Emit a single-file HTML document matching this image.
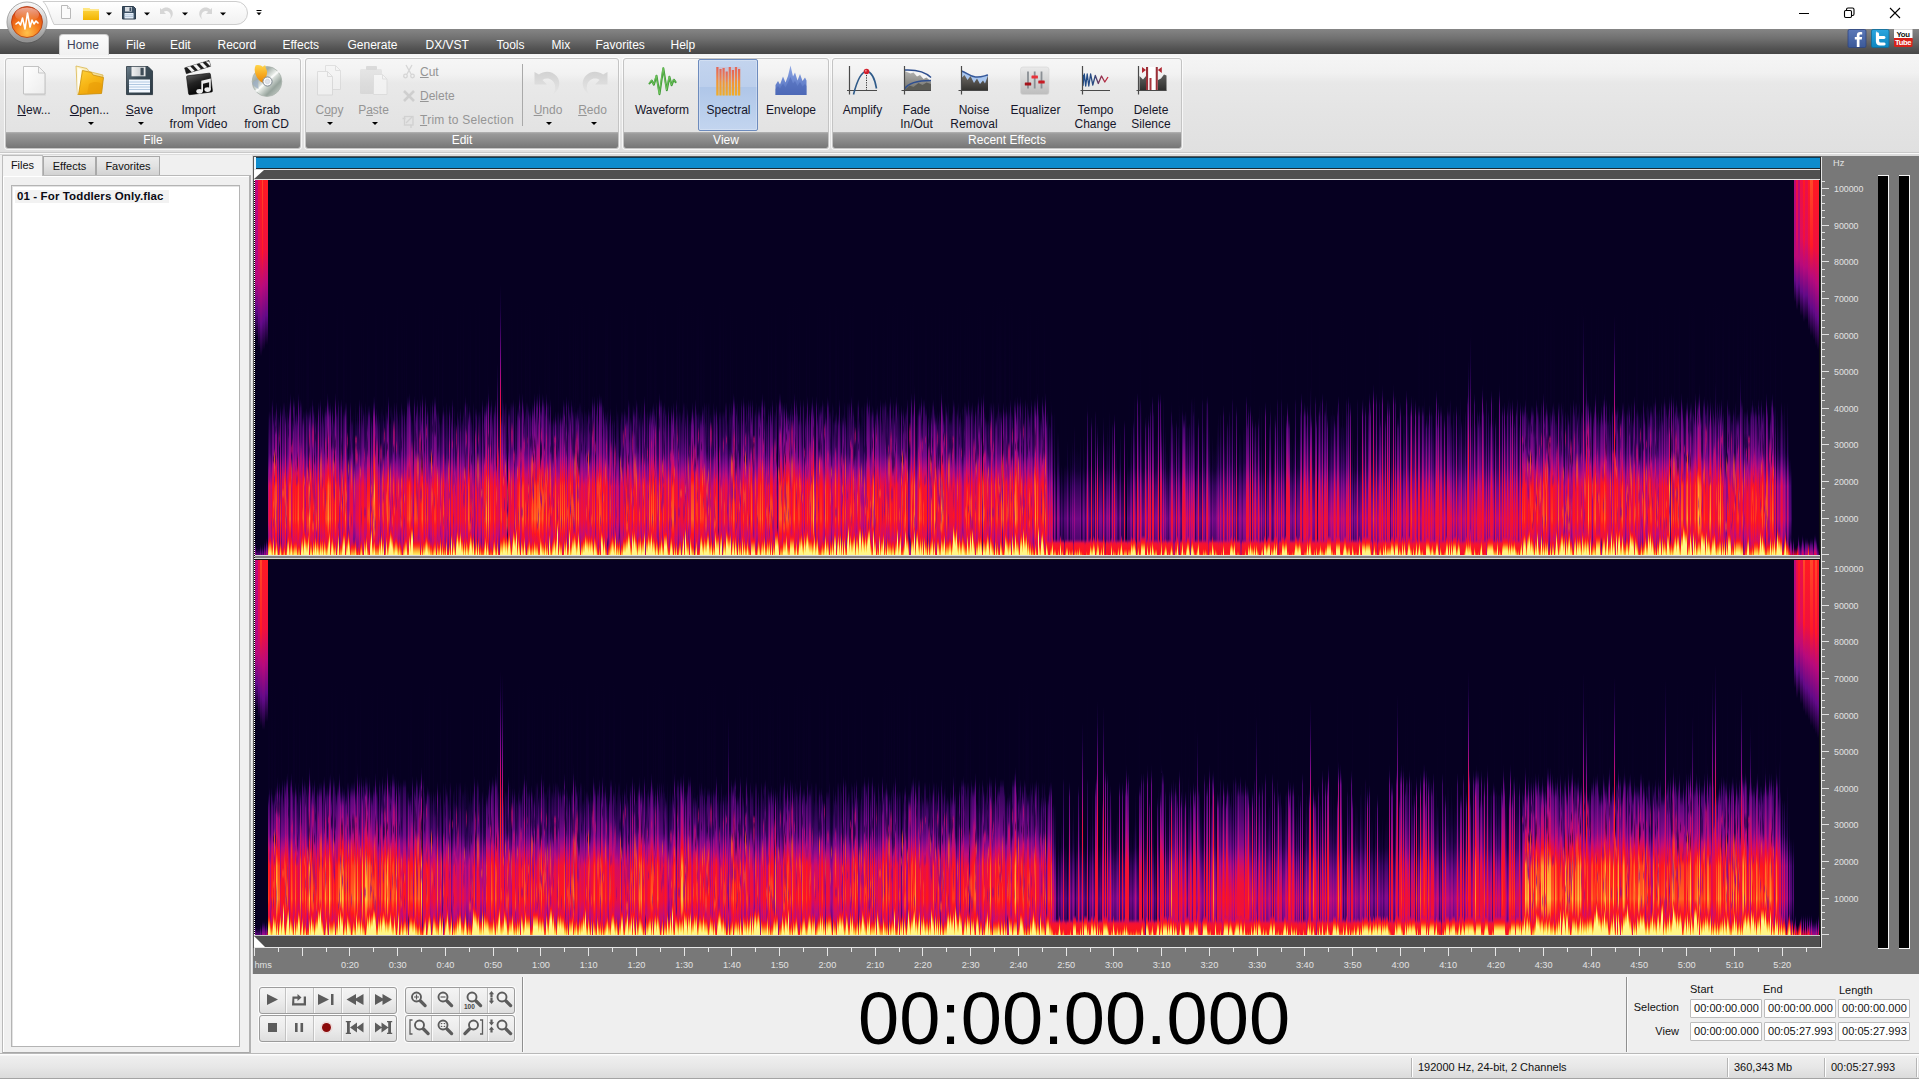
<!DOCTYPE html>
<html lang="en"><head><meta charset="utf-8"><title>Audio Editor</title>
<style>
*{box-sizing:border-box;margin:0;padding:0}
html,body{width:1919px;height:1079px;overflow:hidden}
body{position:relative;background:#f0f0f0;font-family:"Liberation Sans",sans-serif;font-size:12px;color:#16162a;-webkit-font-smoothing:antialiased}
.abs{position:absolute}
#title{left:0;top:0;width:1919px;height:29px;background:#fff}
#menubar{left:0;top:29px;width:1919px;height:25px;background:linear-gradient(#858585 0,#707070 38%,#535353 78%,#464646 100%)}
.mi{position:absolute;top:37px;height:16px;line-height:16px;color:#fff;font-size:12px;white-space:nowrap}
#hometab{left:59px;top:34px;width:50px;height:21px;border-radius:4px 4px 0 0;background:linear-gradient(#fbfbfb,#f1f1f1);border:1px solid #cfcfcf;border-bottom:none}
#ribbon{left:0;top:54px;width:1919px;height:99px;background:linear-gradient(#f5f5f5 0,#f1f1f1 19%,#e8e8e8 29%,#e4e4e4 60%,#e0e0e0 100%)}
#ribline{left:0;top:152px;width:1919px;height:3px;background:linear-gradient(#c9c9c9 0,#c9c9c9 33%,#fafafa 34%,#fafafa 66%,#dcdcdc 67%)}
.grp{position:absolute;top:58px;height:91px;border:1px solid #c4c4c4;border-radius:3px;background:linear-gradient(#f6f6f6 0,#f2f2f2 17%,#e9e9e9 27%,#e5e5e5 60%,#e1e1e1 100%);box-shadow:0 0 0 1px rgba(255,255,255,.7);overflow:hidden}
.grp .lab{position:absolute;left:0;right:0;bottom:0;height:16px;line-height:17px;text-align:center;color:#fff;font-size:12px;background:linear-gradient(#b4b4b4 0,#9a9a9a 12%,#8b8b8b 50%,#767676 100%)}
.bl{position:absolute;text-align:center;white-space:nowrap;line-height:14px;font-size:12px;transform:translateX(-50%)}
.dis{color:#959595}
.dd{position:absolute;width:0;height:0;border-left:3px solid transparent;border-right:3px solid transparent;border-top:3px solid #000;margin-left:-3px}
u{text-decoration:underline;text-underline-offset:1px}
.ic{position:absolute;overflow:visible}
</style></head><body>
<div id="title" class="abs"></div>
<div id="menubar" class="abs"></div>
<div id="ribbon" class="abs"></div>
<div id="ribline" class="abs"></div>
<!-- quick access pill -->
<svg class="abs" style="left:40px;top:0" width="215" height="28" viewBox="0 0 215 28">
<defs><linearGradient id="qp" x1="0" y1="0" x2="0" y2="1"><stop offset="0" stop-color="#fff"/><stop offset="1" stop-color="#f1f1f1"/></linearGradient></defs>
<path d="M3 1.5H196A11.5 11.5 0 0 1 196 24.5H14C9 14 8 6 3 1.5Z" fill="url(#qp)" stroke="#cdcdcd" stroke-width="1"/>
</svg>
<!-- app button -->
<svg class="abs" style="left:5px;top:0" width="46" height="46" viewBox="0 0 46 46">
<defs>
<linearGradient id="ab1" x1="0" y1="0" x2="0" y2="1"><stop offset="0" stop-color="#fdfdfd"/><stop offset=".5" stop-color="#c9c9c9"/><stop offset="1" stop-color="#8d8d8d"/></linearGradient>
<radialGradient id="ab2" cx=".5" cy=".85" r=".9"><stop offset="0" stop-color="#ffc24a"/><stop offset=".45" stop-color="#f57a1c"/><stop offset="1" stop-color="#d2340f"/></radialGradient>
<linearGradient id="ab3" x1="0" y1="0" x2="0" y2="1"><stop offset="0" stop-color="#fff" stop-opacity=".55"/><stop offset="1" stop-color="#fff" stop-opacity="0"/></linearGradient>
</defs>
<circle cx="22" cy="23" r="20.5" fill="#000" opacity=".10"/>
<circle cx="22" cy="22" r="20" fill="url(#ab1)" stroke="#9a9a9a" stroke-width=".8"/>
<circle cx="22" cy="22" r="15.5" fill="url(#ab2)" stroke="#b03a10" stroke-width=".8"/>
<ellipse cx="22" cy="14.5" rx="12" ry="7" fill="url(#ab3)"/>
<path d="M11 24l2.5-2 2 3 2-7 2.5 11 2.5-16 2.5 14 2-7 2 4 2-3 2 2" fill="none" stroke="#fff" stroke-width="1.6" stroke-linejoin="round" stroke-linecap="round"/>
</svg>
<!-- quick access icons -->
<svg class="abs" style="left:56px;top:2px" width="215" height="24" viewBox="0 0 215 24">
<defs>
<linearGradient id="qf" x1="0" y1="0" x2="0" y2="1"><stop offset="0" stop-color="#ffd84a"/><stop offset="1" stop-color="#f2b400"/></linearGradient>
</defs>
<!-- new doc -->
<path d="M5.5 3.5h6l3 3v10h-9z" fill="#fbfbfb" stroke="#b9b9b9"/><path d="M11.5 3.5v3h3" fill="#eee" stroke="#b9b9b9" stroke-width=".8"/>
<!-- folder -->
<path d="M27 6h6l1.5 1.5H43V18H27z" fill="url(#qf)"/><path d="M27 6h6l1.5 1.5H43V9H27z" fill="#ffe680"/>
<path d="M50 10.5h6l-3 3z" fill="#000"/>
<!-- save -->
<path d="M66.5 4.5h11l2 2v10.5h-13z" fill="#3c5064" stroke="#2d3d4e"/><rect x="69" y="5" width="7" height="4.5" fill="#d9dde2"/><rect x="73.5" y="5.5" width="1.8" height="3.5" fill="#3c5064"/><rect x="68.5" y="11" width="9" height="5.5" fill="#e9f1fa"/><path d="M68.5 12.8h9M68.5 14.6h9" stroke="#9db5cf" stroke-width=".7"/>
<path d="M88 10.5h6l-3 3z" fill="#000"/>
<!-- undo (disabled) -->
<path d="M104 6v6h6l-2.2-2.2c2.5-1.6 6-.6 6.8 3.2.4 1.5-.1 3-.9 4.3 3.5-2.5 4.2-7 1.3-9.8-2.7-2.6-6.6-2.5-9.3-.1z" fill="#d6d6d6"/>
<path d="M126 10.5h6l-3 3z" fill="#000"/>
<!-- redo (disabled) -->
<path d="M156 6v6h-6l2.2-2.2c-2.5-1.6-6-.6-6.8 3.2-.4 1.5.1 3 .9 4.3-3.5-2.5-4.2-7-1.3-9.8 2.7-2.6 6.6-2.5 9.3-.1z" fill="#d6d6d6"/>
<path d="M164 10.5h6l-3 3z" fill="#000"/>
<!-- customize -->
<path d="M200.5 8.5h5" stroke="#000" stroke-width="1"/><path d="M200.5 10.5h5l-2.5 2.8z" fill="#000"/>
</svg>
<!-- window controls -->
<svg class="abs" style="left:1790px;top:0" width="129" height="29" viewBox="0 0 129 29">
<path d="M9 13.5h10" stroke="#000" stroke-width="1"/>
<rect x="54.5" y="10.5" width="7" height="7" rx="1.2" fill="none" stroke="#000" stroke-width="1.1"/><path d="M56.5 10.5v-1q0-1.5 1.5-1.5h4.5q1.5 0 1.5 1.5v4.5q0 1.5-1.5 1.5h-1" fill="none" stroke="#000" stroke-width="1.1"/>
<path d="M100 8l10 10M110 8l-10 10" stroke="#000" stroke-width="1.1"/>
</svg>
<!-- social -->
<svg class="abs" style="left:1847px;top:29px" width="68" height="20" viewBox="0 0 68 20">
<defs><linearGradient id="fb" x1="0" y1="0" x2="0" y2="1"><stop offset="0" stop-color="#5b78b8"/><stop offset="1" stop-color="#3b5998"/></linearGradient>
<linearGradient id="tw" x1="0" y1="0" x2="0" y2="1"><stop offset="0" stop-color="#2aa5de"/><stop offset="1" stop-color="#0d86c0"/></linearGradient></defs>
<rect x="1" y=".5" width="18" height="18" rx="1.5" fill="url(#fb)" stroke="#2d4580" stroke-width=".8"/>
<path d="M12.5 18v-7.5h2.3l.3-2.5h-2.6v-1.3c0-.8.3-1.2 1.3-1.2h1.4v-2.3c-.4 0-1.2-.1-2.1-.1-2.1 0-3.3 1.2-3.3 3.3v1.6h-2v2.5h2v7.5z" fill="#fff"/>
<rect x="24.5" y=".5" width="17.5" height="18" rx="1.5" fill="url(#tw)" stroke="#0b6d9c" stroke-width=".8"/>
<path d="M29.5 3.5q2.5-.6 2.6 1.5v2h5q1.4.1 1.4 1.5t-1.4 1.5h-5v2q.1 1.5 1.6 1.5h3.6q1.3.1 1.3 1.5t-1.3 1.5h-4.2q-4-.2-4.2-4v-9q0-1.3.6-1.5z" fill="#fff"/>
<rect x="47" y=".3" width="18.5" height="9" fill="#fff"/><rect x="47" y="9" width="18.5" height="9" rx="1.5" fill="#d8221a"/><rect x="47" y="9" width="18.5" height="4" fill="#d8221a"/>
<text x="56" y="7.8" font-family="Liberation Sans,sans-serif" font-weight="bold" font-size="7.8" text-anchor="middle" fill="#111" letter-spacing="-.3">You</text>
<text x="56" y="16.2" font-family="Liberation Sans,sans-serif" font-weight="bold" font-size="7.6" text-anchor="middle" fill="#fff" letter-spacing="-.35">Tube</text>
</svg>
<!-- menu -->
<div id="hometab" class="abs"></div>
<div class="mi" style="left:67px;color:#3d4259">Home</div>
<div class="mi" style="left:126px">File</div>
<div class="mi" style="left:170px">Edit</div>
<div class="mi" style="left:217.5px">Record</div>
<div class="mi" style="left:282.5px">Effects</div>
<div class="mi" style="left:347.5px">Generate</div>
<div class="mi" style="left:425.5px">DX/VST</div>
<div class="mi" style="left:496.5px">Tools</div>
<div class="mi" style="left:551.5px">Mix</div>
<div class="mi" style="left:595.5px">Favorites</div>
<div class="mi" style="left:670.5px">Help</div>
<div class="grp" style="left:5px;width:296px"><div class="lab">File</div></div>
<div class="grp" style="left:305px;width:314px"><div class="lab">Edit</div></div>
<div class="grp" style="left:623px;width:206px"><div class="lab">View</div></div>
<div class="grp" style="left:832px;width:350px"><div class="lab">Recent Effects</div></div>
<!-- selected Spectral -->
<div class="abs" style="left:698px;top:59px;width:60px;height:72px;border:1px solid #6d8bbd;border-radius:2px;background:linear-gradient(#c3d4ee 0,#bccfec 38%,#afc6e8 39%,#b9ceec 70%,#c3d5ef 100%);box-shadow:inset 0 0 0 1px rgba(255,255,255,.25)"></div>
<!-- labels -->
<div class="bl" style="left:34px;top:103px"><u>N</u>ew...</div>
<div class="bl" style="left:89.5px;top:103px"><u>O</u>pen...</div><div class="dd" style="left:90.5px;top:122px"></div>
<div class="bl" style="left:139.5px;top:103px"><u>S</u>ave</div><div class="dd" style="left:140.5px;top:122px"></div>
<div class="bl" style="left:198.5px;top:103px">Import<br>from Video</div>
<div class="bl" style="left:266.5px;top:103px">Grab<br>from CD</div>
<div class="bl dis" style="left:329.5px;top:103px">C<u>o</u>py</div><div class="dd" style="left:329.5px;top:122px"></div>
<div class="bl dis" style="left:373.5px;top:103px">P<u>a</u>ste</div><div class="dd" style="left:374.5px;top:122px"></div>
<div class="bl dis" style="left:420px;top:65px;transform:none"><u>C</u>ut</div>
<div class="bl dis" style="left:420px;top:89px;transform:none"><u>D</u>elete</div>
<div class="bl dis" style="left:420px;top:113px;transform:none;letter-spacing:.25px"><u>T</u>rim to Selection</div>
<div class="abs" style="left:521.5px;top:64px;width:1px;height:62px;background:#a9a9a9"></div>
<div class="bl dis" style="left:548px;top:103px"><u>U</u>ndo</div><div class="dd" style="left:548.5px;top:122px"></div>
<div class="bl dis" style="left:592.5px;top:103px"><u>R</u>edo</div><div class="dd" style="left:593.5px;top:122px"></div>
<div class="bl" style="left:662px;top:103px">Waveform</div>
<div class="bl" style="left:728.5px;top:103px">Spectral</div>
<div class="bl" style="left:791px;top:103px">Envelope</div>
<div class="bl" style="left:862.5px;top:103px">Amplify</div>
<div class="bl" style="left:916.5px;top:103px">Fade<br>In/Out</div>
<div class="bl" style="left:974px;top:103px">Noise<br>Removal</div>
<div class="bl" style="left:1035.5px;top:103px">Equalizer</div>
<div class="bl" style="left:1095.5px;top:103px">Tempo<br>Change</div>
<div class="bl" style="left:1151px;top:103px">Delete<br>Silence</div>
<!-- New -->
<svg class="ic" style="left:20px;top:63px" width="30" height="36" viewBox="0 0 30 36">
<defs><linearGradient id="ng" x1="0" y1="0" x2="1" y2="1"><stop offset="0" stop-color="#ffffff"/><stop offset="1" stop-color="#ececec"/></linearGradient></defs>
<path d="M4 4.5h15l6 6v21H4z" fill="#000" opacity=".08" transform="translate(.7 1)"/>
<path d="M3.5 3.5h15l6.5 6.5v21h-21.5z" fill="url(#ng)" stroke="#c3c3c3" stroke-width="1"/>
<path d="M18.5 3.5v6.5h6.5z" fill="#f3f3f3" stroke="#c3c3c3" stroke-width=".9" stroke-linejoin="round"/>
</svg>
<!-- Open -->
<svg class="ic" style="left:73px;top:62px" width="34" height="36" viewBox="0 0 34 36">
<defs><linearGradient id="og" x1="0" y1="0" x2=".6" y2="1"><stop offset="0" stop-color="#ffd23a"/><stop offset=".55" stop-color="#f7b616"/><stop offset="1" stop-color="#eda20a"/></linearGradient>
<linearGradient id="og2" x1="0" y1="0" x2="1" y2="0"><stop offset="0" stop-color="#fff6d0"/><stop offset="1" stop-color="#f0d78a"/></linearGradient></defs>
<path d="M3 4l11 2.5 2 3 14 3.5-1.5 18L4.5 32.5z" fill="url(#og2)" stroke="#d9b64e" stroke-width=".8"/>
<path d="M4.5 6l4 1 -2.5 24.5-1.5.5z" fill="#fffdf2"/>
<path d="M9.5 8.5l9 2 1.5 2.5 10.5 2.5-2 16-23 1z" fill="url(#og)" stroke="#c98f10" stroke-width=".8" stroke-linejoin="round"/>
<path d="M16 22c5-3 10-2 13 0l-.8 8.5-14 1z" fill="#e89a06" opacity=".55"/>
</svg>
<!-- Save -->
<svg class="ic" style="left:124px;top:63px" width="32" height="35" viewBox="0 0 32 35">
<defs><linearGradient id="sg" x1="0" y1="0" x2="1" y2="1"><stop offset="0" stop-color="#6d7f8c"/><stop offset=".4" stop-color="#3d4d58"/><stop offset="1" stop-color="#2c3a44"/></linearGradient>
<linearGradient id="sg2" x1="0" y1="0" x2="1" y2="0"><stop offset="0" stop-color="#f2f2f2"/><stop offset=".6" stop-color="#cfd3d6"/><stop offset="1" stop-color="#e9e9e9"/></linearGradient></defs>
<path d="M2.5 3.5h21l5 5v23h-26z" fill="#000" opacity=".12" transform="translate(.6 1)"/>
<path d="M2.5 3.5h21.5l4.5 4.5v23.5h-26z" fill="url(#sg)" stroke="#2a3640" stroke-width=".8"/>
<rect x="7.5" y="3.8" width="14" height="9.5" fill="url(#sg2)"/>
<rect x="16.5" y="4.8" width="3.2" height="7.5" fill="#3e4c57"/>
<rect x="5" y="16.5" width="21" height="13" fill="#f4f9ff"/>
<path d="M5 19h21M5 21.5h21M5 24h21M5 26.5h21" stroke="#a8c2de" stroke-width=".9"/>
</svg>
<!-- Import from Video -->
<svg class="ic" style="left:183px;top:62px" width="34" height="36" viewBox="0 0 34 36">
<defs><linearGradient id="ig" x1="0" y1="0" x2=".3" y2="1"><stop offset="0" stop-color="#5a5a5a"/><stop offset=".45" stop-color="#232323"/><stop offset="1" stop-color="#050505"/></linearGradient></defs>
<g transform="rotate(-7 16 22)">
<rect x="4.5" y="12.5" width="24" height="19" rx="1.2" fill="url(#ig)" stroke="#0a0a0a" stroke-width=".6"/>
</g>
<g transform="rotate(-17 4 12)">
<rect x="3.5" y="5.5" width="25.5" height="6" fill="#1c1c1c" stroke="#111" stroke-width=".5"/>
<path d="M6 5.5l3 6h3.3L9.3 5.5zM12.5 5.5l3 6h3.3L15.8 5.5zM19 5.5l3 6h3.3L22.3 5.5zM25.5 5.5l3 6h.5V6.5z" fill="#f2f2f2"/>
</g>
<g fill="#ececec"><ellipse cx="16.5" cy="29.3" rx="3.2" ry="2.4"/><ellipse cx="24.6" cy="27.6" rx="3.2" ry="2.4"/><path d="M18.3 18.8l9.5-2.3v11h-1.7v-7.3l-6.1 1.5v7.7h-1.7z"/></g>
</svg>
<!-- Grab from CD -->
<svg class="ic" style="left:250px;top:62px" width="36" height="38" viewBox="0 0 36 38">
<defs>
<linearGradient id="cdg" x1="0" y1="0" x2="1" y2="1"><stop offset="0" stop-color="#dfe4e0"/><stop offset=".3" stop-color="#9faaa4"/><stop offset=".5" stop-color="#eef2ee"/><stop offset=".72" stop-color="#96a39c"/><stop offset="1" stop-color="#d8ddd8"/></linearGradient>
<linearGradient id="flg" x1="0" y1="0" x2="0" y2="1"><stop offset="0" stop-color="#ffd54a"/><stop offset=".6" stop-color="#f5a21a"/><stop offset="1" stop-color="#e8850a"/></linearGradient></defs>
<ellipse cx="17" cy="19.5" rx="14.8" ry="15" fill="url(#cdg)" stroke="#aab2ac" stroke-width=".8"/>
<path d="M17 19.5L29 9M17 19.5L5.5 29.5" stroke="#fff" stroke-width="2" opacity=".75"/>
<path d="M5.5 3.5c3-1 6 0 7.5 1.5.5-1 .8-1.8 2.5-1.5-.5 2.5 1 3 1.5 5.5.5 3-1 5-1 7.5 0 2 .5 3-1 5-2.5-.5-6-2.5-8-6C4.5 11 4 7 5.5 3.5z" fill="url(#flg)"/>
<path d="M8 18c-3 0-5 1.5-5.5 3.5 1.5 3 3.5 4 6 5.5z" fill="#9fb0c4" opacity=".8"/>
<circle cx="17.5" cy="19.5" r="4.6" fill="#f6f6f8" stroke="#7d878f" stroke-width="1"/>
<circle cx="17.5" cy="19.5" r="2.2" fill="#dfe3ea" stroke="#c5c9d2" stroke-width=".5"/>
</svg>
<!-- Copy (disabled) -->
<svg class="ic" style="left:314px;top:63px" width="32" height="34" viewBox="0 0 32 34" opacity=".55">
<path d="M11.5 2.5h10l5 5v19h-15z" fill="#f6f6f6" stroke="#d0d0d0"/><path d="M21.5 2.5v5h5" fill="none" stroke="#d0d0d0"/>
<path d="M3.5 8.5h10l5 5v18.5h-15z" fill="#f8f8f8" stroke="#cdcdcd"/><path d="M13.5 8.5v5h5" fill="none" stroke="#cdcdcd"/>
</svg>
<!-- Paste (disabled) -->
<svg class="ic" style="left:357px;top:63px" width="34" height="34" viewBox="0 0 34 34" opacity=".6">
<defs><linearGradient id="pg" x1="0" y1="0" x2="0" y2="1"><stop offset="0" stop-color="#dcdcdc"/><stop offset="1" stop-color="#cfcfcf"/></linearGradient></defs>
<rect x="3" y="6" width="22" height="25" rx="1.5" fill="url(#pg)"/>
<rect x="9" y="3" width="11" height="4" rx="1" fill="#c9c9c9"/>
<path d="M16.5 11.5h9l4.5 4.5v15.5h-13.5z" fill="#f8f8f8" stroke="#d6d6d6"/><path d="M25.5 11.5v4.5h4.5" fill="none" stroke="#d6d6d6"/>
</svg>
<!-- Cut / Delete / Trim icons (disabled) -->
<svg class="ic" style="left:401px;top:63px" width="16" height="66" viewBox="0 0 16 66" opacity=".8">
<g stroke="#cfcfcf" fill="none" stroke-width="1.3"><path d="M5 2l5 9M11 2L6 11"/><circle cx="4.5" cy="13" r="1.8"/><circle cx="11.5" cy="13" r="1.8"/></g>
<path d="M3 28l10 10M13 28L3 38" stroke="#c9c9c9" stroke-width="2.6"/>
<g stroke="#cdcdcd" fill="none" stroke-width="1.3"><rect x="3.5" y="53.5" width="8.5" height="8.5"/><path d="M1.5 55.5h3M10 62v3M5 60l6-6"/></g>
</svg>
<!-- Undo / Redo (disabled) -->
<svg class="ic" style="left:532px;top:66px" width="78" height="34" viewBox="0 0 78 34">
<defs><linearGradient id="ug" x1="0" y1="0" x2="0" y2="1"><stop offset="0" stop-color="#d2d2d2"/><stop offset="1" stop-color="#e6e6e6"/></linearGradient></defs>
<path d="M2.5 6v12.5h12.5l-4.6-4.6c4.5-2.8 11-1.5 12.6 5.6.8 3.4-.5 6.5-2 9 6.5-4.5 8.5-12.5 3.5-18.5-4.5-5.2-12-5.7-17.6-1.5z" fill="url(#ug)"/>
<path d="M75.5 6v12.5H63l4.6-4.6c-4.5-2.8-11-1.5-12.6 5.6-.8 3.4.5 6.5 2 9-6.5-4.5-8.5-12.5-3.5-18.5 4.5-5.2 12-5.7 17.6-1.5z" fill="url(#ug)"/>
</svg>
<!-- Waveform -->
<svg class="ic" style="left:646px;top:64px" width="34" height="34" viewBox="0 0 34 34">
<path d="M3.5 19.5l2.2-3 2.2 4.2 2.6-9 3 18.5 3.8-26 3.5 22 2.6-13.5 2.2 8.5 2.2-5.5 1.8 2.5" fill="none" stroke="#3f9a36" stroke-width="2" stroke-linejoin="round" stroke-linecap="round"/>
<path d="M3.5 19.5l2.2-3 2.2 4.2 2.6-9 3 18.5 3.8-26 3.5 22 2.6-13.5 2.2 8.5 2.2-5.5 1.8 2.5" fill="none" stroke="#7fd06a" stroke-width=".7" stroke-linejoin="round" stroke-linecap="round" transform="translate(-.3 -.3)"/>
</svg>
<!-- Spectral -->
<svg class="ic" style="left:714px;top:64px" width="30" height="34" viewBox="0 0 30 34">
<defs><linearGradient id="spg" x1="0" y1="0" x2="0" y2="1"><stop offset="0" stop-color="#e2655a"/><stop offset=".45" stop-color="#f08a4a"/><stop offset=".46" stop-color="#f0923a"/><stop offset="1" stop-color="#f0ae2a"/></linearGradient></defs>
<g fill="url(#spg)"><rect x="2" y="3" width="24.5" height="28.5" opacity=".15"/>
<rect x="2.3" y="3" width="2.2" height="28.5"/><rect x="5.4" y="5" width="2.2" height="26.5"/><rect x="8.5" y="4" width="2.2" height="27.5"/><rect x="11.6" y="7.5" width="2.2" height="24"/><rect x="14.7" y="3" width="2.2" height="28.5"/><rect x="17.8" y="6" width="2.2" height="25.5"/><rect x="20.9" y="3" width="2.2" height="28.5"/><rect x="24" y="5" width="2.2" height="26.5"/></g>
</svg>
<!-- Envelope -->
<svg class="ic" style="left:773px;top:63px" width="36" height="35" viewBox="0 0 36 35">
<defs><linearGradient id="eg" x1="0" y1="0" x2="0" y2="1"><stop offset="0" stop-color="#8fa8e6"/><stop offset=".55" stop-color="#6a86cf"/><stop offset="1" stop-color="#4f6cba"/></linearGradient></defs>
<path d="M2.5 32V22l2.5-4 2 3.5 3-8 2.5 6 2.5-6.5 2.5-10.5 2.5 11 2-4 2.5 8 2.5-6.5 2.5 7 2.5-3.5 1.5 3v14.5z" fill="url(#eg)"/>
<path d="M2.5 26l2.5-3 2 2.5 3-5 2.5 4 2.5-5 2.5-5.5 2.5 6.5 2-2.5 2.5 5 2.5-4 2.5 4.5 2.5-2.5 1.5 2v9h-31z" fill="#4a66b4" opacity=".55"/>
</svg>
<!-- Amplify -->
<svg class="ic" style="left:845px;top:63px" width="36" height="36" viewBox="0 0 36 36">
<path d="M4.5 3v28.5M2 27.5h30" stroke="#4a4a4a" stroke-width="1.2" fill="none"/>
<path d="M8.5 31.5C12 18 16 8.5 21.5 8.5c5 0 8.5 8 10 17" fill="none" stroke="#2f5b8a" stroke-width="1.6"/>
<path d="M21.5 12v15" stroke="#333" stroke-width="1" stroke-dasharray="1.2 1.2"/>
<circle cx="21.5" cy="8.5" r="2.8" fill="#d3202c"/><circle cx="20.8" cy="7.7" r="1" fill="#f08088"/>
</svg>
<!-- Fade -->
<svg class="ic" style="left:899px;top:63px" width="36" height="36" viewBox="0 0 36 36">
<defs><linearGradient id="fg" x1="0" y1="0" x2="0" y2="1"><stop offset="0" stop-color="#b5b5b3"/><stop offset="1" stop-color="#6d6d68"/></linearGradient></defs>
<path d="M5.5 7.5c10-.5 20 1 26.5 7.5V27.5H5.5z" fill="#f4f4f4"/>
<path d="M5.5 8l6 2.5 3-1 3.5 4 3-1.5 3.5 4 3-1.5 4.5 4V27.5H5.5z" fill="url(#fg)"/>
<path d="M5.5 27.5l5-5 4 1.5 5-4 4 2 4-2.5 4.5 1.5v6.5z" fill="#5b5b55"/>
<path d="M5.5 7c10-.5 20 1 26.5 7.5" fill="none" stroke="#2f4f8f" stroke-width="1.5"/>
<path d="M5.5 26c4-6.5 13-8.5 26.5-8.5" fill="none" stroke="#2f4f8f" stroke-width="1.5"/>
<path d="M5.5 3v28.5M2.5 27.5h29.5" stroke="#4a4a4a" stroke-width="1.2" fill="none"/>
</svg>
<!-- Noise Removal -->
<svg class="ic" style="left:956px;top:63px" width="36" height="36" viewBox="0 0 36 36">
<defs><linearGradient id="nrg" x1="0" y1="0" x2="0" y2="1"><stop offset="0" stop-color="#6e6a64"/><stop offset="1" stop-color="#33322f"/></linearGradient></defs>
<path d="M5.5 8c5 1.5 8 5.5 14 6s8-1 12.5-2V27.5H5.5z" fill="#a9c6ee"/>
<path d="M5.5 15l3-3 3 5 3-4 3.5 7 3-4.5 3 5.5 3-3.5 2 3 3-8V27.5H5.5z" fill="url(#nrg)"/>
<path d="M5.5 8c5 1.5 8 5.5 14 6s8-1 12.5-2" fill="none" stroke="#35589a" stroke-width="1.5"/>
<path d="M5.5 3v28.5M2.5 27.5h29.5" stroke="#4a4a4a" stroke-width="1.2" fill="none"/>
</svg>
<!-- Equalizer -->
<svg class="ic" style="left:1018px;top:64px" width="34" height="34" viewBox="0 0 34 34">
<defs><linearGradient id="eqg" x1="0" y1="0" x2="0" y2="1"><stop offset="0" stop-color="#eaeaea"/><stop offset="1" stop-color="#bdbdbd"/></linearGradient></defs>
<rect x="2.5" y="3" width="28.5" height="27.5" rx="2.5" fill="url(#eqg)" stroke="#d4d4d4" stroke-width=".6"/>
<path d="M10 7.5v17M16.7 7.5v17M23.5 7.5v17" stroke="#8a8f94" stroke-width="1.8"/>
<rect x="6.8" y="18.5" width="6.4" height="3" rx=".6" fill="#a5141c"/><rect x="13.5" y="11.5" width="6.4" height="3" rx=".6" fill="#e8323a"/><rect x="20.3" y="16.5" width="6.4" height="3" rx=".6" fill="#c81c24"/>
</svg>
<!-- Tempo -->
<svg class="ic" style="left:1078px;top:63px" width="36" height="36" viewBox="0 0 36 36">
<defs><linearGradient id="tg" x1="0" y1="0" x2="1" y2="0"><stop offset="0" stop-color="#1e4c8a"/><stop offset=".45" stop-color="#2c4a80"/><stop offset=".7" stop-color="#8a3050"/><stop offset="1" stop-color="#c8283a"/></linearGradient></defs>
<path d="M5 12V22.5l1.3-11.5 1.4 12 1.5-12 1.6 12 1.8-12 2.2 11 2.5-9.5 3 8 3.2-7.5 3.3 6 3.2-5" fill="none" stroke="url(#tg)" stroke-width="1.3" stroke-linejoin="round"/>
<path d="M4.5 3v28.5M2.5 27.5h29.5" stroke="#4a4a4a" stroke-width="1.2" fill="none"/>
</svg>
<!-- Delete Silence -->
<svg class="ic" style="left:1134px;top:63px" width="36" height="36" viewBox="0 0 36 36">
<defs><linearGradient id="dsg" x1="0" y1="0" x2="0" y2="1"><stop offset="0" stop-color="#5c5c5a"/><stop offset="1" stop-color="#2e2e2c"/></linearGradient></defs>
<path d="M5.5 27.5V13l3.5 3.5 3-3.5V27.5z" fill="url(#dsg)"/>
<path d="M24 27.5V17l3-1.5 3-4 2.5 1V27.5z" fill="url(#dsg)"/>
<rect x="12" y="4" width="2.3" height="23.5" fill="#9a3038"/><rect x="21.5" y="4" width="2.3" height="23.5" fill="#9a3038"/>
<rect x="14.3" y="4" width="7.2" height="23.5" fill="#fff"/>
<path d="M8 4l4 3-4 3zM27.8 4l-4 3 4 3z" fill="#b02832"/>
<rect x="15.5" y="15" width="2" height="12.5" fill="#a8343c"/>
<path d="M4.5 3v28.5M2.5 27.5h30" stroke="#4a4a4a" stroke-width="1.2" fill="none"/>
</svg>
<style>
.tab{position:absolute;top:156px;height:19px;line-height:18px;text-align:center;font-size:11px;color:#111;border:1px solid #a9a9a9;border-bottom:none;background:linear-gradient(#ececec 0,#e2e2e2 50%,#d2d2d2 100%)}
.tab.sel{top:155px;height:21px;background:#f3f3f3;border-color:#bdbdbd;z-index:2;line-height:19px}
#lp{left:2px;top:175px;width:249px;height:879px;border:1px solid #b9b9b9;border-right:2px solid #b2b2b2;border-bottom:2px solid #a8a8a8;background:#f0f0f0;box-shadow:inset 1px 1px 0 #fff}
#lb{left:11px;top:185px;width:229px;height:862px;border:1px solid #b4b4b4;background:#fff;box-shadow:inset 1px 1px 0 #e3e3e3}
#fi{left:15px;top:190px;width:154px;height:13px;background:#f2f2f2;font-size:11.5px;font-weight:bold;line-height:13px;padding-left:2px;color:#0a0a14;white-space:nowrap;letter-spacing:.12px}
#wp{left:252px;top:155px;width:1667px;height:819px;background:#787878;border-left:1px solid #dadada;border-top:1px solid #dcdcdc}
.tb{position:absolute;height:27px;border:1px solid #9c9c9c;border-radius:3px;background:linear-gradient(#f4f4f4 0,#ececec 50%,#dedede 100%);box-shadow:0 0 0 1px rgba(255,255,255,.8)}
.tb i{position:absolute;top:0;bottom:0;width:1px;background:#c2c2c2;box-shadow:1px 0 0 #fafafa}
.box{position:absolute;width:72px;height:19px;border:1px solid #bdbdbd;background:#fff;font-size:11px;line-height:17px;padding-left:3px;color:#111;white-space:nowrap;letter-spacing:.05px;border-radius:1px}
.sl{position:absolute;font-size:11px;line-height:13px;color:#111;white-space:nowrap}
#status{left:0;top:1055px;width:1919px;height:24px;background:linear-gradient(#efefef 0,#e7e7e7 50%,#dbdbdb 100%);border-top:1px solid #f6f6f6;border-bottom:1px solid #a4a4a4}
.sd{position:absolute;top:1058px;width:1px;height:19px;background:#b5b5b5;box-shadow:1px 0 0 #fff}
.st{position:absolute;top:1061px;font-size:11px;line-height:13px;color:#111;white-space:nowrap}
</style>
<div class="tab sel" style="left:2px;width:41px">Files</div>
<div class="tab" style="left:43px;width:53px">Effects</div>
<div class="tab" style="left:96px;width:64px">Favorites</div>
<div id="lp" class="abs"></div>
<div id="lb" class="abs"></div>
<div id="fi" class="abs">01 - For Toddlers Only.flac</div>
<div id="wp" class="abs"></div>
<svg class="abs" style="left:0;top:0" width="1919" height="1079" viewBox="0 0 1919 1079" shape-rendering="crispEdges">
<defs><linearGradient id="m13" gradientUnits="userSpaceOnUse" x1="0" y1="375" x2="0" y2="294"><stop offset="0" stop-color="#0e012f"/><stop offset="0.296" stop-color="#220348"/><stop offset="0.444" stop-color="#310459"/><stop offset="0.778" stop-color="#100133"/><stop offset="1" stop-color="#060021"/></linearGradient><linearGradient id="m14" gradientUnits="userSpaceOnUse" x1="0" y1="375" x2="0" y2="294"><stop offset="0" stop-color="#0e012f"/><stop offset="0.296" stop-color="#220348"/><stop offset="0.444" stop-color="#310459"/><stop offset="0.778" stop-color="#100133"/><stop offset="1" stop-color="#060021"/></linearGradient><linearGradient id="m15" gradientUnits="userSpaceOnUse" x1="0" y1="375" x2="0" y2="294"><stop offset="0" stop-color="#0e012f"/><stop offset="0.296" stop-color="#220348"/><stop offset="0.444" stop-color="#310459"/><stop offset="0.778" stop-color="#100133"/><stop offset="1" stop-color="#060021"/></linearGradient><linearGradient id="m23" gradientUnits="userSpaceOnUse" x1="0" y1="375" x2="0" y2="288"><stop offset="0" stop-color="#15023a"/><stop offset="0.414" stop-color="#43066a"/><stop offset="0.862" stop-color="#0d012d"/><stop offset="1" stop-color="#060021"/></linearGradient><linearGradient id="m24" gradientUnits="userSpaceOnUse" x1="0" y1="375" x2="0" y2="288"><stop offset="0" stop-color="#15023a"/><stop offset="0.414" stop-color="#43066a"/><stop offset="0.862" stop-color="#0d012d"/><stop offset="1" stop-color="#060021"/></linearGradient><linearGradient id="m25" gradientUnits="userSpaceOnUse" x1="0" y1="375" x2="0" y2="288"><stop offset="0" stop-color="#15023a"/><stop offset="0.414" stop-color="#43066a"/><stop offset="0.862" stop-color="#0d012d"/><stop offset="1" stop-color="#060021"/></linearGradient><linearGradient id="m32" gradientUnits="userSpaceOnUse" x1="0" y1="375" x2="0" y2="291"><stop offset="0" stop-color="#060021"/><stop offset="0.214" stop-color="#0a0028"/><stop offset="0.429" stop-color="#200347"/><stop offset="0.857" stop-color="#110133"/><stop offset="1" stop-color="#060021"/></linearGradient><linearGradient id="m33" gradientUnits="userSpaceOnUse" x1="0" y1="375" x2="0" y2="117"><stop offset="0" stop-color="#24034b"/><stop offset="0.14" stop-color="#580778"/><stop offset="0.267" stop-color="#200347"/><stop offset="0.349" stop-color="#060022"/><stop offset="1" stop-color="#060021"/></linearGradient><linearGradient id="m34" gradientUnits="userSpaceOnUse" x1="0" y1="375" x2="0" y2="117"><stop offset="0" stop-color="#24034b"/><stop offset="0.14" stop-color="#580778"/><stop offset="0.267" stop-color="#200347"/><stop offset="0.349" stop-color="#060022"/><stop offset="1" stop-color="#060021"/></linearGradient><linearGradient id="m35" gradientUnits="userSpaceOnUse" x1="0" y1="375" x2="0" y2="117"><stop offset="0" stop-color="#24034b"/><stop offset="0.14" stop-color="#580778"/><stop offset="0.267" stop-color="#200347"/><stop offset="0.349" stop-color="#060022"/><stop offset="1" stop-color="#060021"/></linearGradient><linearGradient id="m40" gradientUnits="userSpaceOnUse" x1="0" y1="375" x2="0" y2="288"><stop offset="0" stop-color="#060021"/><stop offset="0.138" stop-color="#0b012a"/><stop offset="0.31" stop-color="#1d0343"/><stop offset="0.414" stop-color="#310459"/><stop offset="0.828" stop-color="#190240"/><stop offset="1" stop-color="#060021"/></linearGradient><linearGradient id="m41" gradientUnits="userSpaceOnUse" x1="0" y1="375" x2="0" y2="288"><stop offset="0" stop-color="#060021"/><stop offset="0.138" stop-color="#0b012a"/><stop offset="0.31" stop-color="#1d0343"/><stop offset="0.414" stop-color="#310459"/><stop offset="0.828" stop-color="#190240"/><stop offset="1" stop-color="#060021"/></linearGradient><linearGradient id="m43" gradientUnits="userSpaceOnUse" x1="0" y1="375" x2="0" y2="270"><stop offset="0" stop-color="#35055d"/><stop offset="0.343" stop-color="#6f0984"/><stop offset="0.657" stop-color="#310458"/><stop offset="0.8" stop-color="#110133"/><stop offset="1" stop-color="#060021"/></linearGradient><linearGradient id="m44" gradientUnits="userSpaceOnUse" x1="0" y1="375" x2="0" y2="270"><stop offset="0" stop-color="#35055d"/><stop offset="0.343" stop-color="#6f0984"/><stop offset="0.657" stop-color="#310458"/><stop offset="0.8" stop-color="#110133"/><stop offset="1" stop-color="#060021"/></linearGradient><linearGradient id="m45" gradientUnits="userSpaceOnUse" x1="0" y1="375" x2="0" y2="267"><stop offset="0" stop-color="#35055d"/><stop offset="0.333" stop-color="#6f0984"/><stop offset="0.639" stop-color="#310458"/><stop offset="0.778" stop-color="#110133"/><stop offset="1" stop-color="#060021"/></linearGradient><linearGradient id="m53" gradientUnits="userSpaceOnUse" x1="0" y1="375" x2="0" y2="261"><stop offset="0" stop-color="#47066e"/><stop offset="0.289" stop-color="#820a8b"/><stop offset="0.342" stop-color="#840a8a"/><stop offset="0.605" stop-color="#42066a"/><stop offset="0.763" stop-color="#16023b"/><stop offset="1" stop-color="#060021"/></linearGradient><linearGradient id="m54" gradientUnits="userSpaceOnUse" x1="0" y1="375" x2="0" y2="258"><stop offset="0" stop-color="#47066e"/><stop offset="0.282" stop-color="#820a8b"/><stop offset="0.333" stop-color="#840a8a"/><stop offset="0.59" stop-color="#42066a"/><stop offset="0.744" stop-color="#16023b"/><stop offset="1" stop-color="#060021"/></linearGradient><linearGradient id="m55" gradientUnits="userSpaceOnUse" x1="0" y1="375" x2="0" y2="255"><stop offset="0" stop-color="#47066e"/><stop offset="0.275" stop-color="#820a8b"/><stop offset="0.325" stop-color="#840a8a"/><stop offset="0.575" stop-color="#42066a"/><stop offset="0.725" stop-color="#16023b"/><stop offset="1" stop-color="#060021"/></linearGradient><linearGradient id="m61" gradientUnits="userSpaceOnUse" x1="0" y1="375" x2="0" y2="279"><stop offset="0" stop-color="#0e012e"/><stop offset="0.125" stop-color="#1d0343"/><stop offset="0.375" stop-color="#580778"/><stop offset="0.719" stop-color="#43066b"/><stop offset="0.875" stop-color="#15023b"/><stop offset="1" stop-color="#060021"/></linearGradient><linearGradient id="m62" gradientUnits="userSpaceOnUse" x1="0" y1="375" x2="0" y2="279"><stop offset="0" stop-color="#0e012e"/><stop offset="0.125" stop-color="#1d0343"/><stop offset="0.375" stop-color="#580778"/><stop offset="0.719" stop-color="#43066b"/><stop offset="0.875" stop-color="#15023b"/><stop offset="1" stop-color="#060021"/></linearGradient><linearGradient id="m63" gradientUnits="userSpaceOnUse" x1="0" y1="375" x2="0" y2="252"><stop offset="0" stop-color="#5e087b"/><stop offset="0.171" stop-color="#840a8a"/><stop offset="0.293" stop-color="#a30b83"/><stop offset="0.439" stop-color="#790a8a"/><stop offset="0.61" stop-color="#44066c"/><stop offset="0.756" stop-color="#1c0342"/><stop offset="1" stop-color="#060021"/></linearGradient><linearGradient id="m64" gradientUnits="userSpaceOnUse" x1="0" y1="375" x2="0" y2="246"><stop offset="0" stop-color="#5e087b"/><stop offset="0.163" stop-color="#840a8a"/><stop offset="0.279" stop-color="#a30b83"/><stop offset="0.419" stop-color="#790a8a"/><stop offset="0.581" stop-color="#44066c"/><stop offset="0.721" stop-color="#1c0342"/><stop offset="1" stop-color="#060021"/></linearGradient><linearGradient id="m65" gradientUnits="userSpaceOnUse" x1="0" y1="375" x2="0" y2="243"><stop offset="0" stop-color="#5e087b"/><stop offset="0.159" stop-color="#840a8a"/><stop offset="0.273" stop-color="#a30b83"/><stop offset="0.409" stop-color="#790a8a"/><stop offset="0.568" stop-color="#44066c"/><stop offset="0.705" stop-color="#1c0342"/><stop offset="1" stop-color="#060021"/></linearGradient><linearGradient id="m70" gradientUnits="userSpaceOnUse" x1="0" y1="375" x2="0" y2="270"><stop offset="0" stop-color="#15023a"/><stop offset="0.286" stop-color="#5d087a"/><stop offset="0.343" stop-color="#6f0984"/><stop offset="0.657" stop-color="#590778"/><stop offset="0.857" stop-color="#15023a"/><stop offset="1" stop-color="#060021"/></linearGradient><linearGradient id="m71" gradientUnits="userSpaceOnUse" x1="0" y1="375" x2="0" y2="270"><stop offset="0" stop-color="#15023a"/><stop offset="0.286" stop-color="#5d087a"/><stop offset="0.343" stop-color="#6f0984"/><stop offset="0.657" stop-color="#590778"/><stop offset="0.857" stop-color="#15023a"/><stop offset="1" stop-color="#060021"/></linearGradient><linearGradient id="m72" gradientUnits="userSpaceOnUse" x1="0" y1="375" x2="0" y2="270"><stop offset="0" stop-color="#15023a"/><stop offset="0.286" stop-color="#5d087a"/><stop offset="0.343" stop-color="#6f0984"/><stop offset="0.657" stop-color="#590778"/><stop offset="0.857" stop-color="#15023a"/><stop offset="1" stop-color="#060021"/></linearGradient><linearGradient id="m73" gradientUnits="userSpaceOnUse" x1="0" y1="375" x2="0" y2="240"><stop offset="0" stop-color="#750987"/><stop offset="0.178" stop-color="#a50b83"/><stop offset="0.267" stop-color="#be0c7d"/><stop offset="0.489" stop-color="#760988"/><stop offset="0.644" stop-color="#37055f"/><stop offset="0.822" stop-color="#120235"/><stop offset="1" stop-color="#060021"/></linearGradient><linearGradient id="m74" gradientUnits="userSpaceOnUse" x1="0" y1="375" x2="0" y2="231"><stop offset="0" stop-color="#750987"/><stop offset="0.167" stop-color="#a50b83"/><stop offset="0.25" stop-color="#be0c7d"/><stop offset="0.458" stop-color="#760988"/><stop offset="0.604" stop-color="#37055f"/><stop offset="0.771" stop-color="#140239"/><stop offset="1" stop-color="#060021"/></linearGradient><linearGradient id="m75" gradientUnits="userSpaceOnUse" x1="0" y1="375" x2="0" y2="225"><stop offset="0" stop-color="#750987"/><stop offset="0.16" stop-color="#a50b83"/><stop offset="0.24" stop-color="#be0c7d"/><stop offset="0.44" stop-color="#760988"/><stop offset="0.58" stop-color="#37055f"/><stop offset="0.74" stop-color="#15023a"/><stop offset="1" stop-color="#060021"/></linearGradient><linearGradient id="m80" gradientUnits="userSpaceOnUse" x1="0" y1="375" x2="0" y2="258"><stop offset="0" stop-color="#24034a"/><stop offset="0.205" stop-color="#62087d"/><stop offset="0.282" stop-color="#7d0a8c"/><stop offset="0.308" stop-color="#880a8a"/><stop offset="0.59" stop-color="#6f0985"/><stop offset="0.744" stop-color="#2d0454"/><stop offset="0.846" stop-color="#0f0131"/><stop offset="1" stop-color="#060021"/></linearGradient><linearGradient id="m81" gradientUnits="userSpaceOnUse" x1="0" y1="375" x2="0" y2="255"><stop offset="0" stop-color="#24034a"/><stop offset="0.2" stop-color="#62087d"/><stop offset="0.275" stop-color="#7d0a8c"/><stop offset="0.3" stop-color="#880a8a"/><stop offset="0.575" stop-color="#6f0985"/><stop offset="0.725" stop-color="#2d0454"/><stop offset="0.825" stop-color="#0f0131"/><stop offset="1" stop-color="#060021"/></linearGradient><linearGradient id="m82" gradientUnits="userSpaceOnUse" x1="0" y1="375" x2="0" y2="252"><stop offset="0" stop-color="#24034a"/><stop offset="0.195" stop-color="#62087d"/><stop offset="0.268" stop-color="#7d0a8c"/><stop offset="0.293" stop-color="#880a8a"/><stop offset="0.561" stop-color="#6f0985"/><stop offset="0.707" stop-color="#2d0454"/><stop offset="0.805" stop-color="#100131"/><stop offset="1" stop-color="#060021"/></linearGradient><linearGradient id="m83" gradientUnits="userSpaceOnUse" x1="0" y1="375" x2="0" y2="117"><stop offset="0" stop-color="#8e0b88"/><stop offset="0.105" stop-color="#c40c75"/><stop offset="0.14" stop-color="#d30d61"/><stop offset="0.198" stop-color="#b60c7f"/><stop offset="0.279" stop-color="#7c0a8c"/><stop offset="0.337" stop-color="#490670"/><stop offset="0.465" stop-color="#130236"/><stop offset="0.488" stop-color="#0f0130"/><stop offset="0.5" stop-color="#070022"/><stop offset="1" stop-color="#060021"/></linearGradient><linearGradient id="m84" gradientUnits="userSpaceOnUse" x1="0" y1="375" x2="0" y2="234"><stop offset="0" stop-color="#8e0b88"/><stop offset="0.191" stop-color="#c40c75"/><stop offset="0.255" stop-color="#d30d61"/><stop offset="0.362" stop-color="#b60c7f"/><stop offset="0.511" stop-color="#7c0a8c"/><stop offset="0.617" stop-color="#490670"/><stop offset="0.872" stop-color="#140239"/><stop offset="0.979" stop-color="#0c012c"/><stop offset="1" stop-color="#060021"/></linearGradient><linearGradient id="m85" gradientUnits="userSpaceOnUse" x1="0" y1="375" x2="0" y2="216"><stop offset="0" stop-color="#8e0b88"/><stop offset="0.17" stop-color="#c40c75"/><stop offset="0.226" stop-color="#d30d61"/><stop offset="0.321" stop-color="#b60c7f"/><stop offset="0.453" stop-color="#7c0a8c"/><stop offset="0.547" stop-color="#490670"/><stop offset="0.774" stop-color="#16023d"/><stop offset="1" stop-color="#060021"/></linearGradient><linearGradient id="m90" gradientUnits="userSpaceOnUse" x1="0" y1="375" x2="0" y2="249"><stop offset="0" stop-color="#35055c"/><stop offset="0.19" stop-color="#780a8a"/><stop offset="0.286" stop-color="#a30b83"/><stop offset="0.548" stop-color="#880a89"/><stop offset="0.595" stop-color="#700985"/><stop offset="0.738" stop-color="#2b0452"/><stop offset="0.81" stop-color="#130237"/><stop offset="1" stop-color="#060021"/></linearGradient><linearGradient id="m91" gradientUnits="userSpaceOnUse" x1="0" y1="375" x2="0" y2="243"><stop offset="0" stop-color="#35055c"/><stop offset="0.182" stop-color="#780a8a"/><stop offset="0.273" stop-color="#a30b83"/><stop offset="0.523" stop-color="#880a89"/><stop offset="0.568" stop-color="#700985"/><stop offset="0.705" stop-color="#2b0452"/><stop offset="0.773" stop-color="#130238"/><stop offset="1" stop-color="#060021"/></linearGradient><linearGradient id="m92" gradientUnits="userSpaceOnUse" x1="0" y1="375" x2="0" y2="240"><stop offset="0" stop-color="#35055c"/><stop offset="0.178" stop-color="#780a8a"/><stop offset="0.267" stop-color="#a30b83"/><stop offset="0.511" stop-color="#880a89"/><stop offset="0.556" stop-color="#700985"/><stop offset="0.689" stop-color="#2b0452"/><stop offset="0.733" stop-color="#16023d"/><stop offset="1" stop-color="#060021"/></linearGradient><linearGradient id="m93" gradientUnits="userSpaceOnUse" x1="0" y1="375" x2="0" y2="243"><stop offset="0" stop-color="#a90b82"/><stop offset="0.114" stop-color="#c60c72"/><stop offset="0.273" stop-color="#e80e46"/><stop offset="0.455" stop-color="#ba0c7e"/><stop offset="0.545" stop-color="#970b86"/><stop offset="0.591" stop-color="#7d0a8c"/><stop offset="0.682" stop-color="#590779"/><stop offset="0.955" stop-color="#15023b"/><stop offset="1" stop-color="#060021"/></linearGradient><linearGradient id="m94" gradientUnits="userSpaceOnUse" x1="0" y1="375" x2="0" y2="231"><stop offset="0" stop-color="#a90b82"/><stop offset="0.104" stop-color="#c60c72"/><stop offset="0.25" stop-color="#e80e46"/><stop offset="0.417" stop-color="#ba0c7e"/><stop offset="0.5" stop-color="#970b86"/><stop offset="0.542" stop-color="#7d0a8c"/><stop offset="0.625" stop-color="#590779"/><stop offset="0.792" stop-color="#2f0456"/><stop offset="0.958" stop-color="#130237"/><stop offset="1" stop-color="#060021"/></linearGradient><linearGradient id="m95" gradientUnits="userSpaceOnUse" x1="0" y1="375" x2="0" y2="219"><stop offset="0" stop-color="#a90b82"/><stop offset="0.0962" stop-color="#c60c72"/><stop offset="0.231" stop-color="#e80e46"/><stop offset="0.385" stop-color="#ba0c7e"/><stop offset="0.462" stop-color="#970b86"/><stop offset="0.5" stop-color="#7d0a8c"/><stop offset="0.577" stop-color="#590779"/><stop offset="0.712" stop-color="#36055d"/><stop offset="0.942" stop-color="#120135"/><stop offset="0.962" stop-color="#110133"/><stop offset="1" stop-color="#060021"/></linearGradient><linearGradient id="m100" gradientUnits="userSpaceOnUse" x1="0" y1="375" x2="0" y2="240"><stop offset="0" stop-color="#46066e"/><stop offset="0.133" stop-color="#7d0a8c"/><stop offset="0.267" stop-color="#be0c7d"/><stop offset="0.511" stop-color="#a30b83"/><stop offset="0.578" stop-color="#7a0a8a"/><stop offset="0.711" stop-color="#320459"/><stop offset="0.8" stop-color="#16023c"/><stop offset="1" stop-color="#060021"/></linearGradient><linearGradient id="m101" gradientUnits="userSpaceOnUse" x1="0" y1="375" x2="0" y2="231"><stop offset="0" stop-color="#46066e"/><stop offset="0.125" stop-color="#7d0a8c"/><stop offset="0.25" stop-color="#be0c7d"/><stop offset="0.479" stop-color="#a30b83"/><stop offset="0.542" stop-color="#7a0a8a"/><stop offset="0.667" stop-color="#320459"/><stop offset="0.75" stop-color="#18023e"/><stop offset="1" stop-color="#060021"/></linearGradient><linearGradient id="m102" gradientUnits="userSpaceOnUse" x1="0" y1="375" x2="0" y2="225"><stop offset="0" stop-color="#46066e"/><stop offset="0.12" stop-color="#7d0a8c"/><stop offset="0.24" stop-color="#be0c7d"/><stop offset="0.46" stop-color="#a30b83"/><stop offset="0.52" stop-color="#7a0a8a"/><stop offset="0.64" stop-color="#320459"/><stop offset="0.72" stop-color="#1a0240"/><stop offset="1" stop-color="#060021"/></linearGradient><linearGradient id="m103" gradientUnits="userSpaceOnUse" x1="0" y1="375" x2="0" y2="240"><stop offset="0" stop-color="#c30c77"/><stop offset="0.244" stop-color="#f11136"/><stop offset="0.311" stop-color="#ee103a"/><stop offset="0.511" stop-color="#be0c7d"/><stop offset="0.644" stop-color="#770a89"/><stop offset="0.867" stop-color="#35055c"/><stop offset="0.933" stop-color="#25034c"/><stop offset="0.978" stop-color="#0c012c"/><stop offset="1" stop-color="#060021"/></linearGradient><linearGradient id="m104" gradientUnits="userSpaceOnUse" x1="0" y1="375" x2="0" y2="222"><stop offset="0" stop-color="#c30c77"/><stop offset="0.216" stop-color="#f11136"/><stop offset="0.275" stop-color="#ee103a"/><stop offset="0.451" stop-color="#be0c7d"/><stop offset="0.569" stop-color="#770a89"/><stop offset="0.745" stop-color="#400668"/><stop offset="0.902" stop-color="#1f0346"/><stop offset="0.941" stop-color="#0a0028"/><stop offset="1" stop-color="#060021"/></linearGradient><linearGradient id="m105" gradientUnits="userSpaceOnUse" x1="0" y1="375" x2="0" y2="117"><stop offset="0" stop-color="#c30c77"/><stop offset="0.128" stop-color="#f11136"/><stop offset="0.163" stop-color="#ee103a"/><stop offset="0.267" stop-color="#be0c7d"/><stop offset="0.337" stop-color="#770a89"/><stop offset="0.43" stop-color="#47066f"/><stop offset="0.581" stop-color="#19023f"/><stop offset="0.605" stop-color="#070023"/><stop offset="1" stop-color="#060021"/></linearGradient><linearGradient id="m110" gradientUnits="userSpaceOnUse" x1="0" y1="375" x2="0" y2="243"><stop offset="0" stop-color="#5d087b"/><stop offset="0.0909" stop-color="#820a8b"/><stop offset="0.227" stop-color="#c20c78"/><stop offset="0.273" stop-color="#d30d61"/><stop offset="0.523" stop-color="#be0c7d"/><stop offset="0.636" stop-color="#770a88"/><stop offset="0.75" stop-color="#380560"/><stop offset="0.932" stop-color="#130237"/><stop offset="1" stop-color="#060021"/></linearGradient><linearGradient id="m111" gradientUnits="userSpaceOnUse" x1="0" y1="375" x2="0" y2="231"><stop offset="0" stop-color="#5d087b"/><stop offset="0.0833" stop-color="#820a8b"/><stop offset="0.208" stop-color="#c20c78"/><stop offset="0.25" stop-color="#d30d61"/><stop offset="0.479" stop-color="#be0c7d"/><stop offset="0.583" stop-color="#770a88"/><stop offset="0.688" stop-color="#390560"/><stop offset="0.896" stop-color="#120235"/><stop offset="1" stop-color="#060021"/></linearGradient><linearGradient id="m112" gradientUnits="userSpaceOnUse" x1="0" y1="375" x2="0" y2="222"><stop offset="0" stop-color="#5d087b"/><stop offset="0.0784" stop-color="#820a8b"/><stop offset="0.196" stop-color="#c20c78"/><stop offset="0.235" stop-color="#d30d61"/><stop offset="0.451" stop-color="#be0c7d"/><stop offset="0.549" stop-color="#770a88"/><stop offset="0.647" stop-color="#390560"/><stop offset="0.863" stop-color="#130236"/><stop offset="1" stop-color="#060021"/></linearGradient><linearGradient id="m113" gradientUnits="userSpaceOnUse" x1="0" y1="375" x2="0" y2="237"><stop offset="0" stop-color="#d80d5b"/><stop offset="0.152" stop-color="#f11135"/><stop offset="0.37" stop-color="#f01137"/><stop offset="0.5" stop-color="#d30d62"/><stop offset="0.565" stop-color="#b30c80"/><stop offset="0.652" stop-color="#890a89"/><stop offset="0.739" stop-color="#690981"/><stop offset="0.913" stop-color="#37055e"/><stop offset="0.957" stop-color="#130237"/><stop offset="1" stop-color="#060021"/></linearGradient><linearGradient id="m114" gradientUnits="userSpaceOnUse" x1="0" y1="375" x2="0" y2="225"><stop offset="0" stop-color="#d80d5b"/><stop offset="0.14" stop-color="#f11135"/><stop offset="0.34" stop-color="#f01137"/><stop offset="0.46" stop-color="#d30d62"/><stop offset="0.52" stop-color="#b30c80"/><stop offset="0.6" stop-color="#890a89"/><stop offset="0.7" stop-color="#66087f"/><stop offset="0.92" stop-color="#300458"/><stop offset="0.96" stop-color="#110133"/><stop offset="1" stop-color="#060021"/></linearGradient><linearGradient id="m115" gradientUnits="userSpaceOnUse" x1="0" y1="375" x2="0" y2="216"><stop offset="0" stop-color="#d80d5b"/><stop offset="0.132" stop-color="#f11135"/><stop offset="0.321" stop-color="#f01137"/><stop offset="0.434" stop-color="#d30d62"/><stop offset="0.491" stop-color="#b30c80"/><stop offset="0.566" stop-color="#890a89"/><stop offset="0.717" stop-color="#590779"/><stop offset="0.943" stop-color="#2a0451"/><stop offset="0.962" stop-color="#16023c"/><stop offset="1" stop-color="#060021"/></linearGradient><linearGradient id="m120" gradientUnits="userSpaceOnUse" x1="0" y1="375" x2="0" y2="240"><stop offset="0" stop-color="#740987"/><stop offset="0.0667" stop-color="#930b87"/><stop offset="0.156" stop-color="#be0c7d"/><stop offset="0.267" stop-color="#e80e46"/><stop offset="0.511" stop-color="#d30d61"/><stop offset="0.556" stop-color="#bf0c7c"/><stop offset="0.644" stop-color="#810a8b"/><stop offset="0.756" stop-color="#42066a"/><stop offset="0.956" stop-color="#140238"/><stop offset="1" stop-color="#060021"/></linearGradient><linearGradient id="m121" gradientUnits="userSpaceOnUse" x1="0" y1="375" x2="0" y2="231"><stop offset="0" stop-color="#740987"/><stop offset="0.0625" stop-color="#930b87"/><stop offset="0.146" stop-color="#be0c7d"/><stop offset="0.25" stop-color="#e80e46"/><stop offset="0.479" stop-color="#d30d61"/><stop offset="0.521" stop-color="#bf0c7c"/><stop offset="0.604" stop-color="#810a8b"/><stop offset="0.708" stop-color="#43066b"/><stop offset="0.958" stop-color="#120135"/><stop offset="1" stop-color="#060021"/></linearGradient><linearGradient id="m122" gradientUnits="userSpaceOnUse" x1="0" y1="375" x2="0" y2="222"><stop offset="0" stop-color="#740987"/><stop offset="0.0588" stop-color="#930b87"/><stop offset="0.137" stop-color="#be0c7d"/><stop offset="0.235" stop-color="#e80e46"/><stop offset="0.451" stop-color="#d30d61"/><stop offset="0.49" stop-color="#bf0c7c"/><stop offset="0.569" stop-color="#810a8b"/><stop offset="0.667" stop-color="#43066b"/><stop offset="0.961" stop-color="#100132"/><stop offset="1" stop-color="#060021"/></linearGradient><linearGradient id="m123" gradientUnits="userSpaceOnUse" x1="0" y1="375" x2="0" y2="234"><stop offset="0" stop-color="#eb0f41"/><stop offset="0.0851" stop-color="#f11135"/><stop offset="0.447" stop-color="#ee103a"/><stop offset="0.511" stop-color="#df0e52"/><stop offset="0.574" stop-color="#c00c7a"/><stop offset="0.745" stop-color="#790a8a"/><stop offset="0.894" stop-color="#48066f"/><stop offset="0.957" stop-color="#120135"/><stop offset="1" stop-color="#060021"/></linearGradient><linearGradient id="m124" gradientUnits="userSpaceOnUse" x1="0" y1="375" x2="0" y2="117"><stop offset="0" stop-color="#eb0f41"/><stop offset="0.0465" stop-color="#f11135"/><stop offset="0.244" stop-color="#ee103a"/><stop offset="0.279" stop-color="#df0e52"/><stop offset="0.314" stop-color="#c00c7a"/><stop offset="0.407" stop-color="#7d0a8c"/><stop offset="0.535" stop-color="#420669"/><stop offset="0.558" stop-color="#19023f"/><stop offset="0.581" stop-color="#070023"/><stop offset="1" stop-color="#060021"/></linearGradient><linearGradient id="m125" gradientUnits="userSpaceOnUse" x1="0" y1="375" x2="0" y2="213"><stop offset="0" stop-color="#eb0f41"/><stop offset="0.0741" stop-color="#f11135"/><stop offset="0.389" stop-color="#ee103a"/><stop offset="0.444" stop-color="#df0e52"/><stop offset="0.5" stop-color="#c00c7a"/><stop offset="0.648" stop-color="#7f0a8c"/><stop offset="0.926" stop-color="#3b0563"/><stop offset="0.963" stop-color="#15023a"/><stop offset="1" stop-color="#060021"/></linearGradient><linearGradient id="m130" gradientUnits="userSpaceOnUse" x1="0" y1="375" x2="0" y2="234"><stop offset="0" stop-color="#8d0a88"/><stop offset="0.106" stop-color="#c20c78"/><stop offset="0.234" stop-color="#ef1039"/><stop offset="0.277" stop-color="#f21233"/><stop offset="0.489" stop-color="#e80e46"/><stop offset="0.574" stop-color="#bb0c7e"/><stop offset="0.66" stop-color="#7d0a8c"/><stop offset="0.745" stop-color="#510774"/><stop offset="0.915" stop-color="#210348"/><stop offset="0.957" stop-color="#0b0129"/><stop offset="1" stop-color="#060021"/></linearGradient><linearGradient id="m131" gradientUnits="userSpaceOnUse" x1="0" y1="375" x2="0" y2="117"><stop offset="0" stop-color="#8d0a88"/><stop offset="0.0581" stop-color="#c20c78"/><stop offset="0.128" stop-color="#ef1039"/><stop offset="0.151" stop-color="#f21233"/><stop offset="0.267" stop-color="#e80e46"/><stop offset="0.314" stop-color="#bb0c7e"/><stop offset="0.36" stop-color="#7d0a8c"/><stop offset="0.395" stop-color="#590778"/><stop offset="0.523" stop-color="#26034d"/><stop offset="0.558" stop-color="#090026"/><stop offset="1" stop-color="#060021"/></linearGradient><linearGradient id="m132" gradientUnits="userSpaceOnUse" x1="0" y1="375" x2="0" y2="117"><stop offset="0" stop-color="#8d0a88"/><stop offset="0.0581" stop-color="#c20c78"/><stop offset="0.128" stop-color="#ef1039"/><stop offset="0.151" stop-color="#f21233"/><stop offset="0.267" stop-color="#e80e46"/><stop offset="0.314" stop-color="#bb0c7e"/><stop offset="0.36" stop-color="#7d0a8c"/><stop offset="0.395" stop-color="#5a0779"/><stop offset="0.558" stop-color="#210347"/><stop offset="0.593" stop-color="#070023"/><stop offset="1" stop-color="#060021"/></linearGradient><linearGradient id="m133" gradientUnits="userSpaceOnUse" x1="0" y1="375" x2="0" y2="117"><stop offset="0" stop-color="#f11135"/><stop offset="0.267" stop-color="#f11135"/><stop offset="0.302" stop-color="#e00e51"/><stop offset="0.337" stop-color="#c50c74"/><stop offset="0.419" stop-color="#8b0a89"/><stop offset="0.465" stop-color="#6d0983"/><stop offset="0.488" stop-color="#5f087c"/><stop offset="0.523" stop-color="#1c0342"/><stop offset="0.547" stop-color="#090025"/><stop offset="1" stop-color="#060021"/></linearGradient><linearGradient id="m134" gradientUnits="userSpaceOnUse" x1="0" y1="375" x2="0" y2="222"><stop offset="0" stop-color="#f11135"/><stop offset="0.451" stop-color="#f11135"/><stop offset="0.51" stop-color="#e00e51"/><stop offset="0.569" stop-color="#c50c74"/><stop offset="0.686" stop-color="#980b86"/><stop offset="0.784" stop-color="#780a89"/><stop offset="0.902" stop-color="#570777"/><stop offset="0.961" stop-color="#16023c"/><stop offset="1" stop-color="#060021"/></linearGradient><linearGradient id="m135" gradientUnits="userSpaceOnUse" x1="0" y1="375" x2="0" y2="210"><stop offset="0" stop-color="#f11135"/><stop offset="0.418" stop-color="#f11135"/><stop offset="0.473" stop-color="#e00e51"/><stop offset="0.527" stop-color="#c50c74"/><stop offset="0.618" stop-color="#9f0b84"/><stop offset="0.745" stop-color="#790a8a"/><stop offset="0.909" stop-color="#4f0773"/><stop offset="0.964" stop-color="#140238"/><stop offset="1" stop-color="#060021"/></linearGradient><linearGradient id="m140" gradientUnits="userSpaceOnUse" x1="0" y1="375" x2="0" y2="219"><stop offset="0" stop-color="#a80b82"/><stop offset="0.0385" stop-color="#be0c7d"/><stop offset="0.154" stop-color="#ed103e"/><stop offset="0.231" stop-color="#ff161c"/><stop offset="0.442" stop-color="#f41231"/><stop offset="0.5" stop-color="#dd0d55"/><stop offset="0.558" stop-color="#b70c7f"/><stop offset="0.635" stop-color="#780a8a"/><stop offset="0.808" stop-color="#3c0564"/><stop offset="0.885" stop-color="#090027"/><stop offset="1" stop-color="#060021"/></linearGradient><linearGradient id="m141" gradientUnits="userSpaceOnUse" x1="0" y1="375" x2="0" y2="117"><stop offset="0" stop-color="#a80b82"/><stop offset="0.0233" stop-color="#be0c7d"/><stop offset="0.093" stop-color="#ed103e"/><stop offset="0.14" stop-color="#ff161c"/><stop offset="0.267" stop-color="#f41231"/><stop offset="0.302" stop-color="#dd0d55"/><stop offset="0.337" stop-color="#b70c7f"/><stop offset="0.384" stop-color="#790a8a"/><stop offset="0.523" stop-color="#37055f"/><stop offset="0.535" stop-color="#2e0455"/><stop offset="0.547" stop-color="#19023f"/><stop offset="0.57" stop-color="#080024"/><stop offset="1" stop-color="#060021"/></linearGradient><linearGradient id="m142" gradientUnits="userSpaceOnUse" x1="0" y1="375" x2="0" y2="219"><stop offset="0" stop-color="#a80b82"/><stop offset="0.0385" stop-color="#be0c7d"/><stop offset="0.154" stop-color="#ed103e"/><stop offset="0.231" stop-color="#ff161c"/><stop offset="0.442" stop-color="#f41231"/><stop offset="0.5" stop-color="#dd0d55"/><stop offset="0.558" stop-color="#b70c7f"/><stop offset="0.635" stop-color="#790a8a"/><stop offset="0.904" stop-color="#36055d"/><stop offset="0.942" stop-color="#290450"/><stop offset="0.962" stop-color="#16023b"/><stop offset="1" stop-color="#060021"/></linearGradient><linearGradient id="m143" gradientUnits="userSpaceOnUse" x1="0" y1="375" x2="0" y2="117"><stop offset="0" stop-color="#f11135"/><stop offset="0.093" stop-color="#f4122f"/><stop offset="0.14" stop-color="#ff161c"/><stop offset="0.302" stop-color="#ef1039"/><stop offset="0.384" stop-color="#c00c7a"/><stop offset="0.477" stop-color="#7d0a8c"/><stop offset="0.488" stop-color="#760a88"/><stop offset="0.523" stop-color="#2d0454"/><stop offset="0.547" stop-color="#0f0131"/><stop offset="0.558" stop-color="#070023"/><stop offset="1" stop-color="#060021"/></linearGradient><linearGradient id="m144" gradientUnits="userSpaceOnUse" x1="0" y1="375" x2="0" y2="219"><stop offset="0" stop-color="#f11135"/><stop offset="0.154" stop-color="#f4122f"/><stop offset="0.231" stop-color="#ff161c"/><stop offset="0.5" stop-color="#ef1039"/><stop offset="0.635" stop-color="#c10c7a"/><stop offset="0.846" stop-color="#790a8a"/><stop offset="0.885" stop-color="#6e0984"/><stop offset="0.942" stop-color="#27034e"/><stop offset="0.981" stop-color="#0d012d"/><stop offset="1" stop-color="#060021"/></linearGradient><linearGradient id="m145" gradientUnits="userSpaceOnUse" x1="0" y1="375" x2="0" y2="204"><stop offset="0" stop-color="#f11135"/><stop offset="0.14" stop-color="#f4122f"/><stop offset="0.211" stop-color="#ff161c"/><stop offset="0.456" stop-color="#ef1039"/><stop offset="0.579" stop-color="#c10c79"/><stop offset="0.807" stop-color="#780a8a"/><stop offset="0.877" stop-color="#66087f"/><stop offset="0.93" stop-color="#210347"/><stop offset="0.965" stop-color="#0b0129"/><stop offset="1" stop-color="#060021"/></linearGradient><linearGradient id="m150" gradientUnits="userSpaceOnUse" x1="0" y1="375" x2="0" y2="117"><stop offset="0" stop-color="#c20c78"/><stop offset="0.0698" stop-color="#ef1039"/><stop offset="0.116" stop-color="#ff1d1c"/><stop offset="0.14" stop-color="#ff3a1d"/><stop offset="0.267" stop-color="#ff161c"/><stop offset="0.326" stop-color="#da0d59"/><stop offset="0.349" stop-color="#c20c78"/><stop offset="0.395" stop-color="#870a8a"/><stop offset="0.488" stop-color="#500773"/><stop offset="0.5" stop-color="#43066b"/><stop offset="0.523" stop-color="#1b0241"/><stop offset="0.547" stop-color="#080025"/><stop offset="1" stop-color="#060021"/></linearGradient><linearGradient id="m151" gradientUnits="userSpaceOnUse" x1="0" y1="375" x2="0" y2="117"><stop offset="0" stop-color="#c20c78"/><stop offset="0.0698" stop-color="#ef1039"/><stop offset="0.116" stop-color="#ff1d1c"/><stop offset="0.14" stop-color="#ff3a1d"/><stop offset="0.267" stop-color="#ff161c"/><stop offset="0.326" stop-color="#da0d59"/><stop offset="0.349" stop-color="#c20c78"/><stop offset="0.395" stop-color="#880a89"/><stop offset="0.453" stop-color="#6b0982"/><stop offset="0.523" stop-color="#490670"/><stop offset="0.535" stop-color="#3f0566"/><stop offset="0.558" stop-color="#16023c"/><stop offset="0.581" stop-color="#060022"/><stop offset="1" stop-color="#060021"/></linearGradient><linearGradient id="m152" gradientUnits="userSpaceOnUse" x1="0" y1="375" x2="0" y2="216"><stop offset="0" stop-color="#c20c78"/><stop offset="0.113" stop-color="#ef1039"/><stop offset="0.189" stop-color="#ff1d1c"/><stop offset="0.226" stop-color="#ff3a1d"/><stop offset="0.434" stop-color="#ff161c"/><stop offset="0.528" stop-color="#da0d59"/><stop offset="0.566" stop-color="#c20c78"/><stop offset="0.642" stop-color="#890a89"/><stop offset="0.736" stop-color="#6f0984"/><stop offset="0.906" stop-color="#43066b"/><stop offset="0.925" stop-color="#3a0562"/><stop offset="0.962" stop-color="#140239"/><stop offset="1" stop-color="#060021"/></linearGradient><linearGradient id="m153" gradientUnits="userSpaceOnUse" x1="0" y1="375" x2="0" y2="228"><stop offset="0" stop-color="#f11135"/><stop offset="0.0816" stop-color="#f5132e"/><stop offset="0.163" stop-color="#ff191c"/><stop offset="0.245" stop-color="#ff3a1d"/><stop offset="0.49" stop-color="#fd1520"/><stop offset="0.653" stop-color="#dd0d55"/><stop offset="0.755" stop-color="#b90c7e"/><stop offset="0.857" stop-color="#900b88"/><stop offset="0.878" stop-color="#720986"/><stop offset="0.939" stop-color="#2a0451"/><stop offset="0.959" stop-color="#16023c"/><stop offset="1" stop-color="#060021"/></linearGradient><linearGradient id="m154" gradientUnits="userSpaceOnUse" x1="0" y1="375" x2="0" y2="216"><stop offset="0" stop-color="#f11135"/><stop offset="0.0755" stop-color="#f5132e"/><stop offset="0.151" stop-color="#ff191c"/><stop offset="0.226" stop-color="#ff3a1d"/><stop offset="0.453" stop-color="#fd1520"/><stop offset="0.604" stop-color="#dd0d55"/><stop offset="0.717" stop-color="#ba0c7e"/><stop offset="0.868" stop-color="#860a8a"/><stop offset="0.925" stop-color="#380560"/><stop offset="0.962" stop-color="#140238"/><stop offset="1" stop-color="#060021"/></linearGradient><linearGradient id="m155" gradientUnits="userSpaceOnUse" x1="0" y1="375" x2="0" y2="204"><stop offset="0" stop-color="#f11135"/><stop offset="0.0702" stop-color="#f5132e"/><stop offset="0.14" stop-color="#ff191c"/><stop offset="0.211" stop-color="#ff3a1d"/><stop offset="0.421" stop-color="#fd1520"/><stop offset="0.561" stop-color="#dd0d55"/><stop offset="0.684" stop-color="#ba0c7e"/><stop offset="0.877" stop-color="#7d0a8c"/><stop offset="0.93" stop-color="#320459"/><stop offset="0.965" stop-color="#110134"/><stop offset="1" stop-color="#060021"/></linearGradient><linearGradient id="m160" gradientUnits="userSpaceOnUse" x1="0" y1="375" x2="0" y2="117"><stop offset="0" stop-color="#d70d5c"/><stop offset="0.0581" stop-color="#f6132d"/><stop offset="0.0814" stop-color="#ff161c"/><stop offset="0.128" stop-color="#ff501e"/><stop offset="0.14" stop-color="#ff6523"/><stop offset="0.267" stop-color="#ff3b1d"/><stop offset="0.291" stop-color="#ff171c"/><stop offset="0.349" stop-color="#d70d5d"/><stop offset="0.372" stop-color="#bf0c7c"/><stop offset="0.407" stop-color="#9a0b85"/><stop offset="0.465" stop-color="#740987"/><stop offset="0.5" stop-color="#590779"/><stop offset="0.535" stop-color="#18023e"/><stop offset="0.558" stop-color="#070023"/><stop offset="1" stop-color="#060021"/></linearGradient><linearGradient id="m161" gradientUnits="userSpaceOnUse" x1="0" y1="375" x2="0" y2="222"><stop offset="0" stop-color="#d70d5c"/><stop offset="0.098" stop-color="#f6132d"/><stop offset="0.137" stop-color="#ff161c"/><stop offset="0.216" stop-color="#ff501e"/><stop offset="0.235" stop-color="#ff6523"/><stop offset="0.451" stop-color="#ff3b1d"/><stop offset="0.49" stop-color="#ff171c"/><stop offset="0.588" stop-color="#d70d5d"/><stop offset="0.627" stop-color="#bf0c7c"/><stop offset="0.667" stop-color="#a30b83"/><stop offset="0.804" stop-color="#760a88"/><stop offset="0.882" stop-color="#60087c"/><stop offset="0.902" stop-color="#530775"/><stop offset="0.961" stop-color="#15023a"/><stop offset="1" stop-color="#060021"/></linearGradient><linearGradient id="m162" gradientUnits="userSpaceOnUse" x1="0" y1="375" x2="0" y2="213"><stop offset="0" stop-color="#d70d5c"/><stop offset="0.0926" stop-color="#f6132d"/><stop offset="0.13" stop-color="#ff161c"/><stop offset="0.204" stop-color="#ff501e"/><stop offset="0.222" stop-color="#ff6523"/><stop offset="0.426" stop-color="#ff3b1d"/><stop offset="0.463" stop-color="#ff171c"/><stop offset="0.556" stop-color="#d70d5d"/><stop offset="0.593" stop-color="#bf0c7c"/><stop offset="0.63" stop-color="#a40b83"/><stop offset="0.778" stop-color="#770a89"/><stop offset="0.889" stop-color="#590779"/><stop offset="0.907" stop-color="#4d0772"/><stop offset="0.963" stop-color="#130237"/><stop offset="1" stop-color="#060021"/></linearGradient><linearGradient id="m163" gradientUnits="userSpaceOnUse" x1="0" y1="375" x2="0" y2="225"><stop offset="0" stop-color="#f6132c"/><stop offset="0.08" stop-color="#ff1c1c"/><stop offset="0.24" stop-color="#ff6523"/><stop offset="0.48" stop-color="#ff331d"/><stop offset="0.54" stop-color="#fe161e"/><stop offset="0.7" stop-color="#dc0d56"/><stop offset="0.8" stop-color="#bc0c7e"/><stop offset="0.84" stop-color="#ab0b81"/><stop offset="0.86" stop-color="#8b0a89"/><stop offset="0.9" stop-color="#530775"/><stop offset="0.96" stop-color="#15023a"/><stop offset="1" stop-color="#060021"/></linearGradient><linearGradient id="m164" gradientUnits="userSpaceOnUse" x1="0" y1="375" x2="0" y2="213"><stop offset="0" stop-color="#f6132c"/><stop offset="0.0741" stop-color="#ff1c1c"/><stop offset="0.222" stop-color="#ff6523"/><stop offset="0.444" stop-color="#ff331d"/><stop offset="0.5" stop-color="#fe161e"/><stop offset="0.741" stop-color="#c60c73"/><stop offset="0.833" stop-color="#a80b82"/><stop offset="0.852" stop-color="#a10b84"/><stop offset="0.87" stop-color="#810a8b"/><stop offset="0.926" stop-color="#35055c"/><stop offset="0.963" stop-color="#120236"/><stop offset="1" stop-color="#060021"/></linearGradient><linearGradient id="m165" gradientUnits="userSpaceOnUse" x1="0" y1="375" x2="0" y2="201"><stop offset="0" stop-color="#f6132c"/><stop offset="0.069" stop-color="#ff1c1c"/><stop offset="0.207" stop-color="#ff6523"/><stop offset="0.414" stop-color="#ff331d"/><stop offset="0.466" stop-color="#fe161e"/><stop offset="0.759" stop-color="#b90c7e"/><stop offset="0.862" stop-color="#980b86"/><stop offset="0.879" stop-color="#780a89"/><stop offset="0.931" stop-color="#2f0456"/><stop offset="0.966" stop-color="#100132"/><stop offset="1" stop-color="#060021"/></linearGradient><linearGradient id="m170" gradientUnits="userSpaceOnUse" x1="0" y1="375" x2="0" y2="228"><stop offset="0" stop-color="#ea0f42"/><stop offset="0.0816" stop-color="#fd1520"/><stop offset="0.163" stop-color="#ff491e"/><stop offset="0.245" stop-color="#ff9a2e"/><stop offset="0.469" stop-color="#ff6623"/><stop offset="0.551" stop-color="#fe161e"/><stop offset="0.633" stop-color="#e00e51"/><stop offset="0.694" stop-color="#bd0c7d"/><stop offset="0.857" stop-color="#7e0a8c"/><stop offset="0.878" stop-color="#700985"/><stop offset="0.939" stop-color="#290450"/><stop offset="0.959" stop-color="#15023b"/><stop offset="1" stop-color="#060021"/></linearGradient><linearGradient id="m171" gradientUnits="userSpaceOnUse" x1="0" y1="375" x2="0" y2="216"><stop offset="0" stop-color="#ea0f42"/><stop offset="0.0755" stop-color="#fd1520"/><stop offset="0.151" stop-color="#ff491e"/><stop offset="0.226" stop-color="#ff9a2e"/><stop offset="0.434" stop-color="#ff6623"/><stop offset="0.509" stop-color="#fe161e"/><stop offset="0.585" stop-color="#e00e51"/><stop offset="0.642" stop-color="#be0c7d"/><stop offset="0.849" stop-color="#770a89"/><stop offset="0.868" stop-color="#6a0982"/><stop offset="0.925" stop-color="#24034b"/><stop offset="0.962" stop-color="#0c012b"/><stop offset="1" stop-color="#060021"/></linearGradient><linearGradient id="m172" gradientUnits="userSpaceOnUse" x1="0" y1="375" x2="0" y2="204"><stop offset="0" stop-color="#ea0f42"/><stop offset="0.0702" stop-color="#fd1520"/><stop offset="0.14" stop-color="#ff491e"/><stop offset="0.211" stop-color="#ff9a2e"/><stop offset="0.404" stop-color="#ff6623"/><stop offset="0.474" stop-color="#fe161e"/><stop offset="0.544" stop-color="#e00e51"/><stop offset="0.596" stop-color="#bf0c7c"/><stop offset="0.825" stop-color="#750988"/><stop offset="0.86" stop-color="#64087e"/><stop offset="0.912" stop-color="#200346"/><stop offset="0.947" stop-color="#0a0128"/><stop offset="1" stop-color="#060021"/></linearGradient><linearGradient id="m173" gradientUnits="userSpaceOnUse" x1="0" y1="375" x2="0" y2="222"><stop offset="0" stop-color="#ff1e1c"/><stop offset="0.137" stop-color="#ff5d21"/><stop offset="0.235" stop-color="#ff9a2e"/><stop offset="0.451" stop-color="#ff6623"/><stop offset="0.588" stop-color="#ff181c"/><stop offset="0.765" stop-color="#d70d5c"/><stop offset="0.824" stop-color="#c40c75"/><stop offset="0.863" stop-color="#860a8a"/><stop offset="0.922" stop-color="#380560"/><stop offset="0.961" stop-color="#140238"/><stop offset="1" stop-color="#060021"/></linearGradient><linearGradient id="m174" gradientUnits="userSpaceOnUse" x1="0" y1="375" x2="0" y2="210"><stop offset="0" stop-color="#ff1e1c"/><stop offset="0.127" stop-color="#ff5d21"/><stop offset="0.218" stop-color="#ff9a2e"/><stop offset="0.418" stop-color="#ff6623"/><stop offset="0.545" stop-color="#ff181c"/><stop offset="0.764" stop-color="#d10d64"/><stop offset="0.836" stop-color="#bc0c7d"/><stop offset="0.873" stop-color="#7c0a8c"/><stop offset="0.927" stop-color="#320459"/><stop offset="0.964" stop-color="#110134"/><stop offset="1" stop-color="#060021"/></linearGradient><linearGradient id="m180" gradientUnits="userSpaceOnUse" x1="0" y1="375" x2="0" y2="225"><stop offset="0" stop-color="#f6132d"/><stop offset="0.04" stop-color="#ff161c"/><stop offset="0.12" stop-color="#ff501e"/><stop offset="0.22" stop-color="#ffb438"/><stop offset="0.24" stop-color="#ffc340"/><stop offset="0.46" stop-color="#ff9b2e"/><stop offset="0.54" stop-color="#ff361d"/><stop offset="0.58" stop-color="#fc1521"/><stop offset="0.66" stop-color="#db0d56"/><stop offset="0.76" stop-color="#b80c7e"/><stop offset="0.84" stop-color="#990b86"/><stop offset="0.86" stop-color="#890a89"/><stop offset="0.9" stop-color="#510774"/><stop offset="0.96" stop-color="#140239"/><stop offset="1" stop-color="#060021"/></linearGradient><linearGradient id="m181" gradientUnits="userSpaceOnUse" x1="0" y1="375" x2="0" y2="216"><stop offset="0" stop-color="#f6132d"/><stop offset="0.0377" stop-color="#ff161c"/><stop offset="0.113" stop-color="#ff501e"/><stop offset="0.208" stop-color="#ffb438"/><stop offset="0.226" stop-color="#ffc340"/><stop offset="0.434" stop-color="#ff9b2e"/><stop offset="0.509" stop-color="#ff361d"/><stop offset="0.547" stop-color="#fc1521"/><stop offset="0.642" stop-color="#d30d61"/><stop offset="0.736" stop-color="#b80c7e"/><stop offset="0.849" stop-color="#910b87"/><stop offset="0.868" stop-color="#820a8b"/><stop offset="0.925" stop-color="#35055d"/><stop offset="0.962" stop-color="#120236"/><stop offset="1" stop-color="#060021"/></linearGradient><linearGradient id="m182" gradientUnits="userSpaceOnUse" x1="0" y1="375" x2="0" y2="207"><stop offset="0" stop-color="#f6132d"/><stop offset="0.0357" stop-color="#ff161c"/><stop offset="0.107" stop-color="#ff501e"/><stop offset="0.196" stop-color="#ffb438"/><stop offset="0.214" stop-color="#ffc340"/><stop offset="0.411" stop-color="#ff9b2e"/><stop offset="0.482" stop-color="#ff361d"/><stop offset="0.518" stop-color="#fc1521"/><stop offset="0.607" stop-color="#d40d60"/><stop offset="0.714" stop-color="#b80c7e"/><stop offset="0.857" stop-color="#890a89"/><stop offset="0.875" stop-color="#7b0a8b"/><stop offset="0.929" stop-color="#310458"/><stop offset="0.964" stop-color="#110133"/><stop offset="1" stop-color="#060021"/></linearGradient><linearGradient id="l0" gradientUnits="userSpaceOnUse" x1="0" y1="375" x2="0" y2="363"><stop offset="0" stop-color="#580778" stop-opacity="1"/><stop offset="0.167" stop-color="#43066a" stop-opacity="0.85"/><stop offset="0.667" stop-color="#130238" stop-opacity="0.098"/><stop offset="0.833" stop-color="#0d012c" stop-opacity="0"/><stop offset="1" stop-color="#060021" stop-opacity="0"/></linearGradient><linearGradient id="l10" gradientUnits="userSpaceOnUse" x1="0" y1="375" x2="0" y2="359"><stop offset="0" stop-color="#7b0a8b" stop-opacity="1"/><stop offset="0.25" stop-color="#4d0672" stop-opacity="0.98"/><stop offset="0.625" stop-color="#18023e" stop-opacity="0.22"/><stop offset="0.75" stop-color="#100132" stop-opacity="0"/><stop offset="1" stop-color="#060021" stop-opacity="0"/></linearGradient><linearGradient id="l20" gradientUnits="userSpaceOnUse" x1="0" y1="375" x2="0" y2="357"><stop offset="0" stop-color="#a30b83" stop-opacity="1"/><stop offset="0.111" stop-color="#880a8a" stop-opacity="1"/><stop offset="0.333" stop-color="#580778" stop-opacity="1"/><stop offset="0.444" stop-color="#43066a" stop-opacity="0.85"/><stop offset="0.778" stop-color="#130238" stop-opacity="0.1"/><stop offset="0.889" stop-color="#0d012c" stop-opacity="0"/><stop offset="1" stop-color="#060021" stop-opacity="0"/></linearGradient><linearGradient id="l30" gradientUnits="userSpaceOnUse" x1="0" y1="375" x2="0" y2="353"><stop offset="0" stop-color="#c80c6f" stop-opacity="1"/><stop offset="0.0909" stop-color="#b00c80" stop-opacity="1"/><stop offset="0.273" stop-color="#7b0a8b" stop-opacity="1"/><stop offset="0.455" stop-color="#4d0672" stop-opacity="0.98"/><stop offset="0.727" stop-color="#18023e" stop-opacity="0.22"/><stop offset="0.818" stop-color="#100132" stop-opacity="0"/><stop offset="1" stop-color="#060021" stop-opacity="0"/></linearGradient><linearGradient id="l31" gradientUnits="userSpaceOnUse" x1="0" y1="375" x2="0" y2="351"><stop offset="0" stop-color="#c80c6f" stop-opacity="0.41"/><stop offset="0.417" stop-color="#b60c7f" stop-opacity="0.16"/><stop offset="0.5" stop-color="#9f0b84" stop-opacity="0"/><stop offset="0.583" stop-color="#780a89" stop-opacity="0"/><stop offset="0.833" stop-color="#1f0345" stop-opacity="0"/><stop offset="1" stop-color="#060021" stop-opacity="0"/></linearGradient><linearGradient id="l40" gradientUnits="userSpaceOnUse" x1="0" y1="375" x2="0" y2="351"><stop offset="0" stop-color="#e80e46" stop-opacity="1"/><stop offset="0.167" stop-color="#be0c7d" stop-opacity="1"/><stop offset="0.333" stop-color="#880a8a" stop-opacity="1"/><stop offset="0.5" stop-color="#580778" stop-opacity="1"/><stop offset="0.583" stop-color="#43066a" stop-opacity="0.85"/><stop offset="0.833" stop-color="#130238" stop-opacity="0.098"/><stop offset="0.917" stop-color="#0d012c" stop-opacity="0"/><stop offset="1" stop-color="#060021" stop-opacity="0"/></linearGradient><linearGradient id="l41" gradientUnits="userSpaceOnUse" x1="0" y1="375" x2="0" y2="349"><stop offset="0" stop-color="#e80e46" stop-opacity="0.87"/><stop offset="0.385" stop-color="#d70d5c" stop-opacity="0.62"/><stop offset="0.462" stop-color="#c60c73" stop-opacity="0.36"/><stop offset="0.538" stop-color="#a00b84" stop-opacity="0"/><stop offset="0.615" stop-color="#780a89" stop-opacity="0"/><stop offset="0.846" stop-color="#1f0345" stop-opacity="0"/><stop offset="1" stop-color="#060021" stop-opacity="0"/></linearGradient><linearGradient id="l50" gradientUnits="userSpaceOnUse" x1="0" y1="375" x2="0" y2="347"><stop offset="0" stop-color="#f91426" stop-opacity="0.87"/><stop offset="0.143" stop-color="#de0e54" stop-opacity="0.38"/><stop offset="0.214" stop-color="#c80c6f" stop-opacity="0.13"/><stop offset="0.286" stop-color="#b00c80" stop-opacity="0"/><stop offset="0.429" stop-color="#7b0a8b" stop-opacity="0"/><stop offset="0.714" stop-color="#290450" stop-opacity="0"/><stop offset="0.857" stop-color="#100132" stop-opacity="0"/><stop offset="1" stop-color="#060021" stop-opacity="0"/></linearGradient><linearGradient id="l51" gradientUnits="userSpaceOnUse" x1="0" y1="375" x2="0" y2="347"><stop offset="0" stop-color="#f91426" stop-opacity="1"/><stop offset="0.357" stop-color="#f01137" stop-opacity="1"/><stop offset="0.429" stop-color="#e50e49" stop-opacity="0.84"/><stop offset="0.5" stop-color="#c60c73" stop-opacity="0.37"/><stop offset="0.571" stop-color="#a00b84" stop-opacity="0"/><stop offset="0.643" stop-color="#780a89" stop-opacity="0"/><stop offset="0.857" stop-color="#1f0345" stop-opacity="0"/><stop offset="1" stop-color="#060021" stop-opacity="0"/></linearGradient><linearGradient id="l60" gradientUnits="userSpaceOnUse" x1="0" y1="375" x2="0" y2="345"><stop offset="0" stop-color="#ff3a1d" stop-opacity="1"/><stop offset="0.0667" stop-color="#ff161c" stop-opacity="1"/><stop offset="0.2" stop-color="#e80e46" stop-opacity="0.5"/><stop offset="0.333" stop-color="#be0c7d" stop-opacity="0"/><stop offset="0.467" stop-color="#880a8a" stop-opacity="0"/><stop offset="0.667" stop-color="#43066a" stop-opacity="0"/><stop offset="0.867" stop-color="#130238" stop-opacity="0"/><stop offset="1" stop-color="#060021" stop-opacity="0"/></linearGradient><linearGradient id="l61" gradientUnits="userSpaceOnUse" x1="0" y1="375" x2="0" y2="311"><stop offset="0" stop-color="#ff3a1d" stop-opacity="1"/><stop offset="0.0312" stop-color="#fd151f" stop-opacity="1"/><stop offset="0.156" stop-color="#f6132d" stop-opacity="1"/><stop offset="0.188" stop-color="#ec0f3e" stop-opacity="0.99"/><stop offset="0.219" stop-color="#d00d65" stop-opacity="0.53"/><stop offset="0.25" stop-color="#ad0b81" stop-opacity="0.059"/><stop offset="0.281" stop-color="#850a8a" stop-opacity="0"/><stop offset="0.344" stop-color="#410669" stop-opacity="0"/><stop offset="0.406" stop-color="#130237" stop-opacity="0"/><stop offset="0.438" stop-color="#090026" stop-opacity="0"/><stop offset="1" stop-color="#060021" stop-opacity="0"/></linearGradient><linearGradient id="l70" gradientUnits="userSpaceOnUse" x1="0" y1="375" x2="0" y2="341"><stop offset="0" stop-color="#ff8028" stop-opacity="1"/><stop offset="0.0588" stop-color="#ff4c1e" stop-opacity="1"/><stop offset="0.118" stop-color="#ff281d" stop-opacity="1"/><stop offset="0.176" stop-color="#f91427" stop-opacity="0.87"/><stop offset="0.294" stop-color="#de0e54" stop-opacity="0.38"/><stop offset="0.353" stop-color="#c80c6f" stop-opacity="0.13"/><stop offset="0.412" stop-color="#b00c80" stop-opacity="0"/><stop offset="0.529" stop-color="#7b0a8b" stop-opacity="0"/><stop offset="0.765" stop-color="#290450" stop-opacity="0"/><stop offset="0.882" stop-color="#100132" stop-opacity="0"/><stop offset="1" stop-color="#060021" stop-opacity="0"/></linearGradient><linearGradient id="l71" gradientUnits="userSpaceOnUse" x1="0" y1="375" x2="0" y2="311"><stop offset="0" stop-color="#ff8028" stop-opacity="1"/><stop offset="0.0312" stop-color="#ff401d" stop-opacity="1"/><stop offset="0.0625" stop-color="#fd151f" stop-opacity="1"/><stop offset="0.156" stop-color="#f6132d" stop-opacity="1"/><stop offset="0.188" stop-color="#ec0f3e" stop-opacity="0.99"/><stop offset="0.219" stop-color="#d00d65" stop-opacity="0.53"/><stop offset="0.25" stop-color="#ad0b81" stop-opacity="0.059"/><stop offset="0.281" stop-color="#850a8a" stop-opacity="0"/><stop offset="0.344" stop-color="#410669" stop-opacity="0"/><stop offset="0.406" stop-color="#130237" stop-opacity="0"/><stop offset="0.438" stop-color="#090026" stop-opacity="0"/><stop offset="1" stop-color="#060021" stop-opacity="0"/></linearGradient><linearGradient id="l80" gradientUnits="userSpaceOnUse" x1="0" y1="375" x2="0" y2="339"><stop offset="0" stop-color="#ffc340" stop-opacity="1"/><stop offset="0.0556" stop-color="#ff9a2e" stop-opacity="1"/><stop offset="0.167" stop-color="#ff3a1d" stop-opacity="1"/><stop offset="0.222" stop-color="#ff161c" stop-opacity="1"/><stop offset="0.333" stop-color="#e80e46" stop-opacity="0.5"/><stop offset="0.444" stop-color="#be0c7d" stop-opacity="0"/><stop offset="0.556" stop-color="#880a8a" stop-opacity="0"/><stop offset="0.722" stop-color="#43066a" stop-opacity="0"/><stop offset="0.889" stop-color="#130238" stop-opacity="0"/><stop offset="1" stop-color="#060021" stop-opacity="0"/></linearGradient><linearGradient id="l81" gradientUnits="userSpaceOnUse" x1="0" y1="375" x2="0" y2="311"><stop offset="0" stop-color="#ffc340" stop-opacity="1"/><stop offset="0.0625" stop-color="#ff461e" stop-opacity="1"/><stop offset="0.0938" stop-color="#ff161c" stop-opacity="1"/><stop offset="0.156" stop-color="#f6132d" stop-opacity="1"/><stop offset="0.188" stop-color="#ec0f3e" stop-opacity="0.99"/><stop offset="0.219" stop-color="#d00d65" stop-opacity="0.53"/><stop offset="0.25" stop-color="#ad0b81" stop-opacity="0.059"/><stop offset="0.281" stop-color="#850a8a" stop-opacity="0"/><stop offset="0.344" stop-color="#410669" stop-opacity="0"/><stop offset="0.406" stop-color="#130237" stop-opacity="0"/><stop offset="0.438" stop-color="#090026" stop-opacity="0"/><stop offset="1" stop-color="#060021" stop-opacity="0"/></linearGradient><linearGradient id="l90" gradientUnits="userSpaceOnUse" x1="0" y1="375" x2="0" y2="335"><stop offset="0" stop-color="#ffed70" stop-opacity="1"/><stop offset="0.05" stop-color="#ffd54a" stop-opacity="1"/><stop offset="0.1" stop-color="#ffb036" stop-opacity="1"/><stop offset="0.2" stop-color="#ff4c1e" stop-opacity="1"/><stop offset="0.25" stop-color="#ff281d" stop-opacity="1"/><stop offset="0.3" stop-color="#f91426" stop-opacity="0.87"/><stop offset="0.4" stop-color="#de0e54" stop-opacity="0.38"/><stop offset="0.45" stop-color="#c80c6f" stop-opacity="0.13"/><stop offset="0.5" stop-color="#b00c80" stop-opacity="0"/><stop offset="0.6" stop-color="#7b0a8b" stop-opacity="0"/><stop offset="0.8" stop-color="#290450" stop-opacity="0"/><stop offset="0.9" stop-color="#100132" stop-opacity="0"/><stop offset="1" stop-color="#060021" stop-opacity="0"/></linearGradient><linearGradient id="l91" gradientUnits="userSpaceOnUse" x1="0" y1="375" x2="0" y2="345"><stop offset="0" stop-color="#ffed70" stop-opacity="1"/><stop offset="0.0667" stop-color="#ffc943" stop-opacity="1"/><stop offset="0.133" stop-color="#ff922c" stop-opacity="1"/><stop offset="0.2" stop-color="#ff4c1e" stop-opacity="1"/><stop offset="0.267" stop-color="#ff1c1c" stop-opacity="1"/><stop offset="0.4" stop-color="#ec0f3e" stop-opacity="0.99"/><stop offset="0.467" stop-color="#d00d65" stop-opacity="0.53"/><stop offset="0.533" stop-color="#ad0b81" stop-opacity="0.059"/><stop offset="0.6" stop-color="#850a8a" stop-opacity="0"/><stop offset="0.733" stop-color="#410669" stop-opacity="0"/><stop offset="0.867" stop-color="#140239" stop-opacity="0"/><stop offset="1" stop-color="#060021" stop-opacity="0"/></linearGradient><linearGradient id="l100" gradientUnits="userSpaceOnUse" x1="0" y1="375" x2="0" y2="333"><stop offset="0" stop-color="#fff687" stop-opacity="1"/><stop offset="0.0476" stop-color="#fff687" stop-opacity="1"/><stop offset="0.0952" stop-color="#ffe459" stop-opacity="1"/><stop offset="0.19" stop-color="#ff9a2e" stop-opacity="1"/><stop offset="0.286" stop-color="#ff3a1d" stop-opacity="1"/><stop offset="0.333" stop-color="#ff161c" stop-opacity="1"/><stop offset="0.429" stop-color="#e80e46" stop-opacity="0.5"/><stop offset="0.524" stop-color="#be0c7d" stop-opacity="0"/><stop offset="0.619" stop-color="#880a8a" stop-opacity="0"/><stop offset="0.714" stop-color="#580778" stop-opacity="0"/><stop offset="0.905" stop-color="#130238" stop-opacity="0"/><stop offset="1" stop-color="#060021" stop-opacity="0"/></linearGradient><linearGradient id="l101" gradientUnits="userSpaceOnUse" x1="0" y1="375" x2="0" y2="343"><stop offset="0" stop-color="#fff687" stop-opacity="1"/><stop offset="0.0625" stop-color="#fff078" stop-opacity="1"/><stop offset="0.125" stop-color="#ffcf47" stop-opacity="1"/><stop offset="0.188" stop-color="#ff9a2e" stop-opacity="1"/><stop offset="0.25" stop-color="#ff541f" stop-opacity="1"/><stop offset="0.312" stop-color="#ff221c" stop-opacity="1"/><stop offset="0.375" stop-color="#f41231" stop-opacity="1"/><stop offset="0.438" stop-color="#e10e4f" stop-opacity="0.77"/><stop offset="0.5" stop-color="#c50c74" stop-opacity="0.35"/><stop offset="0.562" stop-color="#a30b83" stop-opacity="0"/><stop offset="0.625" stop-color="#7f0a8c" stop-opacity="0"/><stop offset="0.812" stop-color="#2c0453" stop-opacity="0"/><stop offset="0.875" stop-color="#16023b" stop-opacity="0"/><stop offset="1" stop-color="#060021" stop-opacity="0"/></linearGradient><linearGradient id="l110" gradientUnits="userSpaceOnUse" x1="0" y1="375" x2="0" y2="329"><stop offset="0" stop-color="#fff687" stop-opacity="1"/><stop offset="0.087" stop-color="#fff687" stop-opacity="1"/><stop offset="0.13" stop-color="#ffed70" stop-opacity="1"/><stop offset="0.174" stop-color="#ffd54a" stop-opacity="1"/><stop offset="0.217" stop-color="#ffb036" stop-opacity="1"/><stop offset="0.304" stop-color="#ff4c1e" stop-opacity="1"/><stop offset="0.348" stop-color="#ff281d" stop-opacity="1"/><stop offset="0.391" stop-color="#f91426" stop-opacity="0.87"/><stop offset="0.478" stop-color="#de0e54" stop-opacity="0.38"/><stop offset="0.522" stop-color="#c80c6f" stop-opacity="0.13"/><stop offset="0.565" stop-color="#b00c80" stop-opacity="0"/><stop offset="0.652" stop-color="#7b0a8b" stop-opacity="0"/><stop offset="0.826" stop-color="#290450" stop-opacity="0"/><stop offset="0.913" stop-color="#100132" stop-opacity="0"/><stop offset="1" stop-color="#060021" stop-opacity="0"/></linearGradient><linearGradient id="l111" gradientUnits="userSpaceOnUse" x1="0" y1="375" x2="0" y2="341"><stop offset="0" stop-color="#fff687" stop-opacity="1"/><stop offset="0.118" stop-color="#fff37f" stop-opacity="1"/><stop offset="0.176" stop-color="#ffd54a" stop-opacity="1"/><stop offset="0.235" stop-color="#ffa330" stop-opacity="1"/><stop offset="0.294" stop-color="#ff5c21" stop-opacity="1"/><stop offset="0.353" stop-color="#ff281d" stop-opacity="1"/><stop offset="0.412" stop-color="#f5132d" stop-opacity="1"/><stop offset="0.471" stop-color="#e40e4b" stop-opacity="0.82"/><stop offset="0.529" stop-color="#c80c6f" stop-opacity="0.41"/><stop offset="0.588" stop-color="#a70b82" stop-opacity="0"/><stop offset="0.647" stop-color="#830a8b" stop-opacity="0"/><stop offset="0.765" stop-color="#45066d" stop-opacity="0"/><stop offset="0.882" stop-color="#18023e" stop-opacity="0"/><stop offset="1" stop-color="#060021" stop-opacity="0"/></linearGradient><linearGradient id="l120" gradientUnits="userSpaceOnUse" x1="0" y1="375" x2="0" y2="327"><stop offset="0" stop-color="#fff687" stop-opacity="1"/><stop offset="0.167" stop-color="#fff687" stop-opacity="1"/><stop offset="0.208" stop-color="#ffe459" stop-opacity="1"/><stop offset="0.292" stop-color="#ff9a2e" stop-opacity="1"/><stop offset="0.375" stop-color="#ff3a1d" stop-opacity="1"/><stop offset="0.417" stop-color="#ff161c" stop-opacity="1"/><stop offset="0.5" stop-color="#e80e46" stop-opacity="0.5"/><stop offset="0.583" stop-color="#be0c7d" stop-opacity="0"/><stop offset="0.667" stop-color="#880a8a" stop-opacity="0"/><stop offset="0.792" stop-color="#43066a" stop-opacity="0"/><stop offset="0.917" stop-color="#130237" stop-opacity="0"/><stop offset="1" stop-color="#060021" stop-opacity="0"/></linearGradient><linearGradient id="l130" gradientUnits="userSpaceOnUse" x1="0" y1="375" x2="0" y2="323"><stop offset="0" stop-color="#fff687" stop-opacity="1"/><stop offset="0.192" stop-color="#fff687" stop-opacity="1"/><stop offset="0.231" stop-color="#ffed70" stop-opacity="1"/><stop offset="0.269" stop-color="#ffd54a" stop-opacity="1"/><stop offset="0.308" stop-color="#ffb036" stop-opacity="1"/><stop offset="0.385" stop-color="#ff4c1e" stop-opacity="1"/><stop offset="0.423" stop-color="#ff281d" stop-opacity="1"/><stop offset="0.462" stop-color="#f91427" stop-opacity="0.87"/><stop offset="0.538" stop-color="#de0e54" stop-opacity="0.38"/><stop offset="0.577" stop-color="#c80c6f" stop-opacity="0.13"/><stop offset="0.615" stop-color="#b00c80" stop-opacity="0"/><stop offset="0.692" stop-color="#7b0a8b" stop-opacity="0"/><stop offset="0.846" stop-color="#290450" stop-opacity="0"/><stop offset="0.923" stop-color="#100132" stop-opacity="0"/><stop offset="1" stop-color="#060021" stop-opacity="0"/></linearGradient><linearGradient id="l140" gradientUnits="userSpaceOnUse" x1="0" y1="375" x2="0" y2="321"><stop offset="0" stop-color="#fff687" stop-opacity="1"/><stop offset="0.259" stop-color="#fff687" stop-opacity="1"/><stop offset="0.296" stop-color="#ffe459" stop-opacity="1"/><stop offset="0.37" stop-color="#ff9a2e" stop-opacity="1"/><stop offset="0.444" stop-color="#ff3a1d" stop-opacity="1"/><stop offset="0.481" stop-color="#ff161c" stop-opacity="1"/><stop offset="0.556" stop-color="#e80e46" stop-opacity="0.5"/><stop offset="0.63" stop-color="#be0c7d" stop-opacity="0"/><stop offset="0.704" stop-color="#880a89" stop-opacity="0"/><stop offset="0.778" stop-color="#580778" stop-opacity="0"/><stop offset="0.926" stop-color="#130238" stop-opacity="0"/><stop offset="1" stop-color="#060021" stop-opacity="0"/></linearGradient><linearGradient id="l150" gradientUnits="userSpaceOnUse" x1="0" y1="375" x2="0" y2="317"><stop offset="0" stop-color="#fff687" stop-opacity="1"/><stop offset="0.276" stop-color="#fff687" stop-opacity="1"/><stop offset="0.31" stop-color="#ffed70" stop-opacity="1"/><stop offset="0.345" stop-color="#ffd54a" stop-opacity="1"/><stop offset="0.379" stop-color="#ffb036" stop-opacity="1"/><stop offset="0.448" stop-color="#ff4c1e" stop-opacity="1"/><stop offset="0.483" stop-color="#ff281d" stop-opacity="1"/><stop offset="0.517" stop-color="#f91426" stop-opacity="0.87"/><stop offset="0.586" stop-color="#de0e54" stop-opacity="0.38"/><stop offset="0.621" stop-color="#c80c6f" stop-opacity="0.13"/><stop offset="0.655" stop-color="#b00c80" stop-opacity="0"/><stop offset="0.724" stop-color="#7b0a8b" stop-opacity="0"/><stop offset="0.862" stop-color="#290450" stop-opacity="0"/><stop offset="0.931" stop-color="#100132" stop-opacity="0"/><stop offset="1" stop-color="#060021" stop-opacity="0"/></linearGradient><linearGradient id="l160" gradientUnits="userSpaceOnUse" x1="0" y1="375" x2="0" y2="315"><stop offset="0" stop-color="#fff687" stop-opacity="1"/><stop offset="0.333" stop-color="#fff687" stop-opacity="1"/><stop offset="0.367" stop-color="#ffe459" stop-opacity="1"/><stop offset="0.433" stop-color="#ff9a2e" stop-opacity="1"/><stop offset="0.5" stop-color="#ff3a1d" stop-opacity="1"/><stop offset="0.533" stop-color="#ff161c" stop-opacity="1"/><stop offset="0.6" stop-color="#e80e46" stop-opacity="0.5"/><stop offset="0.667" stop-color="#be0c7d" stop-opacity="0"/><stop offset="0.733" stop-color="#880a8a" stop-opacity="0"/><stop offset="0.8" stop-color="#580778" stop-opacity="0"/><stop offset="0.933" stop-color="#130238" stop-opacity="0"/><stop offset="1" stop-color="#060021" stop-opacity="0"/></linearGradient>
<linearGradient id="s0" gradientUnits="userSpaceOnUse" x1="0" y1="375" x2="0" y2="183"><stop offset="0" stop-color="#fff687"/><stop offset="0.0156" stop-color="#ffdb4d"/><stop offset="0.0312" stop-color="#ffaa33"/><stop offset="0.0469" stop-color="#ff6523"/><stop offset="0.0625" stop-color="#ff2e1d"/><stop offset="0.0781" stop-color="#f7132a"/><stop offset="0.0938" stop-color="#e80e46"/><stop offset="0.109" stop-color="#cc0d6b"/><stop offset="0.156" stop-color="#e00e51"/><stop offset="0.188" stop-color="#ed103e"/><stop offset="0.5" stop-color="#eb0f40"/><stop offset="0.594" stop-color="#bc0c7e"/><stop offset="0.688" stop-color="#7c0a8c"/><stop offset="0.828" stop-color="#320459"/><stop offset="0.922" stop-color="#110134"/><stop offset="1" stop-color="#060021"/></linearGradient>
<linearGradient id="s1" gradientUnits="userSpaceOnUse" x1="0" y1="375" x2="0" y2="105"><stop offset="0" stop-color="#fff687"/><stop offset="0.0111" stop-color="#ffdb4d"/><stop offset="0.0222" stop-color="#ffaa33"/><stop offset="0.0333" stop-color="#ff6523"/><stop offset="0.0444" stop-color="#ff2e1d"/><stop offset="0.0556" stop-color="#f7132a"/><stop offset="0.0667" stop-color="#e80e46"/><stop offset="0.122" stop-color="#ff161c"/><stop offset="0.133" stop-color="#ff241c"/><stop offset="0.489" stop-color="#ff241c"/><stop offset="0.522" stop-color="#f91427"/><stop offset="0.6" stop-color="#d70d5c"/><stop offset="0.644" stop-color="#bb0c7e"/><stop offset="0.722" stop-color="#7d0a8c"/><stop offset="0.844" stop-color="#320459"/><stop offset="0.911" stop-color="#140238"/><stop offset="1" stop-color="#060021"/></linearGradient>
<linearGradient id="s2" gradientUnits="userSpaceOnUse" x1="0" y1="375" x2="0" y2="201"><stop offset="0" stop-color="#fff687"/><stop offset="0.0172" stop-color="#ffdb4d"/><stop offset="0.0345" stop-color="#ffaa33"/><stop offset="0.0517" stop-color="#ff6523"/><stop offset="0.069" stop-color="#ff2e1d"/><stop offset="0.0862" stop-color="#f7132a"/><stop offset="0.103" stop-color="#e80e46"/><stop offset="0.121" stop-color="#cc0d6b"/><stop offset="0.138" stop-color="#c60c72"/><stop offset="0.207" stop-color="#e80e46"/><stop offset="0.483" stop-color="#e80e46"/><stop offset="0.569" stop-color="#be0c7c"/><stop offset="0.672" stop-color="#7a0a8b"/><stop offset="0.828" stop-color="#2c0453"/><stop offset="0.897" stop-color="#130237"/><stop offset="1" stop-color="#060021"/></linearGradient>
<linearGradient id="s3" gradientUnits="userSpaceOnUse" x1="0" y1="375" x2="0" y2="243"><stop offset="0" stop-color="#fff687"/><stop offset="0.0227" stop-color="#ffdb4d"/><stop offset="0.0455" stop-color="#ffaa33"/><stop offset="0.0682" stop-color="#ff6523"/><stop offset="0.0909" stop-color="#ff2e1d"/><stop offset="0.114" stop-color="#f7132a"/><stop offset="0.159" stop-color="#d70d5c"/><stop offset="0.273" stop-color="#f6132d"/><stop offset="0.5" stop-color="#f31231"/><stop offset="0.591" stop-color="#ca0d6e"/><stop offset="0.614" stop-color="#bd0c7d"/><stop offset="0.705" stop-color="#7b0a8b"/><stop offset="0.841" stop-color="#2f0456"/><stop offset="0.932" stop-color="#0f0131"/><stop offset="1" stop-color="#060021"/></linearGradient>
<linearGradient id="s4" gradientUnits="userSpaceOnUse" x1="0" y1="375" x2="0" y2="237"><stop offset="0" stop-color="#fff687"/><stop offset="0.0217" stop-color="#ffdb4d"/><stop offset="0.0435" stop-color="#ffaa33"/><stop offset="0.0652" stop-color="#ff6523"/><stop offset="0.087" stop-color="#ff2e1d"/><stop offset="0.109" stop-color="#f7132a"/><stop offset="0.13" stop-color="#e80e46"/><stop offset="0.152" stop-color="#cc0d6b"/><stop offset="0.174" stop-color="#c60c72"/><stop offset="0.261" stop-color="#e80e46"/><stop offset="0.478" stop-color="#e80e46"/><stop offset="0.522" stop-color="#d70d5c"/><stop offset="0.587" stop-color="#b30c80"/><stop offset="0.674" stop-color="#7a0a8a"/><stop offset="0.826" stop-color="#2d0454"/><stop offset="0.913" stop-color="#110133"/><stop offset="1" stop-color="#060021"/></linearGradient>
<linearGradient id="s5" gradientUnits="userSpaceOnUse" x1="0" y1="375" x2="0" y2="207"><stop offset="0" stop-color="#fff687"/><stop offset="0.0179" stop-color="#ffdb4d"/><stop offset="0.0357" stop-color="#ffaa33"/><stop offset="0.0536" stop-color="#ff6523"/><stop offset="0.0714" stop-color="#ff2e1d"/><stop offset="0.0893" stop-color="#f7132a"/><stop offset="0.107" stop-color="#e80e46"/><stop offset="0.125" stop-color="#cc0d6b"/><stop offset="0.179" stop-color="#e00e51"/><stop offset="0.214" stop-color="#ed103e"/><stop offset="0.5" stop-color="#ea0f42"/><stop offset="0.589" stop-color="#bc0c7e"/><stop offset="0.679" stop-color="#7f0a8c"/><stop offset="0.821" stop-color="#32045a"/><stop offset="0.911" stop-color="#120235"/><stop offset="1" stop-color="#060021"/></linearGradient>
<linearGradient id="s6" gradientUnits="userSpaceOnUse" x1="0" y1="375" x2="0" y2="180"><stop offset="0" stop-color="#fff687"/><stop offset="0.0154" stop-color="#ffdb4d"/><stop offset="0.0308" stop-color="#ffaa33"/><stop offset="0.0462" stop-color="#ff6523"/><stop offset="0.0615" stop-color="#ff2e1d"/><stop offset="0.0769" stop-color="#f7132a"/><stop offset="0.0923" stop-color="#e80e46"/><stop offset="0.108" stop-color="#e00e51"/><stop offset="0.185" stop-color="#fa1424"/><stop offset="0.492" stop-color="#f91427"/><stop offset="0.569" stop-color="#d90d59"/><stop offset="0.615" stop-color="#be0c7c"/><stop offset="0.708" stop-color="#790a8a"/><stop offset="0.831" stop-color="#320459"/><stop offset="0.908" stop-color="#120236"/><stop offset="1" stop-color="#060021"/></linearGradient>
<linearGradient id="s7" gradientUnits="userSpaceOnUse" x1="0" y1="375" x2="0" y2="135"><stop offset="0" stop-color="#fff687"/><stop offset="0.0125" stop-color="#ffdb4d"/><stop offset="0.025" stop-color="#ffaa33"/><stop offset="0.0375" stop-color="#ff6523"/><stop offset="0.05" stop-color="#ff2e1d"/><stop offset="0.0625" stop-color="#f7132a"/><stop offset="0.075" stop-color="#e80e46"/><stop offset="0.0875" stop-color="#cc0d6b"/><stop offset="0.1" stop-color="#ac0b81"/><stop offset="0.113" stop-color="#9e0b84"/><stop offset="0.15" stop-color="#be0c7d"/><stop offset="0.487" stop-color="#be0c7d"/><stop offset="0.613" stop-color="#7a0a8b"/><stop offset="0.787" stop-color="#300457"/><stop offset="0.887" stop-color="#120236"/><stop offset="1" stop-color="#060021"/></linearGradient>
<linearGradient id="s8" gradientUnits="userSpaceOnUse" x1="0" y1="375" x2="0" y2="192"><stop offset="0" stop-color="#fff687"/><stop offset="0.0164" stop-color="#ffdb4d"/><stop offset="0.0328" stop-color="#ffaa33"/><stop offset="0.0492" stop-color="#ff6523"/><stop offset="0.0656" stop-color="#ff2e1d"/><stop offset="0.082" stop-color="#f7132a"/><stop offset="0.0984" stop-color="#e80e46"/><stop offset="0.115" stop-color="#e00e51"/><stop offset="0.197" stop-color="#fa1424"/><stop offset="0.492" stop-color="#fa1424"/><stop offset="0.574" stop-color="#da0d58"/><stop offset="0.623" stop-color="#bd0c7d"/><stop offset="0.721" stop-color="#750988"/><stop offset="0.852" stop-color="#2b0452"/><stop offset="0.918" stop-color="#120235"/><stop offset="1" stop-color="#060021"/></linearGradient>
<linearGradient id="s9" gradientUnits="userSpaceOnUse" x1="0" y1="375" x2="0" y2="135"><stop offset="0" stop-color="#fff687"/><stop offset="0.0125" stop-color="#ffdb4d"/><stop offset="0.025" stop-color="#ffaa33"/><stop offset="0.0375" stop-color="#ff6523"/><stop offset="0.05" stop-color="#ff2e1d"/><stop offset="0.0625" stop-color="#f7132a"/><stop offset="0.0875" stop-color="#d70d5c"/><stop offset="0.15" stop-color="#f6132d"/><stop offset="0.487" stop-color="#f6132d"/><stop offset="0.562" stop-color="#d80d5b"/><stop offset="0.613" stop-color="#bb0c7e"/><stop offset="0.7" stop-color="#7b0a8b"/><stop offset="0.838" stop-color="#2e0455"/><stop offset="0.912" stop-color="#120135"/><stop offset="1" stop-color="#060021"/></linearGradient>
<linearGradient id="s10" gradientUnits="userSpaceOnUse" x1="0" y1="375" x2="0" y2="192"><stop offset="0" stop-color="#fff687"/><stop offset="0.0164" stop-color="#ffdb4d"/><stop offset="0.0328" stop-color="#ffaa33"/><stop offset="0.0492" stop-color="#ff6523"/><stop offset="0.0656" stop-color="#ff2e1d"/><stop offset="0.082" stop-color="#f7132a"/><stop offset="0.0984" stop-color="#e80e46"/><stop offset="0.115" stop-color="#cc0d6b"/><stop offset="0.131" stop-color="#c60c72"/><stop offset="0.197" stop-color="#e80e46"/><stop offset="0.492" stop-color="#e80e46"/><stop offset="0.574" stop-color="#be0c7d"/><stop offset="0.672" stop-color="#7d0a8c"/><stop offset="0.82" stop-color="#310459"/><stop offset="0.902" stop-color="#130238"/><stop offset="1" stop-color="#060021"/></linearGradient>
<linearGradient id="s11" gradientUnits="userSpaceOnUse" x1="0" y1="375" x2="0" y2="156"><stop offset="0" stop-color="#fff687"/><stop offset="0.0137" stop-color="#ffdb4d"/><stop offset="0.0274" stop-color="#ffaa33"/><stop offset="0.0411" stop-color="#ff6523"/><stop offset="0.0548" stop-color="#ff2e1d"/><stop offset="0.0685" stop-color="#f7132a"/><stop offset="0.0822" stop-color="#e80e46"/><stop offset="0.0959" stop-color="#cc0d6b"/><stop offset="0.11" stop-color="#ac0b81"/><stop offset="0.123" stop-color="#880a8a"/><stop offset="0.164" stop-color="#a30b83"/><stop offset="0.493" stop-color="#a20b84"/><stop offset="0.589" stop-color="#740987"/><stop offset="0.781" stop-color="#2c0453"/><stop offset="0.877" stop-color="#130237"/><stop offset="1" stop-color="#060021"/></linearGradient>
<linearGradient id="s12" gradientUnits="userSpaceOnUse" x1="0" y1="375" x2="0" y2="111"><stop offset="0" stop-color="#fff687"/><stop offset="0.0114" stop-color="#ffdb4d"/><stop offset="0.0227" stop-color="#ffaa33"/><stop offset="0.0341" stop-color="#ff6523"/><stop offset="0.0455" stop-color="#ff2e1d"/><stop offset="0.0568" stop-color="#f7132a"/><stop offset="0.0682" stop-color="#e80e46"/><stop offset="0.125" stop-color="#ff161c"/><stop offset="0.136" stop-color="#ff241c"/><stop offset="0.489" stop-color="#ff241c"/><stop offset="0.523" stop-color="#f91426"/><stop offset="0.602" stop-color="#d70d5c"/><stop offset="0.648" stop-color="#ba0c7e"/><stop offset="0.727" stop-color="#7b0a8b"/><stop offset="0.852" stop-color="#2f0456"/><stop offset="0.932" stop-color="#100132"/><stop offset="1" stop-color="#060021"/></linearGradient>
<linearGradient id="s13" gradientUnits="userSpaceOnUse" x1="0" y1="375" x2="0" y2="114"><stop offset="0" stop-color="#fff687"/><stop offset="0.0115" stop-color="#ffdb4d"/><stop offset="0.023" stop-color="#ffaa33"/><stop offset="0.0345" stop-color="#ff6523"/><stop offset="0.046" stop-color="#ff2e1d"/><stop offset="0.0575" stop-color="#f7132a"/><stop offset="0.069" stop-color="#e80e46"/><stop offset="0.0805" stop-color="#cc0d6b"/><stop offset="0.115" stop-color="#e00e51"/><stop offset="0.138" stop-color="#ed103e"/><stop offset="0.494" stop-color="#eb0f41"/><stop offset="0.586" stop-color="#bc0c7e"/><stop offset="0.678" stop-color="#7d0a8c"/><stop offset="0.816" stop-color="#33045a"/><stop offset="0.908" stop-color="#120135"/><stop offset="1" stop-color="#060021"/></linearGradient>
<linearGradient id="s14" gradientUnits="userSpaceOnUse" x1="0" y1="375" x2="0" y2="231"><stop offset="0" stop-color="#fff687"/><stop offset="0.0208" stop-color="#ffdb4d"/><stop offset="0.0417" stop-color="#ffaa33"/><stop offset="0.0625" stop-color="#ff6523"/><stop offset="0.0833" stop-color="#ff2e1d"/><stop offset="0.104" stop-color="#f7132a"/><stop offset="0.125" stop-color="#e80e46"/><stop offset="0.146" stop-color="#cc0d6b"/><stop offset="0.167" stop-color="#c60c72"/><stop offset="0.25" stop-color="#e80e46"/><stop offset="0.479" stop-color="#e80e46"/><stop offset="0.562" stop-color="#c00c7a"/><stop offset="0.667" stop-color="#7c0a8b"/><stop offset="0.812" stop-color="#300458"/><stop offset="0.896" stop-color="#130236"/><stop offset="1" stop-color="#060021"/></linearGradient>
<linearGradient id="s15" gradientUnits="userSpaceOnUse" x1="0" y1="375" x2="0" y2="162"><stop offset="0" stop-color="#fff687"/><stop offset="0.0141" stop-color="#ffdb4d"/><stop offset="0.0282" stop-color="#ffaa33"/><stop offset="0.0423" stop-color="#ff6523"/><stop offset="0.0563" stop-color="#ff2e1d"/><stop offset="0.0704" stop-color="#f7132a"/><stop offset="0.0845" stop-color="#e80e46"/><stop offset="0.0986" stop-color="#cc0d6b"/><stop offset="0.141" stop-color="#e00e51"/><stop offset="0.169" stop-color="#ed103e"/><stop offset="0.493" stop-color="#ed103e"/><stop offset="0.592" stop-color="#bc0c7e"/><stop offset="0.69" stop-color="#790a8a"/><stop offset="0.845" stop-color="#2a0450"/><stop offset="0.915" stop-color="#120135"/><stop offset="1" stop-color="#060021"/></linearGradient>
<linearGradient id="s16" gradientUnits="userSpaceOnUse" x1="0" y1="375" x2="0" y2="141"><stop offset="0" stop-color="#fff687"/><stop offset="0.0128" stop-color="#ffdb4d"/><stop offset="0.0256" stop-color="#ffaa33"/><stop offset="0.0385" stop-color="#ff6523"/><stop offset="0.0513" stop-color="#ff2e1d"/><stop offset="0.0641" stop-color="#f7132a"/><stop offset="0.0897" stop-color="#d70d5c"/><stop offset="0.154" stop-color="#f6132d"/><stop offset="0.5" stop-color="#f31232"/><stop offset="0.577" stop-color="#d10d64"/><stop offset="0.628" stop-color="#b10c80"/><stop offset="0.705" stop-color="#7a0a8a"/><stop offset="0.833" stop-color="#320459"/><stop offset="0.91" stop-color="#130237"/><stop offset="1" stop-color="#060021"/></linearGradient>
<linearGradient id="s17" gradientUnits="userSpaceOnUse" x1="0" y1="375" x2="0" y2="147"><stop offset="0" stop-color="#fff687"/><stop offset="0.0132" stop-color="#ffdb4d"/><stop offset="0.0263" stop-color="#ffaa33"/><stop offset="0.0395" stop-color="#ff6523"/><stop offset="0.0526" stop-color="#ff2e1d"/><stop offset="0.0658" stop-color="#f7132a"/><stop offset="0.0789" stop-color="#e80e46"/><stop offset="0.0921" stop-color="#cc0d6b"/><stop offset="0.105" stop-color="#c60c72"/><stop offset="0.158" stop-color="#e80e46"/><stop offset="0.5" stop-color="#e50e4a"/><stop offset="0.579" stop-color="#bc0c7e"/><stop offset="0.684" stop-color="#770a89"/><stop offset="0.829" stop-color="#2f0456"/><stop offset="0.921" stop-color="#110133"/><stop offset="1" stop-color="#060021"/></linearGradient>
<linearGradient id="s18" gradientUnits="userSpaceOnUse" x1="0" y1="375" x2="0" y2="213"><stop offset="0" stop-color="#fff687"/><stop offset="0.0185" stop-color="#ffdb4d"/><stop offset="0.037" stop-color="#ffaa33"/><stop offset="0.0556" stop-color="#ff6523"/><stop offset="0.0741" stop-color="#ff2e1d"/><stop offset="0.0926" stop-color="#f7132a"/><stop offset="0.111" stop-color="#e80e46"/><stop offset="0.13" stop-color="#cc0d6b"/><stop offset="0.148" stop-color="#c60c72"/><stop offset="0.222" stop-color="#e80e46"/><stop offset="0.5" stop-color="#e50e4a"/><stop offset="0.574" stop-color="#bf0c7c"/><stop offset="0.685" stop-color="#770a89"/><stop offset="0.833" stop-color="#2d0454"/><stop offset="0.907" stop-color="#130237"/><stop offset="1" stop-color="#060021"/></linearGradient>
<linearGradient id="s19" gradientUnits="userSpaceOnUse" x1="0" y1="375" x2="0" y2="171"><stop offset="0" stop-color="#fff687"/><stop offset="0.0147" stop-color="#ffdb4d"/><stop offset="0.0294" stop-color="#ffaa33"/><stop offset="0.0441" stop-color="#ff6523"/><stop offset="0.0588" stop-color="#ff2e1d"/><stop offset="0.0735" stop-color="#f7132a"/><stop offset="0.0882" stop-color="#e80e46"/><stop offset="0.103" stop-color="#cc0d6b"/><stop offset="0.118" stop-color="#ac0b81"/><stop offset="0.132" stop-color="#9e0b84"/><stop offset="0.176" stop-color="#be0c7d"/><stop offset="0.5" stop-color="#b90c7e"/><stop offset="0.618" stop-color="#780a8a"/><stop offset="0.794" stop-color="#2e0455"/><stop offset="0.897" stop-color="#110134"/><stop offset="1" stop-color="#060021"/></linearGradient>
<linearGradient id="s20" gradientUnits="userSpaceOnUse" x1="0" y1="375" x2="0" y2="156"><stop offset="0" stop-color="#fff687"/><stop offset="0.0137" stop-color="#ffdb4d"/><stop offset="0.0274" stop-color="#ffaa33"/><stop offset="0.0411" stop-color="#ff6523"/><stop offset="0.0548" stop-color="#ff2e1d"/><stop offset="0.0685" stop-color="#f7132a"/><stop offset="0.0822" stop-color="#e80e46"/><stop offset="0.0959" stop-color="#cc0d6b"/><stop offset="0.11" stop-color="#ac0b81"/><stop offset="0.123" stop-color="#9e0b84"/><stop offset="0.164" stop-color="#be0c7d"/><stop offset="0.493" stop-color="#bd0c7d"/><stop offset="0.616" stop-color="#790a8a"/><stop offset="0.795" stop-color="#2e0455"/><stop offset="0.89" stop-color="#120236"/><stop offset="1" stop-color="#060021"/></linearGradient>
<linearGradient id="s21" gradientUnits="userSpaceOnUse" x1="0" y1="375" x2="0" y2="141"><stop offset="0" stop-color="#fff687"/><stop offset="0.0128" stop-color="#ffdb4d"/><stop offset="0.0256" stop-color="#ffaa33"/><stop offset="0.0385" stop-color="#ff6523"/><stop offset="0.0513" stop-color="#ff2e1d"/><stop offset="0.0641" stop-color="#f7132a"/><stop offset="0.0769" stop-color="#e80e46"/><stop offset="0.103" stop-color="#ed103e"/><stop offset="0.154" stop-color="#ff161c"/><stop offset="0.5" stop-color="#fc1521"/><stop offset="0.577" stop-color="#df0e52"/><stop offset="0.641" stop-color="#b70c7f"/><stop offset="0.718" stop-color="#7c0a8b"/><stop offset="0.846" stop-color="#300457"/><stop offset="0.923" stop-color="#110134"/><stop offset="1" stop-color="#060021"/></linearGradient>
<linearGradient id="s22" gradientUnits="userSpaceOnUse" x1="0" y1="375" x2="0" y2="135"><stop offset="0" stop-color="#fff687"/><stop offset="0.0125" stop-color="#ffdb4d"/><stop offset="0.025" stop-color="#ffaa33"/><stop offset="0.0375" stop-color="#ff6523"/><stop offset="0.05" stop-color="#ff2e1d"/><stop offset="0.0625" stop-color="#f7132a"/><stop offset="0.075" stop-color="#e80e46"/><stop offset="0.0875" stop-color="#cc0d6b"/><stop offset="0.1" stop-color="#c60c72"/><stop offset="0.15" stop-color="#e80e46"/><stop offset="0.487" stop-color="#e80e46"/><stop offset="0.575" stop-color="#bb0c7e"/><stop offset="0.675" stop-color="#7a0a8a"/><stop offset="0.825" stop-color="#2e0455"/><stop offset="0.912" stop-color="#110133"/><stop offset="1" stop-color="#060021"/></linearGradient>
<linearGradient id="s23" gradientUnits="userSpaceOnUse" x1="0" y1="375" x2="0" y2="114"><stop offset="0" stop-color="#fff687"/><stop offset="0.0115" stop-color="#ffdb4d"/><stop offset="0.023" stop-color="#ffaa33"/><stop offset="0.0345" stop-color="#ff6523"/><stop offset="0.046" stop-color="#ff2e1d"/><stop offset="0.0575" stop-color="#f7132a"/><stop offset="0.069" stop-color="#e80e46"/><stop offset="0.0805" stop-color="#cc0d6b"/><stop offset="0.092" stop-color="#c60c72"/><stop offset="0.138" stop-color="#e80e46"/><stop offset="0.494" stop-color="#e50e4a"/><stop offset="0.575" stop-color="#bb0c7e"/><stop offset="0.678" stop-color="#770a89"/><stop offset="0.828" stop-color="#2c0453"/><stop offset="0.908" stop-color="#110134"/><stop offset="1" stop-color="#060021"/></linearGradient>
<linearGradient id="s24" gradientUnits="userSpaceOnUse" x1="0" y1="375" x2="0" y2="156"><stop offset="0" stop-color="#fff687"/><stop offset="0.0137" stop-color="#ffdb4d"/><stop offset="0.0274" stop-color="#ffaa33"/><stop offset="0.0411" stop-color="#ff6523"/><stop offset="0.0548" stop-color="#ff2e1d"/><stop offset="0.0685" stop-color="#f7132a"/><stop offset="0.0822" stop-color="#e80e46"/><stop offset="0.11" stop-color="#ed103e"/><stop offset="0.164" stop-color="#ff161c"/><stop offset="0.493" stop-color="#fe161d"/><stop offset="0.575" stop-color="#df0e51"/><stop offset="0.63" stop-color="#bf0c7c"/><stop offset="0.726" stop-color="#760988"/><stop offset="0.849" stop-color="#2e0455"/><stop offset="0.932" stop-color="#100131"/><stop offset="1" stop-color="#060021"/></linearGradient>
<linearGradient id="s25" gradientUnits="userSpaceOnUse" x1="0" y1="375" x2="0" y2="117"><stop offset="0" stop-color="#fff687"/><stop offset="0.0116" stop-color="#ffdb4d"/><stop offset="0.0233" stop-color="#ffaa33"/><stop offset="0.0349" stop-color="#ff6523"/><stop offset="0.0465" stop-color="#ff2e1d"/><stop offset="0.0581" stop-color="#f7132a"/><stop offset="0.0698" stop-color="#e80e46"/><stop offset="0.128" stop-color="#ff161c"/><stop offset="0.14" stop-color="#ff241c"/><stop offset="0.488" stop-color="#ff241c"/><stop offset="0.523" stop-color="#fa1425"/><stop offset="0.605" stop-color="#d70d5d"/><stop offset="0.651" stop-color="#b90c7e"/><stop offset="0.733" stop-color="#7a0a8a"/><stop offset="0.86" stop-color="#2d0454"/><stop offset="0.93" stop-color="#110134"/><stop offset="1" stop-color="#060021"/></linearGradient>
<linearGradient id="s26" gradientUnits="userSpaceOnUse" x1="0" y1="375" x2="0" y2="120"><stop offset="0" stop-color="#fff687"/><stop offset="0.0118" stop-color="#ffdb4d"/><stop offset="0.0235" stop-color="#ffaa33"/><stop offset="0.0353" stop-color="#ff6523"/><stop offset="0.0471" stop-color="#ff2e1d"/><stop offset="0.0588" stop-color="#f7132a"/><stop offset="0.0706" stop-color="#e80e46"/><stop offset="0.0824" stop-color="#cc0d6b"/><stop offset="0.0941" stop-color="#ae0c81"/><stop offset="0.129" stop-color="#cb0d6c"/><stop offset="0.141" stop-color="#d30d61"/><stop offset="0.494" stop-color="#d10d64"/><stop offset="0.541" stop-color="#ba0c7e"/><stop offset="0.647" stop-color="#7a0a8a"/><stop offset="0.8" stop-color="#320459"/><stop offset="0.906" stop-color="#110134"/><stop offset="1" stop-color="#060021"/></linearGradient>
<linearGradient id="s27" gradientUnits="userSpaceOnUse" x1="0" y1="375" x2="0" y2="156"><stop offset="0" stop-color="#fff687"/><stop offset="0.0137" stop-color="#ffdb4d"/><stop offset="0.0274" stop-color="#ffaa33"/><stop offset="0.0411" stop-color="#ff6523"/><stop offset="0.0548" stop-color="#ff2e1d"/><stop offset="0.0685" stop-color="#f7132a"/><stop offset="0.0822" stop-color="#e80e46"/><stop offset="0.0959" stop-color="#cc0d6b"/><stop offset="0.11" stop-color="#ae0c81"/><stop offset="0.151" stop-color="#cb0d6c"/><stop offset="0.164" stop-color="#d30d61"/><stop offset="0.493" stop-color="#d20d63"/><stop offset="0.548" stop-color="#b60c7f"/><stop offset="0.644" stop-color="#7c0a8c"/><stop offset="0.808" stop-color="#300457"/><stop offset="0.904" stop-color="#120135"/><stop offset="1" stop-color="#060021"/></linearGradient>
<linearGradient id="s28" gradientUnits="userSpaceOnUse" x1="0" y1="375" x2="0" y2="120"><stop offset="0" stop-color="#fff687"/><stop offset="0.0118" stop-color="#ffdb4d"/><stop offset="0.0235" stop-color="#ffaa33"/><stop offset="0.0353" stop-color="#ff6523"/><stop offset="0.0471" stop-color="#ff2e1d"/><stop offset="0.0588" stop-color="#f7132a"/><stop offset="0.0706" stop-color="#e80e46"/><stop offset="0.0824" stop-color="#cc0d6b"/><stop offset="0.0941" stop-color="#c60c72"/><stop offset="0.141" stop-color="#e80e46"/><stop offset="0.494" stop-color="#e60e49"/><stop offset="0.576" stop-color="#bb0c7e"/><stop offset="0.671" stop-color="#7d0a8c"/><stop offset="0.824" stop-color="#2f0456"/><stop offset="0.906" stop-color="#120236"/><stop offset="1" stop-color="#060021"/></linearGradient>
<linearGradient id="s29" gradientUnits="userSpaceOnUse" x1="0" y1="375" x2="0" y2="105"><stop offset="0" stop-color="#fff687"/><stop offset="0.0111" stop-color="#ffdb4d"/><stop offset="0.0222" stop-color="#ffaa33"/><stop offset="0.0333" stop-color="#ff6523"/><stop offset="0.0444" stop-color="#ff2e1d"/><stop offset="0.0556" stop-color="#f7132a"/><stop offset="0.0778" stop-color="#d70d5c"/><stop offset="0.133" stop-color="#f6132d"/><stop offset="0.5" stop-color="#f31232"/><stop offset="0.578" stop-color="#d00d65"/><stop offset="0.622" stop-color="#b50c7f"/><stop offset="0.7" stop-color="#7c0a8c"/><stop offset="0.833" stop-color="#310458"/><stop offset="0.922" stop-color="#110133"/><stop offset="1" stop-color="#060021"/></linearGradient>
<linearGradient id="s30" gradientUnits="userSpaceOnUse" x1="0" y1="375" x2="0" y2="126"><stop offset="0" stop-color="#fff687"/><stop offset="0.012" stop-color="#ffdb4d"/><stop offset="0.0241" stop-color="#ffaa33"/><stop offset="0.0361" stop-color="#ff6523"/><stop offset="0.0482" stop-color="#ff2e1d"/><stop offset="0.0602" stop-color="#f7132a"/><stop offset="0.0723" stop-color="#e80e46"/><stop offset="0.0843" stop-color="#cc0d6b"/><stop offset="0.12" stop-color="#e00e51"/><stop offset="0.145" stop-color="#ed103e"/><stop offset="0.494" stop-color="#ec0f3f"/><stop offset="0.59" stop-color="#bc0c7e"/><stop offset="0.687" stop-color="#7a0a8b"/><stop offset="0.831" stop-color="#2f0456"/><stop offset="0.928" stop-color="#0f0131"/><stop offset="1" stop-color="#060021"/></linearGradient>
<linearGradient id="s31" gradientUnits="userSpaceOnUse" x1="0" y1="375" x2="0" y2="165"><stop offset="0" stop-color="#fff687"/><stop offset="0.0143" stop-color="#ffdb4d"/><stop offset="0.0286" stop-color="#ffaa33"/><stop offset="0.0429" stop-color="#ff6523"/><stop offset="0.0571" stop-color="#ff2e1d"/><stop offset="0.0714" stop-color="#f7132a"/><stop offset="0.0857" stop-color="#e80e46"/><stop offset="0.1" stop-color="#cc0d6b"/><stop offset="0.114" stop-color="#ae0c81"/><stop offset="0.157" stop-color="#cb0d6c"/><stop offset="0.171" stop-color="#d30d61"/><stop offset="0.486" stop-color="#d30d61"/><stop offset="0.543" stop-color="#b80c7e"/><stop offset="0.643" stop-color="#7b0a8b"/><stop offset="0.8" stop-color="#310458"/><stop offset="0.9" stop-color="#110134"/><stop offset="1" stop-color="#060021"/></linearGradient>
<linearGradient id="s32" gradientUnits="userSpaceOnUse" x1="0" y1="375" x2="0" y2="201"><stop offset="0" stop-color="#fff687"/><stop offset="0.0172" stop-color="#ffdb4d"/><stop offset="0.0345" stop-color="#ffaa33"/><stop offset="0.0517" stop-color="#ff6523"/><stop offset="0.069" stop-color="#ff2e1d"/><stop offset="0.0862" stop-color="#f7132a"/><stop offset="0.103" stop-color="#e80e46"/><stop offset="0.121" stop-color="#cc0d6b"/><stop offset="0.138" stop-color="#ae0c81"/><stop offset="0.19" stop-color="#cb0d6c"/><stop offset="0.207" stop-color="#d30d61"/><stop offset="0.483" stop-color="#d30d61"/><stop offset="0.552" stop-color="#b30c80"/><stop offset="0.638" stop-color="#7e0a8c"/><stop offset="0.793" stop-color="#34045b"/><stop offset="0.897" stop-color="#120235"/><stop offset="1" stop-color="#060021"/></linearGradient>
<linearGradient id="s33" gradientUnits="userSpaceOnUse" x1="0" y1="375" x2="0" y2="156"><stop offset="0" stop-color="#fff687"/><stop offset="0.0137" stop-color="#ffdb4d"/><stop offset="0.0274" stop-color="#ffaa33"/><stop offset="0.0411" stop-color="#ff6523"/><stop offset="0.0548" stop-color="#ff2e1d"/><stop offset="0.0685" stop-color="#f7132a"/><stop offset="0.0822" stop-color="#e80e46"/><stop offset="0.0959" stop-color="#cc0d6b"/><stop offset="0.11" stop-color="#ac0b81"/><stop offset="0.123" stop-color="#880a8a"/><stop offset="0.137" stop-color="#740987"/><stop offset="0.164" stop-color="#880a8a"/><stop offset="0.493" stop-color="#870a8a"/><stop offset="0.603" stop-color="#5c087a"/><stop offset="0.849" stop-color="#140239"/><stop offset="1" stop-color="#060021"/></linearGradient>
<linearGradient id="af1" gradientUnits="userSpaceOnUse" x1="0" y1="0" x2="0" y2="180"><stop offset="0" stop-color="#c00a78"/><stop offset=".42" stop-color="#b00a82"/><stop offset=".62" stop-color="#b80a7c"/><stop offset=".82" stop-color="#620a88"/><stop offset="1" stop-color="#060021"/></linearGradient>
<linearGradient id="af2" gradientUnits="userSpaceOnUse" x1="0" y1="0" x2="0" y2="180"><stop offset="0" stop-color="#ee1044"/><stop offset=".42" stop-color="#de0e5c"/><stop offset=".62" stop-color="#b80a7c"/><stop offset=".82" stop-color="#620a88"/><stop offset="1" stop-color="#060021"/></linearGradient>
<linearGradient id="af3" gradientUnits="userSpaceOnUse" x1="0" y1="0" x2="0" y2="180"><stop offset="0" stop-color="#ff1a22"/><stop offset=".42" stop-color="#f0103e"/><stop offset=".62" stop-color="#b80a7c"/><stop offset=".82" stop-color="#620a88"/><stop offset="1" stop-color="#060021"/></linearGradient>
<linearGradient id="af4" gradientUnits="userSpaceOnUse" x1="0" y1="0" x2="0" y2="180"><stop offset="0" stop-color="#ff4a28"/><stop offset=".42" stop-color="#ff1a26"/><stop offset=".62" stop-color="#b80a7c"/><stop offset=".82" stop-color="#620a88"/><stop offset="1" stop-color="#060021"/></linearGradient>
<linearGradient id="da" x1="0" y1="0" x2="0" y2="1"><stop offset="0" stop-color="#8c0a88" stop-opacity="0"/><stop offset=".35" stop-color="#8c0a88" stop-opacity=".55"/><stop offset=".65" stop-color="#8c0a88" stop-opacity=".55"/><stop offset="1" stop-color="#8c0a88" stop-opacity="0"/></linearGradient><linearGradient id="db" x1="0" y1="0" x2="0" y2="1"><stop offset="0" stop-color="#ff5a20" stop-opacity="0"/><stop offset=".35" stop-color="#ff5a20" stop-opacity=".55"/><stop offset=".65" stop-color="#ff5a20" stop-opacity=".55"/><stop offset="1" stop-color="#ff5a20" stop-opacity="0"/></linearGradient><linearGradient id="dc" x1="0" y1="0" x2="0" y2="1"><stop offset="0" stop-color="#14023a" stop-opacity="0"/><stop offset=".35" stop-color="#14023a" stop-opacity=".55"/><stop offset=".65" stop-color="#14023a" stop-opacity=".55"/><stop offset="1" stop-color="#14023a" stop-opacity="0"/></linearGradient><linearGradient id="dd" x1="0" y1="0" x2="0" y2="1"><stop offset="0" stop-color="#d20c6e" stop-opacity="0"/><stop offset=".35" stop-color="#d20c6e" stop-opacity=".55"/><stop offset=".65" stop-color="#d20c6e" stop-opacity=".55"/><stop offset="1" stop-color="#d20c6e" stop-opacity="0"/></linearGradient><pattern id="p1" patternUnits="userSpaceOnUse" x="0" y="225" width="199" height="130"><rect x="190" y="80" width="1" height="24" fill="url(#da)"/><rect x="112" y="57" width="1" height="37" fill="url(#da)"/><rect x="191" y="36" width="1" height="25" fill="url(#dc)"/><rect x="93" y="27" width="1" height="18" fill="url(#dd)"/><rect x="136" y="102" width="1" height="17" fill="url(#da)"/><rect x="69" y="79" width="1" height="28" fill="url(#db)"/><rect x="70" y="9" width="1" height="29" fill="url(#dc)"/><rect x="89" y="69" width="1" height="18" fill="url(#da)"/><rect x="58" y="17" width="2" height="28" fill="url(#dd)"/><rect x="101" y="30" width="2" height="10" fill="url(#dd)"/><rect x="56" y="63" width="1" height="17" fill="url(#db)"/><rect x="117" y="103" width="1" height="23" fill="url(#db)"/><rect x="137" y="30" width="1" height="29" fill="url(#dc)"/><rect x="113" y="29" width="1" height="24" fill="url(#dc)"/><rect x="55" y="83" width="1" height="30" fill="url(#da)"/><rect x="133" y="47" width="1" height="14" fill="url(#dd)"/><rect x="100" y="29" width="1" height="35" fill="url(#dc)"/><rect x="28" y="83" width="2" height="11" fill="url(#db)"/><rect x="71" y="32" width="1" height="17" fill="url(#dd)"/><rect x="124" y="43" width="1" height="20" fill="url(#dc)"/><rect x="1" y="1" width="1" height="25" fill="url(#dc)"/><rect x="80" y="76" width="1" height="24" fill="url(#da)"/><rect x="101" y="35" width="2" height="28" fill="url(#dd)"/><rect x="167" y="50" width="1" height="21" fill="url(#db)"/><rect x="81" y="30" width="1" height="17" fill="url(#dc)"/><rect x="181" y="50" width="1" height="18" fill="url(#da)"/><rect x="149" y="85" width="1" height="14" fill="url(#da)"/><rect x="51" y="91" width="1" height="16" fill="url(#da)"/><rect x="87" y="95" width="1" height="13" fill="url(#db)"/><rect x="74" y="30" width="1" height="10" fill="url(#dd)"/><rect x="72" y="106" width="1" height="17" fill="url(#db)"/><rect x="98" y="27" width="2" height="23" fill="url(#dc)"/><rect x="136" y="66" width="1" height="31" fill="url(#db)"/><rect x="198" y="62" width="1" height="30" fill="url(#da)"/><rect x="86" y="65" width="1" height="28" fill="url(#da)"/><rect x="88" y="84" width="1" height="22" fill="url(#da)"/><rect x="154" y="59" width="2" height="18" fill="url(#da)"/><rect x="111" y="2" width="1" height="10" fill="url(#dc)"/><rect x="45" y="7" width="1" height="35" fill="url(#dc)"/><rect x="113" y="1" width="1" height="27" fill="url(#dc)"/><rect x="77" y="30" width="1" height="16" fill="url(#dc)"/><rect x="172" y="85" width="1" height="34" fill="url(#da)"/><rect x="163" y="101" width="1" height="16" fill="url(#da)"/><rect x="11" y="79" width="1" height="12" fill="url(#da)"/><rect x="183" y="16" width="1" height="37" fill="url(#dc)"/><rect x="119" y="99" width="1" height="21" fill="url(#da)"/><rect x="10" y="84" width="2" height="20" fill="url(#da)"/><rect x="0" y="107" width="1" height="16" fill="url(#da)"/><rect x="115" y="96" width="1" height="31" fill="url(#db)"/><rect x="189" y="47" width="1" height="19" fill="url(#dd)"/><rect x="88" y="64" width="1" height="33" fill="url(#db)"/><rect x="91" y="39" width="1" height="15" fill="url(#dd)"/><rect x="127" y="1" width="2" height="29" fill="url(#dc)"/><rect x="118" y="88" width="2" height="24" fill="url(#db)"/><rect x="8" y="66" width="1" height="24" fill="url(#da)"/><rect x="72" y="94" width="1" height="18" fill="url(#db)"/><rect x="180" y="87" width="1" height="19" fill="url(#da)"/><rect x="133" y="42" width="1" height="33" fill="url(#da)"/><rect x="144" y="71" width="1" height="25" fill="url(#db)"/><rect x="161" y="16" width="1" height="21" fill="url(#dc)"/><rect x="173" y="59" width="1" height="26" fill="url(#da)"/><rect x="51" y="5" width="1" height="18" fill="url(#dc)"/><rect x="181" y="16" width="1" height="16" fill="url(#dc)"/><rect x="142" y="35" width="1" height="16" fill="url(#dd)"/><rect x="97" y="107" width="1" height="17" fill="url(#da)"/><rect x="100" y="59" width="1" height="30" fill="url(#da)"/><rect x="50" y="70" width="1" height="12" fill="url(#db)"/><rect x="19" y="94" width="1" height="11" fill="url(#db)"/><rect x="165" y="48" width="1" height="37" fill="url(#da)"/><rect x="68" y="71" width="1" height="14" fill="url(#da)"/><rect x="169" y="9" width="1" height="21" fill="url(#dc)"/><rect x="25" y="16" width="1" height="27" fill="url(#dd)"/><rect x="117" y="99" width="1" height="10" fill="url(#da)"/><rect x="167" y="26" width="1" height="28" fill="url(#dc)"/><rect x="183" y="60" width="1" height="30" fill="url(#db)"/><rect x="97" y="53" width="1" height="35" fill="url(#db)"/><rect x="31" y="93" width="1" height="28" fill="url(#da)"/><rect x="22" y="96" width="1" height="31" fill="url(#da)"/><rect x="11" y="5" width="2" height="23" fill="url(#dc)"/><rect x="195" y="85" width="1" height="11" fill="url(#da)"/><rect x="54" y="25" width="2" height="32" fill="url(#dc)"/><rect x="186" y="100" width="1" height="22" fill="url(#db)"/><rect x="58" y="59" width="1" height="33" fill="url(#da)"/><rect x="79" y="65" width="2" height="30" fill="url(#da)"/><rect x="83" y="47" width="1" height="37" fill="url(#da)"/><rect x="136" y="17" width="1" height="10" fill="url(#dc)"/><rect x="33" y="72" width="1" height="31" fill="url(#da)"/><rect x="122" y="33" width="2" height="31" fill="url(#dd)"/><rect x="82" y="57" width="1" height="24" fill="url(#da)"/><rect x="2" y="30" width="1" height="37" fill="url(#dc)"/><rect x="91" y="83" width="1" height="28" fill="url(#da)"/><rect x="87" y="32" width="2" height="25" fill="url(#dc)"/><rect x="80" y="47" width="1" height="12" fill="url(#dc)"/><rect x="7" y="8" width="1" height="20" fill="url(#dc)"/><rect x="138" y="108" width="1" height="15" fill="url(#db)"/><rect x="194" y="63" width="1" height="18" fill="url(#da)"/><rect x="80" y="81" width="1" height="15" fill="url(#da)"/><rect x="85" y="102" width="1" height="21" fill="url(#da)"/><rect x="43" y="46" width="1" height="22" fill="url(#dc)"/><rect x="41" y="58" width="1" height="10" fill="url(#da)"/><rect x="157" y="86" width="1" height="26" fill="url(#da)"/><rect x="62" y="112" width="1" height="16" fill="url(#db)"/><rect x="183" y="68" width="1" height="32" fill="url(#db)"/><rect x="62" y="103" width="1" height="24" fill="url(#db)"/><rect x="22" y="6" width="1" height="24" fill="url(#dc)"/><rect x="124" y="68" width="1" height="29" fill="url(#da)"/><rect x="67" y="41" width="1" height="21" fill="url(#dd)"/><rect x="23" y="52" width="1" height="13" fill="url(#da)"/><rect x="111" y="13" width="1" height="31" fill="url(#dc)"/><rect x="54" y="75" width="1" height="30" fill="url(#db)"/><rect x="79" y="50" width="1" height="23" fill="url(#db)"/><rect x="95" y="105" width="1" height="22" fill="url(#db)"/><rect x="84" y="116" width="1" height="10" fill="url(#da)"/><rect x="37" y="39" width="1" height="11" fill="url(#dd)"/><rect x="26" y="69" width="1" height="32" fill="url(#da)"/><rect x="20" y="66" width="1" height="17" fill="url(#da)"/><rect x="139" y="15" width="2" height="34" fill="url(#dd)"/><rect x="19" y="111" width="1" height="14" fill="url(#da)"/><rect x="78" y="16" width="1" height="32" fill="url(#dc)"/><rect x="132" y="36" width="1" height="17" fill="url(#dc)"/><rect x="133" y="99" width="1" height="18" fill="url(#db)"/><rect x="146" y="91" width="1" height="35" fill="url(#db)"/><rect x="178" y="82" width="1" height="20" fill="url(#db)"/><rect x="2" y="74" width="1" height="18" fill="url(#da)"/><rect x="3" y="20" width="1" height="28" fill="url(#dd)"/><rect x="157" y="85" width="1" height="32" fill="url(#db)"/><rect x="50" y="48" width="1" height="22" fill="url(#da)"/><rect x="92" y="84" width="1" height="15" fill="url(#db)"/><rect x="87" y="42" width="1" height="24" fill="url(#dc)"/><rect x="157" y="36" width="2" height="34" fill="url(#dd)"/><rect x="17" y="111" width="1" height="18" fill="url(#da)"/><rect x="53" y="106" width="2" height="23" fill="url(#db)"/><rect x="120" y="90" width="1" height="31" fill="url(#db)"/><rect x="48" y="102" width="1" height="17" fill="url(#db)"/><rect x="166" y="33" width="2" height="15" fill="url(#dc)"/><rect x="131" y="0" width="1" height="33" fill="url(#dc)"/><rect x="120" y="110" width="2" height="19" fill="url(#da)"/><rect x="193" y="109" width="1" height="18" fill="url(#da)"/><rect x="184" y="21" width="1" height="28" fill="url(#dc)"/><rect x="114" y="101" width="1" height="14" fill="url(#db)"/><rect x="11" y="71" width="1" height="10" fill="url(#da)"/><rect x="147" y="67" width="1" height="22" fill="url(#db)"/><rect x="172" y="18" width="1" height="18" fill="url(#dd)"/><rect x="198" y="34" width="2" height="11" fill="url(#dd)"/><rect x="3" y="61" width="1" height="14" fill="url(#da)"/><rect x="150" y="87" width="1" height="12" fill="url(#db)"/><rect x="130" y="15" width="1" height="26" fill="url(#dc)"/><rect x="25" y="10" width="1" height="25" fill="url(#dc)"/><rect x="91" y="77" width="1" height="30" fill="url(#db)"/><rect x="88" y="89" width="1" height="13" fill="url(#da)"/></pattern><pattern id="p2" patternUnits="userSpaceOnUse" x="0" y="225" width="157" height="130"><rect x="37" y="53" width="1" height="30" fill="url(#db)"/><rect x="32" y="90" width="1" height="34" fill="url(#db)"/><rect x="108" y="1" width="1" height="15" fill="url(#dc)"/><rect x="132" y="85" width="1" height="18" fill="url(#db)"/><rect x="16" y="49" width="1" height="31" fill="url(#da)"/><rect x="136" y="57" width="1" height="26" fill="url(#db)"/><rect x="93" y="92" width="1" height="17" fill="url(#da)"/><rect x="8" y="17" width="1" height="36" fill="url(#dc)"/><rect x="110" y="42" width="1" height="18" fill="url(#dd)"/><rect x="145" y="35" width="1" height="20" fill="url(#dc)"/><rect x="54" y="39" width="1" height="34" fill="url(#dc)"/><rect x="64" y="25" width="1" height="29" fill="url(#dd)"/><rect x="135" y="94" width="1" height="28" fill="url(#db)"/><rect x="61" y="26" width="1" height="12" fill="url(#dc)"/><rect x="119" y="62" width="1" height="35" fill="url(#da)"/><rect x="139" y="70" width="1" height="27" fill="url(#db)"/><rect x="80" y="27" width="1" height="34" fill="url(#dc)"/><rect x="2" y="84" width="1" height="34" fill="url(#da)"/><rect x="138" y="86" width="1" height="20" fill="url(#da)"/><rect x="89" y="85" width="1" height="28" fill="url(#db)"/><rect x="65" y="65" width="1" height="23" fill="url(#da)"/><rect x="56" y="77" width="1" height="27" fill="url(#da)"/><rect x="2" y="99" width="1" height="12" fill="url(#da)"/><rect x="128" y="89" width="1" height="30" fill="url(#db)"/><rect x="105" y="26" width="1" height="26" fill="url(#dc)"/><rect x="121" y="28" width="1" height="25" fill="url(#dc)"/><rect x="147" y="88" width="1" height="27" fill="url(#db)"/><rect x="102" y="44" width="2" height="16" fill="url(#dd)"/><rect x="133" y="36" width="1" height="11" fill="url(#dc)"/><rect x="58" y="40" width="1" height="35" fill="url(#dc)"/><rect x="73" y="33" width="1" height="28" fill="url(#dc)"/><rect x="55" y="24" width="1" height="20" fill="url(#dd)"/><rect x="125" y="97" width="1" height="21" fill="url(#db)"/><rect x="19" y="49" width="1" height="10" fill="url(#dc)"/><rect x="61" y="92" width="1" height="21" fill="url(#db)"/><rect x="139" y="39" width="1" height="11" fill="url(#dc)"/><rect x="120" y="48" width="1" height="37" fill="url(#db)"/><rect x="5" y="64" width="1" height="37" fill="url(#da)"/><rect x="96" y="32" width="1" height="25" fill="url(#dc)"/><rect x="77" y="27" width="1" height="18" fill="url(#dc)"/><rect x="38" y="33" width="1" height="21" fill="url(#dd)"/><rect x="128" y="73" width="1" height="15" fill="url(#da)"/><rect x="61" y="87" width="1" height="26" fill="url(#da)"/><rect x="128" y="63" width="1" height="33" fill="url(#db)"/><rect x="146" y="97" width="1" height="22" fill="url(#da)"/><rect x="55" y="61" width="1" height="22" fill="url(#da)"/><rect x="6" y="92" width="1" height="31" fill="url(#db)"/><rect x="71" y="79" width="1" height="29" fill="url(#da)"/><rect x="9" y="35" width="1" height="21" fill="url(#dc)"/><rect x="140" y="99" width="1" height="13" fill="url(#db)"/><rect x="136" y="1" width="1" height="14" fill="url(#dc)"/><rect x="43" y="68" width="1" height="13" fill="url(#da)"/><rect x="10" y="43" width="2" height="29" fill="url(#dc)"/><rect x="130" y="22" width="1" height="18" fill="url(#dd)"/><rect x="59" y="103" width="1" height="20" fill="url(#da)"/><rect x="150" y="109" width="1" height="18" fill="url(#da)"/><rect x="129" y="36" width="2" height="20" fill="url(#dc)"/><rect x="142" y="90" width="1" height="17" fill="url(#da)"/><rect x="141" y="35" width="1" height="24" fill="url(#dc)"/><rect x="147" y="113" width="1" height="11" fill="url(#db)"/><rect x="0" y="11" width="1" height="20" fill="url(#dc)"/><rect x="100" y="64" width="1" height="37" fill="url(#db)"/><rect x="47" y="37" width="1" height="33" fill="url(#dd)"/><rect x="147" y="31" width="1" height="17" fill="url(#dc)"/><rect x="86" y="69" width="1" height="11" fill="url(#da)"/><rect x="20" y="43" width="1" height="30" fill="url(#db)"/><rect x="126" y="38" width="2" height="22" fill="url(#dd)"/><rect x="141" y="65" width="1" height="35" fill="url(#da)"/><rect x="110" y="101" width="2" height="13" fill="url(#da)"/><rect x="137" y="0" width="1" height="17" fill="url(#dc)"/><rect x="129" y="83" width="1" height="16" fill="url(#da)"/><rect x="129" y="10" width="1" height="27" fill="url(#dc)"/><rect x="70" y="28" width="1" height="22" fill="url(#dc)"/><rect x="117" y="66" width="1" height="37" fill="url(#da)"/><rect x="20" y="45" width="1" height="27" fill="url(#db)"/><rect x="58" y="115" width="2" height="13" fill="url(#db)"/><rect x="95" y="19" width="1" height="36" fill="url(#dc)"/><rect x="42" y="69" width="1" height="14" fill="url(#da)"/><rect x="20" y="76" width="1" height="35" fill="url(#db)"/><rect x="23" y="10" width="2" height="23" fill="url(#dc)"/><rect x="6" y="47" width="2" height="32" fill="url(#db)"/><rect x="3" y="8" width="1" height="37" fill="url(#dc)"/><rect x="126" y="5" width="1" height="36" fill="url(#dc)"/><rect x="21" y="18" width="1" height="12" fill="url(#dc)"/><rect x="75" y="72" width="1" height="26" fill="url(#db)"/><rect x="6" y="78" width="1" height="36" fill="url(#da)"/><rect x="4" y="87" width="1" height="37" fill="url(#db)"/><rect x="13" y="36" width="1" height="13" fill="url(#dc)"/><rect x="9" y="80" width="2" height="19" fill="url(#da)"/><rect x="116" y="8" width="1" height="36" fill="url(#dc)"/><rect x="73" y="20" width="1" height="35" fill="url(#dc)"/><rect x="79" y="42" width="1" height="13" fill="url(#dd)"/><rect x="94" y="54" width="1" height="19" fill="url(#db)"/><rect x="132" y="87" width="1" height="28" fill="url(#db)"/><rect x="116" y="95" width="1" height="21" fill="url(#da)"/><rect x="8" y="24" width="2" height="31" fill="url(#dd)"/><rect x="59" y="69" width="2" height="34" fill="url(#da)"/><rect x="32" y="109" width="1" height="14" fill="url(#da)"/><rect x="107" y="100" width="1" height="24" fill="url(#da)"/><rect x="120" y="95" width="1" height="31" fill="url(#db)"/><rect x="4" y="25" width="2" height="30" fill="url(#dc)"/><rect x="39" y="6" width="1" height="22" fill="url(#dc)"/><rect x="10" y="2" width="1" height="13" fill="url(#dc)"/><rect x="53" y="61" width="1" height="17" fill="url(#db)"/><rect x="60" y="47" width="1" height="14" fill="url(#dc)"/><rect x="21" y="46" width="1" height="16" fill="url(#dc)"/><rect x="106" y="60" width="1" height="15" fill="url(#db)"/><rect x="85" y="80" width="1" height="22" fill="url(#db)"/><rect x="46" y="41" width="1" height="33" fill="url(#dd)"/><rect x="87" y="42" width="1" height="26" fill="url(#dd)"/><rect x="124" y="32" width="1" height="29" fill="url(#dc)"/><rect x="134" y="61" width="1" height="28" fill="url(#db)"/><rect x="117" y="78" width="1" height="13" fill="url(#db)"/><rect x="66" y="47" width="2" height="37" fill="url(#db)"/><rect x="12" y="58" width="1" height="28" fill="url(#da)"/><rect x="30" y="65" width="1" height="36" fill="url(#db)"/><rect x="129" y="28" width="1" height="35" fill="url(#dc)"/><rect x="147" y="51" width="2" height="24" fill="url(#da)"/><rect x="15" y="65" width="1" height="14" fill="url(#da)"/><rect x="34" y="20" width="1" height="14" fill="url(#dc)"/></pattern>
</defs>
<rect x="253" y="156" width="1568" height="1" fill="#5a5a5a"/>
<rect x="253" y="156" width="1" height="792" fill="#5a5a5a"/>
<rect x="254" y="157" width="1566" height="12" fill="#0e8ccd"/>
<rect x="254" y="157" width="1566" height="1" fill="#0a3a55"/><rect x="254" y="168" width="1566" height="1" fill="#1a2a33"/>
<rect x="254" y="157" width="1.5" height="12" fill="#e8f4fb"/>
<rect x="254" y="169" width="1566" height="1" fill="#e4e4e4"/>
<rect x="254" y="170" width="1566" height="9" fill="#4f4f4f"/>
<rect x="254" y="179" width="1566" height="1" fill="#e0e0e0"/>
<path d="M254 170h10l-10 9z" fill="#fff" shape-rendering="auto"/>
<rect x="254" y="555" width="1566" height="1" fill="#d8d8d8"/><rect x="254" y="556" width="1566" height="2" fill="#808080"/><rect x="254" y="558" width="1566" height="1" fill="#d8d8d8"/><rect x="254" y="559" width="1566" height="1" fill="#111"/>
<rect x="254" y="935" width="1566" height="1" fill="#c8c8c8"/>
<rect x="254" y="936" width="1566" height="11" fill="#4f4f4f"/>
<path d="M254 936l11 11h-11z" fill="#fff" shape-rendering="auto"/>
<rect x="1820" y="157" width="1" height="791" fill="#2a2a2a"/><rect x="1821" y="157" width="1" height="791" fill="#e6e6e6"/>
<g transform="translate(254 180)">
<rect width="1566" height="375" fill="#060021"/>
<path stroke="url(#m13)" d="M802.5 294v81m7-81v81"/>
<path stroke="url(#m14)" d="M806.5 294v81"/>
<path stroke="url(#m15)" d="M815.5 294v81m12-81v81m44-81v81"/>
<path stroke="url(#m23)" d="M808.5 288v87m59-87v87"/>
<path stroke="url(#m24)" d="M799.5 288v87m32-87v87m25-87v87m8-87v87m5-87v87m143-87v87m51-87v87"/>
<path stroke="url(#m25)" d="M840.5 288v87m28-87v87m37-87v87m36-87v87"/>
<path stroke="url(#m33)" d="M812.5 117v258m2-258v258m14-258v258m20-258v258m1-258v258m2-258v258m12-258v258m15-258v258"/>
<path stroke="url(#m34)" d="M807.5 117v258m3-258v258m1-258v258m64-258v258m39-258v258m13-258v258m56-258v258m35-258v258"/>
<path stroke="url(#m35)" d="M817.5 117v258m18-258v258m1-258v258m2-258v258m6-258v258m30-258v258m8-258v258m65-258v258m10-258v258m40-258v258m34-258v258m11-258v258m57-258v258m37-258v258"/>
<path stroke="url(#m40)" d="M1537.5 288v87"/>
<path stroke="url(#m43)" d="M819.5 270v105m2-105v105m9-105v105m9-105v105m49-105v105m24-105v105m1-105v105m38-105v105m63-105v105m83-105v105"/>
<path stroke="url(#m44)" d="M801.5 270v105m15-105v105m8-105v105m1-105v105m32-105v105m8-105v105m24-105v105m8-105v105m82-105v105m2-105v105m3-105v105m22-105v105m2-105v105m2-105v105m9-105v105m19-105v105m66-105v105"/>
<path stroke="url(#m45)" d="M805.5 267v108m17-108v108m1-108v108m19-108v108m31-108v108m27-108v108m21-108v108m5-108v108m19-108v108m1-108v108m10-108v108m3-108v108m1-108v108m1-108v108m27-108v108m113-108v108m4-108v108"/>
<path stroke="url(#m53)" d="M813.5 261v114m5-114v114m14-114v114m14-114v114m4-114v114m2-114v114m7-114v114m2-114v114m1-114v114m14-114v114m5-114v114m27-114v114m7-114v114m53-114v114m3-114v114m55-114v114m13-114v114m67-114v114m42-114v114m7-114v114"/>
<path stroke="url(#m54)" d="M845.5 258v117m9-117v117m31-117v117m5-117v117m3-117v117m17-117v117m13-117v117m19-117v117m20-117v117m25-117v117m22-117v117m4-117v117m4-117v117m13-117v117m6-117v117m1-117v117m6-117v117m1-117v117m4-117v117m11-117v117m1-117v117m14-117v117m26-117v117m7-117v117m85-117v117"/>
<path stroke="url(#m55)" d="M826.5 255v120m3-120v120m5-120v120m13-120v120m54-120v120m1-120v120m56-120v120m7-120v120m80-120v120m57-120v120m138-120v120"/>
<path stroke="url(#m61)" d="M1535.5 279v96"/>
<path stroke="url(#m62)" d="M253.5 279v96m270-96v96m1013-96v96"/>
<path stroke="url(#m63)" d="M803.5 252v123m1-123v123m39-123v123m23-123v123m119-123v123m1-123v123m17-123v123m55-123v123m17-123v123m67-123v123m38-123v123"/>
<path stroke="url(#m64)" d="M820.5 246v129m33-129v129m24-129v129m26-129v129m8-129v129m8-129v129m1-129v129m23-129v129m6-129v129m1-129v129m5-129v129m17-129v129m2-129v129m6-129v129m9-129v129m1-129v129m1-129v129m31-129v129m2-129v129m16-129v129m29-129v129m54-129v129m15-129v129m2-129v129m63-129v129m5-129v129m4-129v129m21-129v129m31-129v129"/>
<path stroke="url(#m65)" d="M907.5 243v132m9-132v132m18-132v132m29-132v132m4-132v132m9-132v132m1-132v132m22-132v132m3-132v132m26-132v132m58-132v132m5-132v132m7-132v132m12-132v132m3-132v132m4-132v132m1-132v132m14-132v132m31-132v132m3-132v132m32-132v132m3-132v132"/>
<path stroke="url(#m70)" d="M1416.5 270v105m116-105v105"/>
<path stroke="url(#m71)" d="M464.5 270v105m1058-105v105"/>
<path stroke="url(#m73)" d="M970.5 240v135m25-135v135m87-135v135m8-135v135m34-135v135m5-135v135m59-135v135m3-135v135m19-135v135m9-135v135m3-135v135m13-135v135m8-135v135m24-135v135"/>
<path stroke="url(#m74)" d="M794.5 231v144m6-144v144m55-144v144m37-144v144m40-144v144m4-144v144m28-144v144m56-144v144m56-144v144m9-144v144m27-144v144m8-144v144m1-144v144m9-144v144m17-144v144m4-144v144m38-144v144m20-144v144m5-144v144m16-144v144m1-144v144m11-144v144m5-144v144"/>
<path stroke="url(#m75)" d="M887.5 225v150m38-150v150m29-150v150m51-150v150m2-150v150m18-150v150m30-150v150m1-150v150m22-150v150m10-150v150m7-150v150m42-150v150m30-150v150m33-150v150m4-150v150m40-150v150m2-150v150m3-150v150"/>
<path stroke="url(#m80)" d="M365.5 258v117"/>
<path stroke="url(#m81)" d="M728.5 255v120"/>
<path stroke="url(#m82)" d="M654.5 252v123"/>
<path stroke="url(#m83)" d="M796.5 117v258m99-258v258m29-258v258m9-258v258m67-258v258m87-258v258m2-258v258m90-258v258m6-258v258m32-258v258"/>
<path stroke="url(#m84)" d="M798.5 234v141m86-141v141m82-141v141m63-141v141m25-141v141m13-141v141m10-141v141m2-141v141m70-141v141m1-141v141m4-141v141m4-141v141m4-141v141m11-141v141m3-141v141m2-141v141m27-141v141m47-141v141m7-141v141m2-141v141"/>
<path stroke="url(#m85)" d="M880.5 216v159m29-159v159m29-159v159m2-159v159m169-159v159m18-159v159m18-159v159m14-159v159m11-159v159m36-159v159m9-159v159m24-159v159m16-159v159"/>
<path stroke="url(#m90)" d="M361.5 249v126m949-126v126"/>
<path stroke="url(#m91)" d="M25.5 243v132m69-132v132m126-132v132m435-132v132m18-132v132m799-132v132m53-132v132m6-132v132m3-132v132"/>
<path stroke="url(#m92)" d="M748.5 240v135m590-135v135"/>
<path stroke="url(#m93)" d="M795.5 243v132m63-132v132m77-132v132m80-132v132m37-132v132m29-132v132m79-132v132m11-132v132m26-132v132m24-132v132m30-132v132m14-132v132"/>
<path stroke="url(#m94)" d="M793.5 231v144m48-144v144m90-144v144m44-144v144m74-144v144m15-144v144m29-144v144m88-144v144m18-144v144m12-144v144m7-144v144m9-144v144"/>
<path stroke="url(#m95)" d="M937.5 219v156m15-156v156m114-156v156m6-156v156m31-156v156m31-156v156m19-156v156m43-156v156m58-156v156"/>
<path stroke="url(#m100)" d="M100.5 240v135m26-135v135m101-135v135m247-135v135m87-135v135m48-135v135m2-135v135m51-135v135m709-135v135m153-135v135"/>
<path stroke="url(#m101)" d="M27.5 231v144m58-144v144m8-144v144m6-144v144m17-144v144m80-144v144m27-144v144m37-144v144m99-144v144m140-144v144m78-144v144m10-144v144m33-144v144m675-144v144m62-144v144m31-144v144m101-144v144m22-144v144m18-144v144"/>
<path stroke="url(#m102)" d="M159.5 225v150m84-150v150m98-150v150m13-150v150m196-150v150m158-150v150m609-150v150m203-150v150"/>
<path stroke="url(#m103)" d="M870.5 240v135m9-135v135m39-135v135m4-135v135m51-135v135m28-135v135m173-135v135m33-135v135m19-135v135m10-135v135m2-135v135m19-135v135"/>
<path stroke="url(#m104)" d="M797.5 222v153m36-153v153m66-153v153m18-153v153m11-153v153m11-153v153m77-153v153m30-153v153m24-153v153m44-153v153m63-153v153m17-153v153m1-153v153m28-153v153m2-153v153m9-153v153"/>
<path stroke="url(#m105)" d="M886.5 117v258m62-258v258m30-258v258m45-258v258m4-258v258m14-258v258m51-258v258m33-258v258m91-258v258m16-258v258m31-258v258"/>
<path stroke="url(#m110)" d="M95.5 243v132m40-132v132m1-132v132m39-132v132m11-132v132m8-132v132m5-132v132m3-132v132m16-132v132m139-132v132m46-132v132m189-132v132m10-132v132m4-132v132m40-132v132m113-132v132m544-132v132m9-132v132m47-132v132m33-132v132m78-132v132m44-132v132m1-132v132"/>
<path stroke="url(#m111)" d="M14.5 231v144m9-144v144m28-144v144m11-144v144m26-144v144m39-144v144m19-144v144m3-144v144m42-144v144m14-144v144m40-144v144m68-144v144m51-144v144m5-144v144m23-144v144m2-144v144m40-144v144m6-144v144m13-144v144m4-144v144m1-144v144m9-144v144m19-144v144m29-144v144m4-144v144m88-144v144m1-144v144m53-144v144m15-144v144m25-144v144m8-144v144m63-144v144m7-144v144m509-144v144m93-144v144m5-144v144m44-144v144m41-144v144m52-144v144m3-144v144"/>
<path stroke="url(#m112)" d="M17.5 222v153m15-153v153m5-153v153m28-153v153m36-153v153m219-153v153m42-153v153m16-153v153m9-153v153m17-153v153m4-153v153m16-153v153m8-153v153m23-153v153m26-153v153m4-153v153m26-153v153m37-153v153m12-153v153m10-153v153m105-153v153m41-153v153m19-153v153m5-153v153m14-153v153m15-153v153m540-153v153m221-153v153m3-153v153"/>
<path stroke="url(#m113)" d="M837.5 237v138m54-138v138m53-138v138m49-138v138m11-138v138m31-138v138m91-138v138m17-138v138m1-138v138m39-138v138m58-138v138m19-138v138"/>
<path stroke="url(#m114)" d="M896.5 225v150m73-150v150m13-150v150m12-150v150m57-150v150m20-150v150m12-150v150m73-150v150m13-150v150m17-150v150m1-150v150m6-150v150"/>
<path stroke="url(#m115)" d="M898.5 216v159m55-159v159m39-159v159m69-159v159m23-159v159m10-159v159m47-159v159m72-159v159"/>
<path stroke="url(#m120)" d="M102.5 240v135m2-135v135m2-135v135m12-135v135m10-135v135m2-135v135m14-135v135m7-135v135m7-135v135m29-135v135m14-135v135m6-135v135m22-135v135m6-135v135m9-135v135m18-135v135m35-135v135m1-135v135m31-135v135m37-135v135m47-135v135m2-135v135m1-135v135m19-135v135m1-135v135m37-135v135m40-135v135m43-135v135m23-135v135m4-135v135m3-135v135m14-135v135m1-135v135m47-135v135m59-135v135m26-135v135m52-135v135m496-135v135m13-135v135m12-135v135m9-135v135m11-135v135m19-135v135m19-135v135m14-135v135m13-135v135m13-135v135m91-135v135"/>
<path stroke="url(#m121)" d="M16.5 231v144m4-144v144m30-144v144m10-144v144m43-144v144m7-144v144m2-144v144m12-144v144m13-144v144m1-144v144m3-144v144m4-144v144m19-144v144m6-144v144m2-144v144m2-144v144m3-144v144m6-144v144m7-144v144m3-144v144m31-144v144m2-144v144m13-144v144m3-144v144m61-144v144m28-144v144m1-144v144m4-144v144m1-144v144m26-144v144m21-144v144m2-144v144m3-144v144m2-144v144m21-144v144m14-144v144m19-144v144m16-144v144m7-144v144m2-144v144m23-144v144m7-144v144m3-144v144m17-144v144m96-144v144m9-144v144m9-144v144m11-144v144m18-144v144m20-144v144m19-144v144m17-144v144m3-144v144m31-144v144m14-144v144m11-144v144m495-144v144m13-144v144m27-144v144m5-144v144m47-144v144m7-144v144m12-144v144m3-144v144m15-144v144m1-144v144m23-144v144m5-144v144m17-144v144m28-144v144m4-144v144m5-144v144m6-144v144m19-144v144m18-144v144"/>
<path stroke="url(#m122)" d="M86.5 222v153m25-153v153m65-153v153m16-153v153m18-153v153m2-153v153m1-153v153m6-153v153m33-153v153m4-153v153m5-153v153m5-153v153m59-153v153m1-153v153m22-153v153m27-153v153m8-153v153m47-153v153m22-153v153m2-153v153m5-153v153m16-153v153m2-153v153m6-153v153m12-153v153m7-153v153m22-153v153m13-153v153m27-153v153m5-153v153m9-153v153m12-153v153m3-153v153m1-153v153m9-153v153m7-153v153m22-153v153m12-153v153m47-153v153m3-153v153m10-153v153m32-153v153m569-153v153m11-153v153m5-153v153m4-153v153m30-153v153m5-153v153m14-153v153m3-153v153m16-153v153m6-153v153m10-153v153m45-153v153m4-153v153m23-153v153"/>
<path stroke="url(#m123)" d="M792.5 234v141m68-141v141m34-141v141m35-141v141m1-141v141m68-141v141m23-141v141m11-141v141m2-141v141m28-141v141m11-141v141m7-141v141m51-141v141m41-141v141m52-141v141"/>
<path stroke="url(#m124)" d="M996.5 117v258m57-258v258m12-258v258m46-258v258m53-258v258m1-258v258m3-258v258m7-258v258m27-258v258m27-258v258m19-258v258m5-258v258m9-258v258"/>
<path stroke="url(#m125)" d="M883.5 213v162m21-162v162m2-162v162m141-162v162m21-162v162m47-162v162m7-162v162m98-162v162"/>
<path stroke="url(#m130)" d="M38.5 234v141m25-141v141m4-141v141m10-141v141m2-141v141m18-141v141m1-141v141m27-141v141m6-141v141m26-141v141m28-141v141m15-141v141m8-141v141m9-141v141m83-141v141m2-141v141m3-141v141m6-141v141m22-141v141m11-141v141m11-141v141m3-141v141m2-141v141m17-141v141m44-141v141m6-141v141m24-141v141m12-141v141m21-141v141m4-141v141m3-141v141m21-141v141m32-141v141m3-141v141m7-141v141m26-141v141m25-141v141m22-141v141m41-141v141m16-141v141m2-141v141m4-141v141m5-141v141m1-141v141m1-141v141m23-141v141m12-141v141m2-141v141m52-141v141m489-141v141m5-141v141m5-141v141m16-141v141m1-141v141m27-141v141m1-141v141m13-141v141m10-141v141m1-141v141m2-141v141m20-141v141m9-141v141m21-141v141m71-141v141m1-141v141m16-141v141m9-141v141"/>
<path stroke="url(#m131)" d="M15.5 117v258m18-258v258m20-258v258m1-258v258m16-258v258m13-258v258m6-258v258m43-258v258m11-258v258m9-258v258m13-258v258m14-258v258m5-258v258m4-258v258m15-258v258m6-258v258m7-258v258m9-258v258m42-258v258m4-258v258m4-258v258m29-258v258m15-258v258m2-258v258m6-258v258m1-258v258m2-258v258m5-258v258m16-258v258m2-258v258m14-258v258m1-258v258m3-258v258m10-258v258m12-258v258m30-258v258m2-258v258m3-258v258m16-258v258m21-258v258m1-258v258m3-258v258m7-258v258m45-258v258m31-258v258m23-258v258m1-258v258m6-258v258m14-258v258m2-258v258m19-258v258m16-258v258m5-258v258m5-258v258m13-258v258m2-258v258m27-258v258m8-258v258m5-258v258m8-258v258m20-258v258m4-258v258m8-258v258m5-258v258m2-258v258m1-258v258m4-258v258m1-258v258m4-258v258m2-258v258m19-258v258m14-258v258m482-258v258m12-258v258m7-258v258m5-258v258m15-258v258m13-258v258m3-258v258m1-258v258m9-258v258m5-258v258m2-258v258m26-258v258m12-258v258m16-258v258m22-258v258m5-258v258m10-258v258m3-258v258m24-258v258m7-258v258m21-258v258m2-258v258m4-258v258m4-258v258m21-258v258"/>
<path stroke="url(#m132)" d="M29.5 117v258m1-258v258m17-258v258m45-258v258m4-258v258m11-258v258m33-258v258m2-258v258m5-258v258m86-258v258m16-258v258m2-258v258m6-258v258m1-258v258m14-258v258m1-258v258m17-258v258m3-258v258m1-258v258m45-258v258m63-258v258m8-258v258m19-258v258m21-258v258m21-258v258m1-258v258m18-258v258m2-258v258m30-258v258m6-258v258m67-258v258m17-258v258m16-258v258m1-258v258m1-258v258m5-258v258m4-258v258m2-258v258m37-258v258m22-258v258m10-258v258m1-258v258m7-258v258m5-258v258m16-258v258m5-258v258m20-258v258m1-258v258m3-258v258m5-258v258m514-258v258m12-258v258m8-258v258m15-258v258m9-258v258m38-258v258m31-258v258m7-258v258m4-258v258m26-258v258m26-258v258m2-258v258m21-258v258m2-258v258m39-258v258"/>
<path stroke="url(#m133)" d="M1057.5 117v258m133-258v258"/>
<path stroke="url(#m134)" d="M1011.5 222v153m22-153v153m17-153v153m46-153v153m20-153v153m19-153v153m11-153v153m38-153v153m66-153v153m6-153v153m10-153v153"/>
<path stroke="url(#m135)" d="M1152.5 210v165m30-165v165m55-165v165"/>
<path stroke="url(#m140)" d="M24.5 219v156m10-156v156m14-156v156m9-156v156m4-156v156m8-156v156m11-156v156m28-156v156m9-156v156m6-156v156m16-156v156m30-156v156m28-156v156m7-156v156m34-156v156m10-156v156m22-156v156m7-156v156m22-156v156m8-156v156m43-156v156m26-156v156m9-156v156m3-156v156m32-156v156m11-156v156m78-156v156m22-156v156m20-156v156m21-156v156m16-156v156m3-156v156m33-156v156m13-156v156m13-156v156m24-156v156m8-156v156m23-156v156m26-156v156m10-156v156m29-156v156m5-156v156m12-156v156m487-156v156m2-156v156m59-156v156m4-156v156m7-156v156m20-156v156m13-156v156m16-156v156m18-156v156m5-156v156m11-156v156m5-156v156m8-156v156m5-156v156m10-156v156m3-156v156m22-156v156m24-156v156"/>
<path stroke="url(#m141)" d="M28.5 117v258m14-258v258m3-258v258m7-258v258m16-258v258m14-258v258m8-258v258m19-258v258m13-258v258m26-258v258m2-258v258m32-258v258m24-258v258m15-258v258m1-258v258m28-258v258m4-258v258m1-258v258m8-258v258m13-258v258m15-258v258m24-258v258m8-258v258m11-258v258m8-258v258m14-258v258m14-258v258m10-258v258m16-258v258m4-258v258m11-258v258m22-258v258m9-258v258m7-258v258m11-258v258m18-258v258m4-258v258m19-258v258m13-258v258m22-258v258m2-258v258m3-258v258m2-258v258m12-258v258m10-258v258m34-258v258m23-258v258m27-258v258m3-258v258m7-258v258m5-258v258m7-258v258m1-258v258m31-258v258m10-258v258m2-258v258m59-258v258m8-258v258m2-258v258m485-258v258m10-258v258m14-258v258m7-258v258m8-258v258m12-258v258m42-258v258m11-258v258m10-258v258m11-258v258m11-258v258m7-258v258m2-258v258m25-258v258m12-258v258m1-258v258m7-258v258m2-258v258m13-258v258m1-258v258m4-258v258m14-258v258m9-258v258m3-258v258m4-258v258"/>
<path stroke="url(#m142)" d="M18.5 219v156m22-156v156m6-156v156m12-156v156m8-156v156m18-156v156m3-156v156m18-156v156m58-156v156m3-156v156m12-156v156m20-156v156m30-156v156m9-156v156m4-156v156m18-156v156m37-156v156m13-156v156m5-156v156m3-156v156m57-156v156m8-156v156m24-156v156m1-156v156m15-156v156m19-156v156m46-156v156m7-156v156m2-156v156m2-156v156m9-156v156m3-156v156m8-156v156m24-156v156m4-156v156m3-156v156m19-156v156m6-156v156m11-156v156m19-156v156m11-156v156m11-156v156m5-156v156m22-156v156m16-156v156m1-156v156m9-156v156m20-156v156m15-156v156m42-156v156m4-156v156m11-156v156m6-156v156m3-156v156m491-156v156m11-156v156m37-156v156m14-156v156m16-156v156m3-156v156m37-156v156m33-156v156m27-156v156m4-156v156m14-156v156m6-156v156m14-156v156m11-156v156m6-156v156m3-156v156m10-156v156"/>
<path stroke="url(#m144)" d="M1108.5 219v156m25-156v156m28-156v156m97-156v156"/>
<path stroke="url(#m145)" d="M1128.5 204v171m11-171v171m89-171v171m17-171v171"/>
<path stroke="url(#m150)" d="M19.5 117v258m22-258v258m2-258v258m70-258v258m8-258v258m8-258v258m32-258v258m6-258v258m80-258v258m48-258v258m57-258v258m20-258v258m1-258v258m28-258v258m42-258v258m3-258v258m1-258v258m9-258v258m61-258v258m18-258v258m4-258v258m6-258v258m18-258v258m18-258v258m3-258v258m5-258v258m32-258v258m19-258v258m41-258v258m8-258v258m53-258v258m16-258v258m532-258v258m7-258v258m17-258v258m9-258v258m25-258v258m3-258v258m16-258v258m41-258v258m32-258v258m15-258v258m13-258v258m15-258v258m1-258v258m32-258v258"/>
<path stroke="url(#m151)" d="M26.5 117v258m30-258v258m3-258v258m12-258v258m1-258v258m3-258v258m3-258v258m36-258v258m1-258v258m41-258v258m6-258v258m11-258v258m16-258v258m6-258v258m20-258v258m15-258v258m1-258v258m5-258v258m4-258v258m24-258v258m10-258v258m5-258v258m7-258v258m1-258v258m31-258v258m31-258v258m30-258v258m19-258v258m11-258v258m5-258v258m3-258v258m31-258v258m14-258v258m42-258v258m1-258v258m11-258v258m13-258v258m37-258v258m1-258v258m47-258v258m4-258v258m5-258v258m24-258v258m19-258v258m26-258v258m20-258v258m5-258v258m4-258v258m31-258v258m37-258v258m479-258v258m2-258v258m7-258v258m1-258v258m5-258v258m15-258v258m38-258v258m4-258v258m7-258v258m11-258v258m3-258v258m2-258v258m12-258v258m21-258v258m1-258v258m24-258v258m2-258v258m74-258v258m2-258v258m2-258v258m12-258v258m6-258v258"/>
<path stroke="url(#m152)" d="M39.5 216v159m95-159v159m19-159v159m1-159v159m6-159v159m11-159v159m9-159v159m1-159v159m30-159v159m35-159v159m36-159v159m7-159v159m23-159v159m26-159v159m2-159v159m3-159v159m3-159v159m1-159v159m43-159v159m90-159v159m9-159v159m64-159v159m5-159v159m4-159v159m11-159v159m24-159v159m16-159v159m23-159v159m6-159v159m25-159v159m57-159v159m3-159v159m36-159v159m3-159v159m22-159v159m592-159v159m21-159v159m9-159v159m9-159v159m31-159v159"/>
<path stroke="url(#m154)" d="M1157.5 216v159"/>
<path stroke="url(#m155)" d="M1119.5 204v171"/>
<path stroke="url(#m160)" d="M21.5 117v258m10-258v258m18-258v258m84-258v258m81-258v258m67-258v258m3-258v258m17-258v258m5-258v258m2-258v258m8-258v258m6-258v258m2-258v258m71-258v258m2-258v258m21-258v258m19-258v258m2-258v258m58-258v258m9-258v258m27-258v258m1-258v258m37-258v258m80-258v258m26-258v258m48-258v258m22-258v258m15-258v258m628-258v258m34-258v258m40-258v258m44-258v258"/>
<path stroke="url(#m161)" d="M22.5 222v153m13-153v153m29-153v153m12-153v153m15-153v153m178-153v153m9-153v153m32-153v153m89-153v153m20-153v153m19-153v153m89-153v153m3-153v153m2-153v153m25-153v153m108-153v153m23-153v153m49-153v153m12-153v153m543-153v153m12-153v153m64-153v153m60-153v153m4-153v153m4-153v153m7-153v153"/>
<path stroke="url(#m162)" d="M36.5 213v162m8-162v162m29-162v162m8-162v162m74-162v162m13-162v162m97-162v162m3-162v162m12-162v162m3-162v162m5-162v162m4-162v162m53-162v162m60-162v162m74-162v162m29-162v162m17-162v162m1-162v162m14-162v162m117-162v162m72-162v162m54-162v162m8-162v162m498-162v162m52-162v162m9-162v162m67-162v162m10-162v162m14-162v162m71-162v162m6-162v162"/>
<path stroke="url(#m170)" d="M55.5 228v147m564-147v147m61-147v147m766-147v147m20-147v147"/>
<path stroke="url(#m171)" d="M74.5 216v159m45-159v159m113-159v159m529-159v159m20-159v159m551-159v159m2-159v159m99-159v159m23-159v159"/>
<path stroke="url(#m172)" d="M234.5 204v171m51-171v171m375-171v171m27-171v171m758-171v171"/>
<path stroke="url(#m180)" d="M559.5 225v150"/>
<path stroke="url(#m181)" d="M120.5 216v159m1295-159v159m29-159v159"/>
<path stroke="url(#l0)" d="M0.5 363v12m2-12v12m1-12v12m1-12v12m1-12v12m2-12v12m2-12v12m1555-12v12m1-12v12"/>
<path stroke="url(#l10)" d="M6.5 359v16m2-16v16m3-16v16m1535-16v16m4-16v16m9-16v16m4-16v16"/>
<path stroke="url(#l20)" d="M1.5 357v18m9-18v18m3-18v18m1532-18v18m2-18v18m8-18v18"/>
<path stroke="url(#l30)" d="M12.5 353v22m341-22v22m303-22v22m691-22v22m190-22v22m2-22v22m10-22v22m2-22v22m1-22v22m1-22v22m3-22v22m1-22v22m1-22v22m4-22v22"/>
<path stroke="url(#l31)" d="M925.5 351v24m11-24v24m296-24v24"/>
<path stroke="url(#l40)" d="M655.5 351v24m881-24v24m8-24v24m4-24v24m12-24v24m1-24v24"/>
<path stroke="url(#l41)" d="M810.5 349v26m9-26v26m32-26v26m31-26v26m37-26v26m1-26v26m34-26v26m32-26v26m1-26v26m37-26v26m94-26v26m5-26v26m29-26v26m33-26v26"/>
<path stroke="url(#l50)" d="M24.5 347v28m58-28v28m27-28v28m21-28v28m18-28v28m97-28v28m27-28v28m36-28v28m83-28v28m36-28v28m13-28v28m28-28v28m214-28v28m39-28v28m640-28v28m128-28v28m1-28v28m48-28v28m2-28v28m1-28v28m1-28v28"/>
<path stroke="url(#l51)" d="M795.5 347v28m35-28v28m1-28v28m10-28v28m13-28v28m1-28v28m3-28v28m4-28v28m11-28v28m19-28v28m11-28v28m1-28v28m4-28v28m5-28v28m13-28v28m38-28v28m2-28v28m2-28v28m14-28v28m7-28v28m16-28v28m1-28v28m3-28v28m7-28v28m19-28v28m13-28v28m1-28v28m12-28v28m42-28v28m4-28v28m17-28v28m34-28v28m48-28v28m1-28v28m1-28v28m1-28v28m10-28v28m6-28v28m4-28v28"/>
<path stroke="url(#l60)" d="M28.5 345v30m3-30v30m15-30v30m9-30v30m36-30v30m12-30v30m2-30v30m10-30v30m51-30v30m16-30v30m11-30v30m1-30v30m41-30v30m3-30v30m6-30v30m22-30v30m28-30v30m15-30v30m17-30v30m18-30v30m2-30v30m20-30v30m53-30v30m4-30v30m12-30v30m8-30v30m1-30v30m39-30v30m13-30v30m6-30v30m16-30v30m7-30v30m50-30v30m7-30v30m40-30v30m59-30v30m47-30v30m12-30v30m5-30v30m4-30v30m8-30v30m23-30v30m3-30v30m8-30v30m503-30v30m1-30v30m2-30v30m3-30v30m19-30v30m66-30v30m17-30v30m36-30v30m33-30v30m57-30v30m1-30v30m6-30v30m8-30v30"/>
<path stroke="url(#l61)" d="M794.5 311v64m8-64v64m1-64v64m2-64v64m4-64v64m5-64v64m14-64v64m1-64v64m4-64v64m1-64v64m11-64v64m3-64v64m1-64v64m1-64v64m2-64v64m1-64v64m3-64v64m9-64v64m4-64v64m16-64v64m6-64v64m14-64v64m4-64v64m6-64v64m16-64v64m10-64v64m5-64v64m1-64v64m1-64v64m5-64v64m7-64v64m3-64v64m2-64v64m5-64v64m1-64v64m1-64v64m1-64v64m1-64v64m1-64v64m10-64v64m3-64v64m2-64v64m2-64v64m1-64v64m30-64v64m2-64v64m11-64v64m1-64v64m2-64v64m8-64v64m11-64v64m1-64v64m4-64v64m16-64v64m2-64v64m6-64v64m1-64v64m8-64v64m1-64v64m3-64v64m17-64v64m11-64v64m32-64v64m9-64v64m1-64v64m1-64v64m17-64v64m1-64v64m29-64v64m4-64v64m1-64v64m7-64v64m1-64v64m13-64v64m3-64v64m18-64v64"/>
<path stroke="url(#l70)" d="M20.5 341v34m5-34v34m2-34v34m2-34v34m3-34v34m11-34v34m15-34v34m18-34v34m9-34v34m11-34v34m6-34v34m2-34v34m4-34v34m6-34v34m17-34v34m16-34v34m6-34v34m1-34v34m14-34v34m10-34v34m9-34v34m2-34v34m2-34v34m5-34v34m2-34v34m3-34v34m19-34v34m3-34v34m2-34v34m2-34v34m1-34v34m1-34v34m7-34v34m1-34v34m5-34v34m4-34v34m2-34v34m9-34v34m27-34v34m1-34v34m12-34v34m7-34v34m9-34v34m30-34v34m9-34v34m2-34v34m50-34v34m10-34v34m1-34v34m6-34v34m3-34v34m6-34v34m15-34v34m13-34v34m7-34v34m12-34v34m10-34v34m8-34v34m6-34v34m5-34v34m10-34v34m27-34v34m22-34v34m1-34v34m23-34v34m3-34v34m26-34v34m6-34v34m6-34v34m2-34v34m8-34v34m7-34v34m1-34v34m21-34v34m4-34v34m2-34v34m67-34v34m2-34v34m4-34v34m17-34v34m12-34v34m2-34v34m3-34v34m8-34v34m478-34v34m12-34v34m5-34v34m19-34v34m7-34v34m7-34v34m17-34v34m2-34v34m9-34v34m34-34v34m4-34v34m2-34v34m2-34v34m12-34v34m7-34v34m26-34v34m34-34v34m10-34v34m2-34v34m12-34v34m1-34v34m3-34v34m1-34v34m1-34v34m2-34v34m12-34v34m1-34v34m22-34v34m20-34v34"/>
<path stroke="url(#l71)" d="M799.5 311v64m8-64v64m4-64v64m5-64v64m1-64v64m3-64v64m2-64v64m2-64v64m2-64v64m1-64v64m5-64v64m3-64v64m11-64v64m14-64v64m1-64v64m2-64v64m20-64v64m3-64v64m8-64v64m1-64v64m2-64v64m3-64v64m6-64v64m1-64v64m7-64v64m10-64v64m5-64v64m1-64v64m10-64v64m2-64v64m3-64v64m5-64v64m2-64v64m3-64v64m2-64v64m5-64v64m5-64v64m14-64v64m2-64v64m1-64v64m17-64v64m3-64v64m22-64v64m1-64v64m6-64v64m1-64v64m4-64v64m12-64v64m1-64v64m6-64v64m7-64v64m5-64v64m1-64v64m10-64v64m6-64v64m15-64v64m1-64v64m2-64v64m2-64v64m15-64v64m1-64v64m5-64v64m13-64v64m4-64v64m3-64v64m16-64v64m4-64v64m13-64v64m7-64v64m3-64v64m4-64v64m2-64v64m14-64v64m11-64v64m3-64v64m4-64v64m18-64v64m17-64v64"/>
<path stroke="url(#l80)" d="M18.5 339v36m3-36v36m2-36v36m7-36v36m5-36v36m3-36v36m1-36v36m5-36v36m1-36v36m20-36v36m4-36v36m3-36v36m8-36v36m6-36v36m1-36v36m10-36v36m1-36v36m1-36v36m1-36v36m6-36v36m7-36v36m8-36v36m1-36v36m1-36v36m1-36v36m9-36v36m11-36v36m2-36v36m3-36v36m27-36v36m1-36v36m2-36v36m5-36v36m1-36v36m5-36v36m19-36v36m2-36v36m3-36v36m7-36v36m5-36v36m6-36v36m2-36v36m7-36v36m2-36v36m20-36v36m6-36v36m2-36v36m2-36v36m3-36v36m1-36v36m2-36v36m11-36v36m2-36v36m4-36v36m18-36v36m2-36v36m23-36v36m6-36v36m6-36v36m4-36v36m7-36v36m2-36v36m3-36v36m1-36v36m9-36v36m6-36v36m18-36v36m8-36v36m29-36v36m1-36v36m2-36v36m19-36v36m20-36v36m5-36v36m4-36v36m2-36v36m1-36v36m2-36v36m9-36v36m8-36v36m1-36v36m8-36v36m6-36v36m1-36v36m1-36v36m6-36v36m1-36v36m5-36v36m1-36v36m3-36v36m20-36v36m3-36v36m2-36v36m8-36v36m2-36v36m8-36v36m4-36v36m10-36v36m16-36v36m6-36v36m3-36v36m11-36v36m12-36v36m12-36v36m18-36v36m6-36v36m1-36v36m5-36v36m6-36v36m14-36v36m1-36v36m23-36v36m4-36v36m11-36v36m25-36v36m3-36v36m8-36v36m486-36v36m14-36v36m2-36v36m2-36v36m32-36v36m5-36v36m11-36v36m3-36v36m10-36v36m3-36v36m6-36v36m3-36v36m7-36v36m1-36v36m3-36v36m15-36v36m12-36v36m3-36v36m8-36v36m4-36v36m2-36v36m8-36v36m16-36v36m9-36v36m5-36v36m6-36v36m7-36v36m4-36v36m5-36v36m20-36v36m6-36v36m9-36v36m1-36v36m1-36v36m2-36v36m4-36v36m11-36v36m1-36v36"/>
<path stroke="url(#l81)" d="M796.5 311v64m4-64v64m1-64v64m3-64v64m4-64v64m7-64v64m3-64v64m3-64v64m2-64v64m19-64v64m17-64v64m9-64v64m2-64v64m1-64v64m1-64v64m2-64v64m1-64v64m1-64v64m25-64v64m1-64v64m8-64v64m6-64v64m2-64v64m3-64v64m1-64v64m5-64v64m8-64v64m14-64v64m2-64v64m5-64v64m5-64v64m30-64v64m8-64v64m4-64v64m4-64v64m11-64v64m22-64v64m12-64v64m2-64v64m6-64v64m5-64v64m2-64v64m1-64v64m9-64v64m1-64v64m15-64v64m6-64v64m20-64v64m6-64v64m5-64v64m2-64v64m14-64v64m3-64v64m2-64v64m2-64v64m4-64v64m4-64v64m5-64v64m2-64v64m8-64v64m3-64v64m2-64v64m3-64v64m7-64v64m7-64v64m4-64v64m15-64v64m23-64v64m1-64v64m1-64v64m3-64v64m17-64v64m2-64v64"/>
<path stroke="url(#l90)" d="M14.5 335v40m3-40v40m9-40v40m10-40v40m4-40v40m1-40v40m1-40v40m7-40v40m7-40v40m1-40v40m3-40v40m2-40v40m2-40v40m3-40v40m4-40v40m2-40v40m6-40v40m2-40v40m2-40v40m9-40v40m9-40v40m6-40v40m4-40v40m7-40v40m1-40v40m7-40v40m2-40v40m6-40v40m5-40v40m1-40v40m3-40v40m2-40v40m5-40v40m9-40v40m1-40v40m1-40v40m1-40v40m1-40v40m1-40v40m1-40v40m2-40v40m2-40v40m1-40v40m4-40v40m1-40v40m5-40v40m1-40v40m2-40v40m5-40v40m7-40v40m5-40v40m13-40v40m5-40v40m12-40v40m9-40v40m14-40v40m3-40v40m9-40v40m3-40v40m6-40v40m4-40v40m3-40v40m1-40v40m1-40v40m5-40v40m1-40v40m4-40v40m5-40v40m3-40v40m5-40v40m1-40v40m4-40v40m6-40v40m5-40v40m5-40v40m1-40v40m14-40v40m7-40v40m7-40v40m4-40v40m3-40v40m2-40v40m11-40v40m11-40v40m16-40v40m2-40v40m1-40v40m2-40v40m5-40v40m5-40v40m2-40v40m2-40v40m3-40v40m1-40v40m2-40v40m5-40v40m1-40v40m3-40v40m12-40v40m6-40v40m1-40v40m3-40v40m10-40v40m2-40v40m11-40v40m4-40v40m19-40v40m2-40v40m2-40v40m5-40v40m5-40v40m14-40v40m16-40v40m9-40v40m3-40v40m7-40v40m2-40v40m2-40v40m2-40v40m2-40v40m9-40v40m19-40v40m27-40v40m3-40v40m1-40v40m1-40v40m2-40v40m1-40v40m2-40v40m3-40v40m10-40v40m11-40v40m2-40v40m4-40v40m1-40v40m4-40v40m16-40v40m1-40v40m1-40v40m10-40v40m2-40v40m1-40v40m3-40v40m4-40v40m1-40v40m5-40v40m2-40v40m1-40v40m8-40v40m7-40v40m5-40v40m4-40v40m7-40v40m5-40v40m1-40v40m4-40v40m9-40v40m3-40v40m5-40v40m4-40v40m494-40v40m3-40v40m2-40v40m8-40v40m4-40v40m2-40v40m1-40v40m2-40v40m4-40v40m8-40v40m3-40v40m1-40v40m22-40v40m1-40v40m8-40v40m7-40v40m1-40v40m2-40v40m8-40v40m1-40v40m2-40v40m14-40v40m4-40v40m3-40v40m2-40v40m1-40v40m6-40v40m4-40v40m6-40v40m2-40v40m4-40v40m2-40v40m2-40v40m6-40v40m9-40v40m1-40v40m5-40v40m3-40v40m3-40v40m11-40v40m6-40v40m1-40v40m17-40v40m6-40v40m1-40v40m12-40v40m1-40v40m1-40v40m1-40v40m2-40v40m5-40v40m9-40v40m3-40v40m8-40v40"/>
<path stroke="url(#l91)" d="M793.5 345v30m4-30v30m15-30v30m1-30v30m12-30v30m12-30v30m1-30v30m9-30v30m17-30v30m2-30v30m15-30v30m3-30v30m15-30v30m13-30v30m20-30v30m7-30v30m4-30v30m16-30v30m20-30v30m16-30v30m2-30v30m1-30v30m10-30v30m4-30v30m5-30v30m2-30v30m2-30v30m41-30v30m9-30v30m1-30v30m17-30v30m3-30v30m2-30v30m1-30v30m21-30v30m10-30v30m7-30v30m1-30v30m1-30v30m1-30v30m9-30v30m11-30v30m3-30v30m5-30v30m13-30v30m9-30v30m17-30v30m8-30v30m9-30v30m6-30v30m13-30v30m15-30v30m2-30v30m5-30v30m5-30v30"/>
<path stroke="url(#l100)" d="M15.5 333v42m1-42v42m6-42v42m11-42v42m4-42v42m10-42v42m5-42v42m1-42v42m6-42v42m4-42v42m3-42v42m2-42v42m2-42v42m7-42v42m11-42v42m5-42v42m2-42v42m15-42v42m10-42v42m5-42v42m4-42v42m12-42v42m1-42v42m9-42v42m1-42v42m4-42v42m15-42v42m2-42v42m13-42v42m6-42v42m7-42v42m8-42v42m1-42v42m2-42v42m2-42v42m3-42v42m7-42v42m2-42v42m9-42v42m7-42v42m7-42v42m4-42v42m7-42v42m9-42v42m8-42v42m5-42v42m7-42v42m4-42v42m8-42v42m6-42v42m5-42v42m13-42v42m2-42v42m4-42v42m1-42v42m4-42v42m2-42v42m2-42v42m3-42v42m16-42v42m2-42v42m10-42v42m1-42v42m1-42v42m11-42v42m2-42v42m1-42v42m3-42v42m1-42v42m3-42v42m1-42v42m5-42v42m2-42v42m2-42v42m14-42v42m16-42v42m10-42v42m6-42v42m3-42v42m1-42v42m5-42v42m13-42v42m8-42v42m6-42v42m6-42v42m3-42v42m4-42v42m1-42v42m1-42v42m1-42v42m4-42v42m4-42v42m5-42v42m2-42v42m2-42v42m7-42v42m5-42v42m1-42v42m1-42v42m11-42v42m6-42v42m3-42v42m4-42v42m1-42v42m1-42v42m2-42v42m3-42v42m11-42v42m5-42v42m5-42v42m12-42v42m2-42v42m1-42v42m9-42v42m3-42v42m2-42v42m4-42v42m4-42v42m1-42v42m6-42v42m1-42v42m5-42v42m9-42v42m3-42v42m5-42v42m7-42v42m2-42v42m5-42v42m10-42v42m3-42v42m3-42v42m3-42v42m1-42v42m4-42v42m1-42v42m6-42v42m1-42v42m2-42v42m5-42v42m6-42v42m8-42v42m8-42v42m2-42v42m2-42v42m1-42v42m2-42v42m5-42v42m4-42v42m5-42v42m7-42v42m2-42v42m1-42v42m6-42v42m1-42v42m5-42v42m6-42v42m15-42v42m487-42v42m2-42v42m3-42v42m8-42v42m2-42v42m2-42v42m10-42v42m3-42v42m3-42v42m11-42v42m4-42v42m2-42v42m4-42v42m4-42v42m18-42v42m20-42v42m1-42v42m2-42v42m7-42v42m15-42v42m13-42v42m12-42v42m15-42v42m7-42v42m1-42v42m8-42v42m2-42v42m10-42v42m1-42v42m2-42v42m2-42v42m2-42v42m8-42v42m2-42v42m1-42v42m1-42v42m1-42v42m8-42v42m14-42v42m2-42v42m9-42v42m8-42v42m1-42v42"/>
<path stroke="url(#l101)" d="M836.5 343v32m4-32v32m4-32v32m13-32v32m21-32v32m15-32v32m3-32v32m15-32v32m6-32v32m20-32v32m32-32v32m7-32v32m2-32v32m16-32v32m6-32v32m2-32v32m11-32v32m17-32v32m13-32v32m1-32v32m2-32v32m10-32v32m10-32v32m32-32v32m13-32v32m9-32v32m9-32v32m10-32v32m36-32v32m3-32v32m27-32v32m8-32v32m2-32v32m18-32v32m15-32v32m10-32v32m1-32v32"/>
<path stroke="url(#l110)" d="M19.5 329v46m15-46v46m14-46v46m3-46v46m10-46v46m13-46v46m4-46v46m34-46v46m4-46v46m16-46v46m3-46v46m3-46v46m34-46v46m30-46v46m2-46v46m1-46v46m12-46v46m2-46v46m12-46v46m18-46v46m1-46v46m2-46v46m2-46v46m7-46v46m3-46v46m6-46v46m16-46v46m14-46v46m2-46v46m10-46v46m6-46v46m1-46v46m2-46v46m11-46v46m1-46v46m2-46v46m2-46v46m3-46v46m10-46v46m8-46v46m14-46v46m1-46v46m6-46v46m2-46v46m5-46v46m9-46v46m1-46v46m3-46v46m8-46v46m10-46v46m19-46v46m10-46v46m4-46v46m12-46v46m1-46v46m1-46v46m2-46v46m8-46v46m1-46v46m4-46v46m2-46v46m7-46v46m22-46v46m26-46v46m1-46v46m1-46v46m1-46v46m6-46v46m1-46v46m8-46v46m9-46v46m25-46v46m2-46v46m9-46v46m3-46v46m1-46v46m6-46v46m43-46v46m1-46v46m5-46v46m8-46v46m2-46v46m2-46v46m8-46v46m9-46v46m18-46v46m3-46v46m11-46v46m5-46v46m2-46v46m8-46v46m2-46v46m16-46v46m14-46v46m4-46v46m1-46v46m498-46v46m2-46v46m2-46v46m4-46v46m33-46v46m2-46v46m2-46v46m7-46v46m2-46v46m2-46v46m4-46v46m2-46v46m1-46v46m1-46v46m3-46v46m6-46v46m1-46v46m1-46v46m1-46v46m4-46v46m1-46v46m9-46v46m20-46v46m2-46v46m10-46v46m4-46v46m3-46v46m7-46v46m1-46v46m2-46v46m12-46v46m21-46v46m13-46v46m4-46v46m1-46v46m2-46v46m15-46v46m10-46v46m8-46v46m22-46v46m4-46v46m4-46v46m1-46v46m6-46v46"/>
<path stroke="url(#l111)" d="M792.5 341v34m6-34v34m8-34v34m33-34v34m4-34v34m24-34v34m10-34v34m2-34v34m1-34v34m7-34v34m1-34v34m1-34v34m1-34v34m8-34v34m25-34v34m5-34v34m5-34v34m1-34v34m4-34v34m6-34v34m14-34v34m19-34v34m3-34v34m16-34v34m14-34v34m1-34v34m3-34v34m1-34v34m5-34v34m2-34v34m6-34v34m1-34v34m2-34v34m1-34v34m9-34v34m1-34v34m3-34v34m8-34v34m2-34v34m18-34v34m1-34v34m1-34v34m1-34v34m6-34v34m1-34v34m1-34v34m1-34v34m5-34v34m1-34v34m14-34v34m3-34v34m1-34v34m1-34v34m2-34v34m1-34v34m1-34v34m1-34v34m16-34v34m6-34v34m1-34v34m3-34v34m1-34v34m1-34v34m5-34v34m2-34v34m4-34v34m1-34v34m7-34v34m3-34v34m7-34v34m1-34v34m1-34v34m8-34v34m1-34v34m9-34v34m1-34v34m2-34v34m2-34v34m2-34v34m1-34v34m1-34v34m3-34v34m8-34v34m2-34v34m2-34v34m11-34v34m7-34v34m1-34v34m1-34v34m1-34v34m1-34v34m5-34v34m6-34v34m1-34v34m1-34v34m1-34v34m1-34v34m2-34v34m2-34v34m3-34v34m7-34v34"/>
<path stroke="url(#l120)" d="M50.5 327v48m4-48v48m30-48v48m5-48v48m1-48v48m4-48v48m33-48v48m10-48v48m18-48v48m42-48v48m19-48v48m39-48v48m5-48v48m35-48v48m25-48v48m11-48v48m17-48v48m13-48v48m14-48v48m19-48v48m16-48v48m1-48v48m1-48v48m17-48v48m18-48v48m6-48v48m1-48v48m13-48v48m6-48v48m3-48v48m45-48v48m1-48v48m1-48v48m9-48v48m15-48v48m3-48v48m2-48v48m8-48v48m11-48v48m9-48v48m1-48v48m3-48v48m2-48v48m7-48v48m3-48v48m4-48v48m11-48v48m2-48v48m12-48v48m4-48v48m17-48v48m16-48v48m28-48v48m11-48v48m12-48v48m20-48v48m18-48v48m7-48v48m9-48v48m5-48v48m15-48v48m483-48v48m4-48v48m13-48v48m20-48v48m1-48v48m7-48v48m13-48v48m36-48v48m4-48v48m9-48v48m1-48v48m35-48v48m1-48v48m7-48v48m2-48v48m1-48v48m3-48v48m1-48v48m21-48v48m1-48v48m10-48v48m14-48v48m1-48v48m33-48v48"/>
<path stroke="url(#l130)" d="M75.5 323v52m61-52v52m67-52v52m3-52v52m53-52v52m65-52v52m23-52v52m27-52v52m4-52v52m2-52v52m10-52v52m7-52v52m64-52v52m11-52v52m81-52v52m55-52v52m55-52v52m37-52v52m16-52v52m45-52v52m27-52v52m487-52v52m8-52v52m19-52v52m51-52v52m4-52v52m5-52v52m3-52v52m11-52v52m18-52v52m2-52v52m35-52v52m1-52v52m4-52v52m3-52v52m8-52v52m1-52v52m4-52v52m54-52v52m17-52v52"/>
<path stroke="url(#l140)" d="M117.5 321v54m40-54v54m1-54v54m104-54v54m53-54v54m116-54v54m174-54v54m1-54v54m8-54v54m1-54v54m4-54v54m24-54v54m8-54v54m9-54v54m42-54v54m16-54v54m51-54v54m661-54v54"/>
<path stroke="url(#l150)" d="M594.5 317v58m105-58v58m85-58v58m645-58v58"/>
<path stroke="url(#l160)" d="M303.5 315v60"/>
<rect x="14" y="225" width="778" height="130" fill="url(#p1)"/>
<rect x="14" y="225" width="778" height="130" fill="url(#p2)"/>
<rect x="1268" y="225" width="255" height="130" fill="url(#p1)"/>
<rect x="1268" y="225" width="255" height="130" fill="url(#p2)"/>
<rect x="243" y="183" width="1" height="192" fill="url(#s0)"/>
<rect x="246" y="105" width="1" height="270" fill="url(#s1)"/>
<rect x="248" y="201" width="1" height="174" fill="url(#s2)"/>
<rect x="843" y="243" width="1" height="132" fill="url(#s3)"/>
<rect x="849" y="237" width="1" height="138" fill="url(#s4)"/>
<rect x="907" y="237" width="1" height="138" fill="url(#s4)"/>
<rect x="1056" y="207" width="1" height="168" fill="url(#s5)"/>
<rect x="1214" y="180" width="1" height="195" fill="url(#s6)"/>
<rect x="1329" y="135" width="1" height="240" fill="url(#s7)"/>
<rect x="1332" y="192" width="1" height="183" fill="url(#s8)"/>
<rect x="1360" y="135" width="1" height="240" fill="url(#s9)"/>
<rect x="1461" y="201" width="1" height="174" fill="url(#s2)"/>
<rect x="1486" y="192" width="1" height="183" fill="url(#s10)"/>
<rect x="1216" y="156" width="1" height="219" fill="url(#s11)"/>
<rect x="1" y="0" width="3" height="180" fill="url(#af1)" transform="scale(1 0.878)"/>
<rect x="4" y="0" width="2" height="180" fill="url(#af2)" transform="scale(1 0.933)"/>
<rect x="6" y="0" width="2" height="180" fill="url(#af3)" transform="scale(1 0.978)"/>
<rect x="8" y="0" width="1" height="180" fill="url(#af4)" transform="scale(1 0.956)"/>
<rect x="9" y="0" width="2" height="180" fill="url(#af3)" transform="scale(1 0.944)"/>
<rect x="11" y="0" width="3" height="180" fill="url(#af3)" transform="scale(1 0.917)"/>
<rect x="1540" y="0" width="2" height="180" fill="url(#af1)" transform="scale(1 0.678)"/>
<rect x="1542" y="0" width="2" height="180" fill="url(#af2)" transform="scale(1 0.722)"/>
<rect x="1544" y="0" width="2" height="180" fill="url(#af1)" transform="scale(1 0.7)"/>
<rect x="1546" y="0" width="3" height="180" fill="url(#af2)" transform="scale(1 0.756)"/>
<rect x="1549" y="0" width="2" height="180" fill="url(#af3)" transform="scale(1 0.789)"/>
<rect x="1551" y="0" width="3" height="180" fill="url(#af2)" transform="scale(1 0.778)"/>
<rect x="1554" y="0" width="2" height="180" fill="url(#af3)" transform="scale(1 0.833)"/>
<rect x="1556" y="0" width="3" height="180" fill="url(#af4)" transform="scale(1 0.867)"/>
<rect x="1559" y="0" width="2" height="180" fill="url(#af3)" transform="scale(1 0.889)"/>
<rect x="1561" y="0" width="2" height="180" fill="url(#af3)" transform="scale(1 0.922)"/>
<rect x="1563" y="0" width="2" height="180" fill="url(#af3)" transform="scale(1 0.944)"/>
<rect x="1565" y="0" width="1" height="375" fill="#111"/>
</g>
<g transform="translate(254 560)">
<rect width="1566" height="375" fill="#060021"/>
<path stroke="url(#m13)" d="M803.5 294v81m10-81v81m89-81v81"/>
<path stroke="url(#m14)" d="M802.5 294v81m32-81v81m54-81v81"/>
<path stroke="url(#m15)" d="M821.5 294v81"/>
<path stroke="url(#m23)" d="M805.5 288v87"/>
<path stroke="url(#m24)" d="M831.5 288v87m63-87v87m195-87v87"/>
<path stroke="url(#m25)" d="M900.5 288v87"/>
<path stroke="url(#m32)" d="M1538.5 291v84"/>
<path stroke="url(#m33)" d="M817.5 117v258m9-258v258m2-258v258m12-258v258m26-258v258m9-258v258m3-258v258m23-258v258m218-258v258m10-258v258"/>
<path stroke="url(#m34)" d="M806.5 117v258m4-258v258m2-258v258m20-258v258m11-258v258m1-258v258m3-258v258m37-258v258m21-258v258m215-258v258"/>
<path stroke="url(#m35)" d="M811.5 117v258m19-258v258m15-258v258m38-258v258m13-258v258m153-258v258m16-258v258m26-258v258m43-258v258m51-258v258"/>
<path stroke="url(#m41)" d="M1534.5 288v87"/>
<path stroke="url(#m43)" d="M808.5 270v105m38-105v105m15-105v105m6-105v105m3-105v105m7-105v105m142-105v105m73-105v105m22-105v105m2-105v105m10-105v105m14-105v105m3-105v105m13-105v105"/>
<path stroke="url(#m44)" d="M804.5 270v105m10-105v105m6-105v105m2-105v105m1-105v105m6-105v105m6-105v105m25-105v105m16-105v105m3-105v105m31-105v105m41-105v105m171-105v105m5-105v105m3-105v105m31-105v105m26-105v105"/>
<path stroke="url(#m45)" d="M837.5 267v108m15-108v108m6-108v108m75-108v108m305-108v108"/>
<path stroke="url(#m53)" d="M807.5 261v114m20-114v114m12-114v114m20-114v114m21-114v114m10-114v114m1-114v114m8-114v114m13-114v114m36-114v114m55-114v114m44-114v114m58-114v114m4-114v114m15-114v114m7-114v114m32-114v114"/>
<path stroke="url(#m54)" d="M818.5 258v117m44-117v117m2-117v117m5-117v117m13-117v117m32-117v117m24-117v117m79-117v117m11-117v117m13-117v117m49-117v117m6-117v117m4-117v117m4-117v117m14-117v117m7-117v117m7-117v117m4-117v117m3-117v117m60-117v117m11-117v117m57-117v117"/>
<path stroke="url(#m55)" d="M816.5 255v120m20-120v120m14-120v120m112-120v120m83-120v120m5-120v120m67-120v120m11-120v120m5-120v120m11-120v120m109-120v120"/>
<path stroke="url(#m61)" d="M1537.5 279v96m2-96v96"/>
<path stroke="url(#m62)" d="M1536.5 279v96"/>
<path stroke="url(#m63)" d="M863.5 252v123m29-123v123m6-123v123m15-123v123m99-123v123m1-123v123m17-123v123m13-123v123m24-123v123m11-123v123m10-123v123m24-123v123m74-123v123m19-123v123m3-123v123"/>
<path stroke="url(#m64)" d="M825.5 246v129m99-129v129m23-129v129m74-129v129m60-129v129m18-129v129m4-129v129m18-129v129m44-129v129m16-129v129m14-129v129m6-129v129"/>
<path stroke="url(#m65)" d="M800.5 243v132m1-132v132m18-132v132m35-132v132m3-132v132m85-132v132m7-132v132m5-132v132m2-132v132m53-132v132m20-132v132m22-132v132m2-132v132m4-132v132m15-132v132m8-132v132m22-132v132m6-132v132m88-132v132m4-132v132m17-132v132m29-132v132"/>
<path stroke="url(#m71)" d="M647.5 270v105"/>
<path stroke="url(#m72)" d="M188.5 270v105m527-105v105"/>
<path stroke="url(#m73)" d="M946.5 240v135m68-135v135m8-135v135m36-135v135m5-135v135m7-135v135m5-135v135m7-135v135m3-135v135m9-135v135m7-135v135m40-135v135m43-135v135m6-135v135m2-135v135m6-135v135m15-135v135m5-135v135m36-135v135"/>
<path stroke="url(#m74)" d="M881.5 231v144m35-144v144m13-144v144m3-144v144m67-144v144m34-144v144m21-144v144m2-144v144m20-144v144m3-144v144m31-144v144m63-144v144m7-144v144m51-144v144m4-144v144m8-144v144m18-144v144"/>
<path stroke="url(#m75)" d="M838.5 225v150m17-150v150m49-150v150m57-150v150m19-150v150m17-150v150m13-150v150m6-150v150m61-150v150m30-150v150m75-150v150m11-150v150m1-150v150m3-150v150m5-150v150m2-150v150m7-150v150m30-150v150m11-150v150"/>
<path stroke="url(#m80)" d="M792.5 258v117m735-117v117"/>
<path stroke="url(#m81)" d="M197.5 255v120m1334-120v120"/>
<path stroke="url(#m82)" d="M422.5 252v123m1113-123v123"/>
<path stroke="url(#m83)" d="M798.5 117v258m137-258v258m43-258v258m18-258v258m5-258v258m5-258v258m9-258v258m22-258v258m5-258v258m20-258v258m102-258v258m19-258v258m31-258v258m11-258v258m41-258v258"/>
<path stroke="url(#m84)" d="M943.5 234v141m17-141v141m7-141v141m23-141v141m35-141v141m6-141v141m9-141v141m4-141v141m8-141v141m17-141v141m26-141v141m11-141v141m44-141v141m9-141v141m30-141v141m43-141v141m4-141v141m8-141v141m1-141v141m19-141v141"/>
<path stroke="url(#m85)" d="M928.5 216v159m6-159v159m73-159v159m169-159v159m58-159v159m28-159v159m1-159v159"/>
<path stroke="url(#m90)" d="M588.5 249v126"/>
<path stroke="url(#m91)" d="M168.5 243v132m199-132v132m47-132v132m106-132v132m51-132v132m6-132v132m129-132v132m823-132v132"/>
<path stroke="url(#m92)" d="M221.5 240v135m279-135v135m104-135v135m11-135v135m71-135v135m16-135v135m830-135v135"/>
<path stroke="url(#m93)" d="M799.5 243v132m127-132v132m4-132v132m7-132v132m20-132v132m14-132v132m24-132v132m32-132v132m39-132v132m92-132v132m9-132v132m84-132v132"/>
<path stroke="url(#m94)" d="M918.5 231v144m2-144v144m25-144v144m20-144v144m10-144v144m2-144v144m27-144v144m22-144v144m6-144v144m116-144v144m6-144v144m14-144v144m61-144v144m8-144v144m5-144v144"/>
<path stroke="url(#m95)" d="M919.5 219v156m63-156v156m41-156v156m88-156v156m46-156v156m18-156v156m45-156v156"/>
<path stroke="url(#m100)" d="M198.5 240v135m95-135v135m172-135v135m40-135v135m73-135v135m18-135v135"/>
<path stroke="url(#m101)" d="M207.5 231v144m19-144v144m1-144v144m4-144v144m26-144v144m54-144v144m163-144v144m102-144v144m29-144v144m33-144v144m15-144v144"/>
<path stroke="url(#m102)" d="M212.5 225v150m1-150v150m16-150v150m21-150v150m125-150v150m244-150v150m25-150v150m753-150v150m136-150v150"/>
<path stroke="url(#m103)" d="M848.5 240v135m120-135v135m8-135v135m252-135v135m29-135v135"/>
<path stroke="url(#m104)" d="M911.5 222v153m4-153v153m7-153v153m48-153v153m4-153v153m119-153v153m175-153v153"/>
<path stroke="url(#m105)" d="M809.5 117v258m24-258v258m133-258v258m13-258v258m21-258v258m153-258v258m106-258v258"/>
<path stroke="url(#m110)" d="M16.5 243v132m166-132v132m5-132v132m16-132v132m27-132v132m25-132v132m16-132v132m5-132v132m40-132v132m8-132v132m30-132v132m90-132v132m43-132v132m3-132v132m5-132v132m8-132v132m120-132v132m25-132v132m4-132v132m43-132v132m9-132v132m19-132v132m34-132v132m29-132v132m605-132v132m129-132v132"/>
<path stroke="url(#m111)" d="M35.5 231v144m124-144v144m17-144v144m8-144v144m1-144v144m29-144v144m31-144v144m16-144v144m70-144v144m15-144v144m69-144v144m41-144v144m2-144v144m12-144v144m36-144v144m6-144v144m10-144v144m25-144v144m12-144v144m5-144v144m21-144v144m42-144v144m7-144v144m51-144v144m18-144v144m21-144v144m2-144v144m25-144v144m34-144v144m661-144v144"/>
<path stroke="url(#m112)" d="M152.5 222v153m43-153v153m9-153v153m6-153v153m1-153v153m5-153v153m6-153v153m18-153v153m16-153v153m25-153v153m15-153v153m81-153v153m15-153v153m21-153v153m3-153v153m22-153v153m53-153v153m8-153v153m14-153v153m15-153v153m9-153v153m21-153v153m50-153v153m13-153v153m70-153v153"/>
<path stroke="url(#m113)" d="M849.5 237v138m46-138v138m8-138v138m313-138v138"/>
<path stroke="url(#m114)" d="M824.5 225v150m32-150v150m30-150v150m50-150v150m8-150v150m8-150v150m31-150v150m2-150v150m2-150v150m1-150v150m1-150v150m3-150v150m46-150v150m140-150v150"/>
<path stroke="url(#m115)" d="M981.5 216v159m5-159v159m166-159v159"/>
<path stroke="url(#m120)" d="M124.5 240v135m19-135v135m35-135v135m16-135v135m7-135v135m14-135v135m2-135v135m46-135v135m16-135v135m35-135v135m14-135v135m1-135v135m6-135v135m7-135v135m11-135v135m9-135v135m7-135v135m5-135v135m5-135v135m38-135v135m34-135v135m17-135v135m26-135v135m30-135v135m3-135v135m33-135v135m3-135v135m6-135v135m21-135v135m9-135v135m7-135v135m16-135v135m27-135v135m17-135v135m56-135v135m30-135v135m11-135v135m20-135v135m10-135v135m687-135v135m48-135v135m2-135v135"/>
<path stroke="url(#m121)" d="M26.5 231v144m21-144v144m15-144v144m91-144v144m24-144v144m4-144v144m18-144v144m9-144v144m1-144v144m9-144v144m18-144v144m16-144v144m1-144v144m32-144v144m6-144v144m1-144v144m2-144v144m3-144v144m28-144v144m11-144v144m27-144v144m5-144v144m3-144v144m12-144v144m8-144v144m34-144v144m7-144v144m5-144v144m27-144v144m8-144v144m3-144v144m1-144v144m32-144v144m58-144v144m13-144v144m16-144v144m30-144v144m21-144v144m30-144v144m51-144v144m3-144v144m8-144v144m18-144v144m19-144v144m718-144v144"/>
<path stroke="url(#m122)" d="M44.5 222v153m9-153v153m73-153v153m21-153v153m1-153v153m41-153v153m2-153v153m11-153v153m3-153v153m43-153v153m34-153v153m17-153v153m3-153v153m1-153v153m24-153v153m34-153v153m3-153v153m1-153v153m7-153v153m37-153v153m36-153v153m22-153v153m74-153v153m16-153v153m4-153v153m1-153v153m13-153v153m8-153v153m3-153v153m6-153v153m5-153v153m12-153v153m4-153v153m4-153v153m58-153v153m5-153v153m2-153v153m94-153v153m4-153v153m8-153v153m2-153v153m486-153v153m122-153v153m59-153v153"/>
<path stroke="url(#m123)" d="M923.5 234v141m123-141v141m14-141v141m1-141v141m62-141v141m22-141v141m26-141v141m55-141v141m43-141v141"/>
<path stroke="url(#m124)" d="M871.5 117v258m14-258v258m56-258v258m52-258v258m12-258v258m15-258v258m44-258v258m51-258v258m36-258v258m89-258v258m7-258v258"/>
<path stroke="url(#m125)" d="M842.5 213v162m11-162v162m21-162v162m13-162v162m2-162v162m20-162v162m41-162v162m8-162v162m53-162v162m7-162v162m30-162v162m39-162v162m92-162v162m9-162v162m15-162v162m6-162v162"/>
<path stroke="url(#m130)" d="M19.5 234v141m24-141v141m25-141v141m103-141v141m9-141v141m10-141v141m10-141v141m25-141v141m37-141v141m5-141v141m53-141v141m17-141v141m1-141v141m20-141v141m23-141v141m1-141v141m18-141v141m2-141v141m10-141v141m30-141v141m7-141v141m3-141v141m11-141v141m3-141v141m7-141v141m9-141v141m62-141v141m7-141v141m19-141v141m10-141v141m2-141v141m11-141v141m33-141v141m10-141v141m6-141v141m21-141v141m4-141v141m2-141v141m5-141v141m3-141v141m4-141v141m2-141v141m6-141v141m3-141v141m2-141v141m37-141v141m3-141v141m5-141v141m1-141v141m39-141v141m549-141v141m8-141v141m60-141v141m21-141v141m16-141v141m28-141v141m15-141v141m18-141v141m31-141v141"/>
<path stroke="url(#m131)" d="M34.5 117v258m5-258v258m1-258v258m5-258v258m33-258v258m28-258v258m17-258v258m47-258v258m5-258v258m4-258v258m7-258v258m7-258v258m26-258v258m9-258v258m16-258v258m7-258v258m13-258v258m9-258v258m1-258v258m4-258v258m10-258v258m2-258v258m8-258v258m2-258v258m5-258v258m8-258v258m4-258v258m6-258v258m9-258v258m1-258v258m16-258v258m1-258v258m10-258v258m28-258v258m5-258v258m13-258v258m2-258v258m2-258v258m8-258v258m3-258v258m9-258v258m27-258v258m3-258v258m25-258v258m3-258v258m5-258v258m4-258v258m1-258v258m6-258v258m12-258v258m7-258v258m2-258v258m15-258v258m3-258v258m11-258v258m18-258v258m1-258v258m1-258v258m7-258v258m6-258v258m7-258v258m13-258v258m23-258v258m7-258v258m3-258v258m3-258v258m2-258v258m11-258v258m6-258v258m16-258v258m10-258v258m8-258v258m5-258v258m11-258v258m4-258v258m16-258v258m33-258v258m7-258v258m503-258v258m15-258v258m19-258v258m22-258v258m4-258v258m88-258v258m50-258v258m53-258v258"/>
<path stroke="url(#m132)" d="M93.5 117v258m53-258v258m50-258v258m10-258v258m18-258v258m23-258v258m22-258v258m14-258v258m12-258v258m6-258v258m25-258v258m79-258v258m2-258v258m40-258v258m49-258v258m5-258v258m1-258v258m5-258v258m3-258v258m16-258v258m58-258v258m16-258v258m11-258v258m13-258v258m15-258v258m31-258v258m1-258v258m39-258v258m1-258v258m2-258v258m1-258v258m11-258v258m8-258v258m38-258v258m7-258v258m6-258v258m12-258v258m578-258v258"/>
<path stroke="url(#m133)" d="M964.5 117v258m119-258v258m15-258v258m62-258v258m31-258v258m15-258v258m1-258v258"/>
<path stroke="url(#m134)" d="M815.5 222v153m26-153v153m24-153v153m3-153v153m5-153v153m48-153v153m18-153v153m14-153v153m20-153v153m11-153v153m18-153v153m6-153v153m28-153v153m3-153v153m98-153v153m1-153v153m39-153v153m62-153v153m26-153v153"/>
<path stroke="url(#m135)" d="M908.5 210v165m17-165v165m143-165v165m29-165v165m45-165v165m4-165v165m9-165v165m17-165v165m47-165v165m4-165v165m1-165v165m3-165v165"/>
<path stroke="url(#m140)" d="M29.5 219v156m32-156v156m34-156v156m60-156v156m78-156v156m16-156v156m10-156v156m7-156v156m18-156v156m2-156v156m21-156v156m23-156v156m22-156v156m21-156v156m16-156v156m6-156v156m16-156v156m28-156v156m1-156v156m1-156v156m43-156v156m5-156v156m20-156v156m22-156v156m1-156v156m3-156v156m4-156v156m64-156v156m13-156v156m44-156v156m8-156v156m4-156v156m1-156v156m20-156v156m4-156v156m45-156v156m11-156v156m1-156v156m13-156v156m20-156v156m2-156v156m491-156v156m54-156v156m33-156v156m5-156v156m31-156v156m27-156v156m30-156v156m14-156v156m27-156v156m23-156v156"/>
<path stroke="url(#m141)" d="M15.5 117v258m2-258v258m4-258v258m6-258v258m15-258v258m10-258v258m12-258v258m8-258v258m2-258v258m7-258v258m9-258v258m12-258v258m27-258v258m3-258v258m42-258v258m18-258v258m42-258v258m24-258v258m2-258v258m8-258v258m7-258v258m31-258v258m2-258v258m1-258v258m3-258v258m6-258v258m23-258v258m2-258v258m1-258v258m15-258v258m11-258v258m24-258v258m5-258v258m2-258v258m45-258v258m2-258v258m2-258v258m3-258v258m1-258v258m1-258v258m4-258v258m2-258v258m53-258v258m5-258v258m23-258v258m3-258v258m4-258v258m1-258v258m5-258v258m1-258v258m9-258v258m2-258v258m64-258v258m2-258v258m17-258v258m40-258v258m53-258v258m7-258v258m27-258v258m493-258v258m16-258v258m14-258v258m4-258v258m4-258v258m21-258v258m3-258v258m8-258v258m72-258v258m19-258v258m8-258v258m13-258v258m16-258v258m15-258v258m3-258v258m12-258v258m11-258v258m4-258v258m8-258v258"/>
<path stroke="url(#m142)" d="M28.5 219v156m2-156v156m6-156v156m14-156v156m6-156v156m4-156v156m9-156v156m11-156v156m29-156v156m16-156v156m11-156v156m8-156v156m5-156v156m1-156v156m1-156v156m12-156v156m3-156v156m3-156v156m54-156v156m12-156v156m4-156v156m7-156v156m26-156v156m17-156v156m32-156v156m24-156v156m11-156v156m1-156v156m66-156v156m1-156v156m11-156v156m42-156v156m3-156v156m31-156v156m25-156v156m10-156v156m7-156v156m38-156v156m11-156v156m56-156v156m6-156v156m1-156v156m22-156v156m20-156v156m1-156v156m9-156v156m11-156v156m9-156v156m9-156v156m1-156v156m1-156v156m1-156v156m9-156v156m1-156v156m7-156v156m4-156v156m12-156v156m528-156v156m10-156v156m42-156v156m3-156v156m29-156v156m1-156v156m6-156v156m5-156v156m8-156v156m45-156v156m11-156v156m15-156v156m11-156v156m23-156v156"/>
<path stroke="url(#m143)" d="M906.5 117v258m21-258v258m4-258v258m9-258v258m23-258v258m9-258v258m52-258v258m188-258v258"/>
<path stroke="url(#m144)" d="M969.5 219v156m22-156v156m43-156v156m37-156v156m2-156v156m177-156v156"/>
<path stroke="url(#m145)" d="M851.5 204v171m21-171v171m21-171v171m4-171v171m10-171v171m48-171v171m180-171v171m14-171v171m20-171v171m46-171v171m7-171v171m11-171v171m16-171v171"/>
<path stroke="url(#m150)" d="M14.5 117v258m4-258v258m2-258v258m57-258v258m5-258v258m9-258v258m27-258v258m23-258v258m15-258v258m1-258v258m15-258v258m60-258v258m33-258v258m15-258v258m35-258v258m19-258v258m21-258v258m11-258v258m38-258v258m15-258v258m24-258v258m26-258v258m2-258v258m12-258v258m35-258v258m16-258v258m18-258v258m16-258v258m67-258v258m19-258v258m1-258v258m43-258v258m2-258v258m55-258v258m9-258v258m9-258v258m1-258v258m17-258v258m3-258v258m484-258v258m14-258v258m13-258v258m8-258v258m32-258v258m1-258v258m2-258v258m8-258v258m1-258v258m4-258v258m17-258v258m24-258v258m5-258v258m1-258v258m1-258v258m35-258v258m7-258v258m12-258v258m18-258v258m23-258v258m4-258v258"/>
<path stroke="url(#m151)" d="M38.5 117v258m11-258v258m5-258v258m5-258v258m4-258v258m10-258v258m10-258v258m13-258v258m8-258v258m6-258v258m9-258v258m1-258v258m2-258v258m13-258v258m2-258v258m8-258v258m15-258v258m13-258v258m70-258v258m34-258v258m27-258v258m18-258v258m29-258v258m25-258v258m8-258v258m12-258v258m37-258v258m45-258v258m39-258v258m12-258v258m69-258v258m14-258v258m8-258v258m31-258v258m33-258v258m21-258v258m13-258v258m1-258v258m10-258v258m15-258v258m1-258v258m17-258v258m6-258v258m27-258v258m490-258v258m30-258v258m15-258v258m14-258v258m8-258v258m6-258v258m19-258v258m4-258v258m1-258v258m1-258v258m7-258v258m2-258v258m8-258v258m5-258v258m17-258v258m15-258v258m1-258v258m2-258v258m7-258v258m1-258v258m1-258v258m50-258v258m1-258v258m6-258v258m1-258v258m3-258v258m4-258v258m4-258v258"/>
<path stroke="url(#m152)" d="M32.5 216v159m16-159v159m22-159v159m9-159v159m26-159v159m2-159v159m21-159v159m12-159v159m18-159v159m4-159v159m58-159v159m18-159v159m4-159v159m12-159v159m85-159v159m9-159v159m30-159v159m12-159v159m36-159v159m8-159v159m2-159v159m26-159v159m19-159v159m5-159v159m6-159v159m38-159v159m59-159v159m21-159v159m4-159v159m4-159v159m10-159v159m13-159v159m18-159v159m40-159v159m10-159v159m26-159v159m6-159v159m562-159v159m36-159v159m2-159v159m1-159v159m12-159v159m12-159v159m5-159v159m4-159v159m41-159v159m5-159v159m34-159v159m1-159v159m11-159v159m2-159v159m9-159v159m12-159v159m2-159v159m31-159v159"/>
<path stroke="url(#m153)" d="M994.5 228v147m4-147v147m37-147v147m20-147v147m58-147v147m135-147v147m7-147v147m3-147v147"/>
<path stroke="url(#m154)" d="M1162.5 216v159m12-159v159m56-159v159m30-159v159"/>
<path stroke="url(#m155)" d="M1074.5 204v171m12-171v171m61-171v171m23-171v171m86-171v171"/>
<path stroke="url(#m160)" d="M24.5 117v258m33-258v258m30-258v258m5-258v258m9-258v258m13-258v258m2-258v258m1-258v258m10-258v258m27-258v258m10-258v258m183-258v258m39-258v258m45-258v258m84-258v258m33-258v258m53-258v258m28-258v258m140-258v258m538-258v258m12-258v258m6-258v258m8-258v258m20-258v258m15-258v258m11-258v258m9-258v258m5-258v258m17-258v258m5-258v258m11-258v258m1-258v258m1-258v258m34-258v258m22-258v258m21-258v258"/>
<path stroke="url(#m161)" d="M25.5 222v153m6-153v153m10-153v153m10-153v153m7-153v153m7-153v153m1-153v153m1-153v153m17-153v153m10-153v153m3-153v153m1-153v153m1-153v153m31-153v153m4-153v153m31-153v153m18-153v153m54-153v153m103-153v153m40-153v153m18-153v153m5-153v153m76-153v153m54-153v153m5-153v153m94-153v153m25-153v153m22-153v153m41-153v153m61-153v153m16-153v153m486-153v153m14-153v153m2-153v153m3-153v153m14-153v153m6-153v153m5-153v153m10-153v153m1-153v153m25-153v153m10-153v153m40-153v153m7-153v153m4-153v153m5-153v153m6-153v153m6-153v153m24-153v153m6-153v153m4-153v153m2-153v153m18-153v153m17-153v153"/>
<path stroke="url(#m162)" d="M33.5 213v162m4-162v162m39-162v162m9-162v162m36-162v162m17-162v162m1-162v162m102-162v162m29-162v162m17-162v162m23-162v162m87-162v162m23-162v162m9-162v162m292-162v162m39-162v162m521-162v162m3-162v162m14-162v162m8-162v162m11-162v162m26-162v162m6-162v162m27-162v162m10-162v162m1-162v162m38-162v162m7-162v162m2-162v162m8-162v162m8-162v162m53-162v162m12-162v162m2-162v162"/>
<path stroke="url(#m163)" d="M1059.5 225v150"/>
<path stroke="url(#m164)" d="M1166.5 213v162"/>
<path stroke="url(#m165)" d="M1084.5 201v174"/>
<path stroke="url(#m170)" d="M46.5 228v147m25-147v147m18-147v147m72-147v147m226-147v147m134-147v147m751-147v147m1-147v147m39-147v147m35-147v147m38-147v147m14-147v147m55-147v147m10-147v147m2-147v147"/>
<path stroke="url(#m171)" d="M23.5 216v159m77-159v159m13-159v159m2-159v159m16-159v159m11-159v159m243-159v159m276-159v159m75-159v159m541-159v159m2-159v159m22-159v159m20-159v159m2-159v159m27-159v159m10-159v159m20-159v159m9-159v159m15-159v159m7-159v159m7-159v159m25-159v159m29-159v159m7-159v159m3-159v159m15-159v159m5-159v159m14-159v159"/>
<path stroke="url(#m172)" d="M103.5 204v171m216-171v171m995-171v171m56-171v171m83-171v171m5-171v171m30-171v171m3-171v171m20-171v171m11-171v171"/>
<path stroke="url(#m173)" d="M917.5 222v153"/>
<path stroke="url(#m174)" d="M959.5 210v165m262-165v165"/>
<path stroke="url(#m180)" d="M22.5 225v150m64-150v150m2-150v150m20-150v150m320-150v150m859-150v150m2-150v150m2-150v150m35-150v150m25-150v150m8-150v150m25-150v150m103-150v150"/>
<path stroke="url(#m181)" d="M75.5 216v159m36-159v159m1-159v159m315-159v159m847-159v159m8-159v159m6-159v159m7-159v159m16-159v159m13-159v159m45-159v159m76-159v159m44-159v159"/>
<path stroke="url(#m182)" d="M55.5 207v168m78-168v168m34-168v168m594-168v168m510-168v168m22-168v168m1-168v168m2-168v168m22-168v168m37-168v168m9-168v168m55-168v168m17-168v168"/>
<path stroke="url(#l0)" d="M2.5 363v12m1-12v12m1-12v12m1-12v12m2-12v12"/>
<path stroke="url(#l10)" d="M0.5 359v16m1-16v16m5-16v16m5-16v16m1552-16v16m2-16v16"/>
<path stroke="url(#l20)" d="M8.5 357v18m1-18v18m1-18v18m2-18v18m1544-18v18m2-18v18m1-18v18m1-18v18m1-18v18"/>
<path stroke="url(#l30)" d="M189.5 353v22m1373-22v22"/>
<path stroke="url(#l31)" d="M891.5 351v24m171-24v24"/>
<path stroke="url(#l40)" d="M154.5 351v24m237-24v24m362-24v24m784-24v24m4-24v24m6-24v24m2-24v24m2-24v24m2-24v24m2-24v24m2-24v24m7-24v24"/>
<path stroke="url(#l41)" d="M923.5 349v26m24-26v26m21-26v26m84-26v26m135-26v26"/>
<path stroke="url(#l50)" d="M13.5 347v28m57-28v28m4-28v28m103-28v28m161-28v28m168-28v28m18-28v28m204-28v28m26-28v28m612-28v28m12-28v28m154-28v28m7-28v28m4-28v28m5-28v28m2-28v28m2-28v28"/>
<path stroke="url(#l51)" d="M807.5 347v28m4-28v28m1-28v28m6-28v28m11-28v28m15-28v28m42-28v28m4-28v28m10-28v28m29-28v28m16-28v28m1-28v28m11-28v28m2-28v28m8-28v28m69-28v28m7-28v28m1-28v28m3-28v28m1-28v28m13-28v28m15-28v28m20-28v28m42-28v28m1-28v28m10-28v28m13-28v28m2-28v28m10-28v28m78-28v28m1-28v28"/>
<path stroke="url(#l60)" d="M52.5 345v30m29-30v30m16-30v30m14-30v30m31-30v30m3-30v30m23-30v30m4-30v30m26-30v30m68-30v30m48-30v30m50-30v30m17-30v30m11-30v30m14-30v30m3-30v30m53-30v30m10-30v30m3-30v30m4-30v30m65-30v30m1-30v30m33-30v30m56-30v30m11-30v30m76-30v30m17-30v30m25-30v30m9-30v30m19-30v30m486-30v30m39-30v30m129-30v30m97-30v30m2-30v30m10-30v30"/>
<path stroke="url(#l61)" d="M799.5 311v64m1-64v64m2-64v64m1-64v64m7-64v64m3-64v64m1-64v64m1-64v64m2-64v64m8-64v64m2-64v64m1-64v64m7-64v64m7-64v64m6-64v64m7-64v64m1-64v64m5-64v64m6-64v64m8-64v64m3-64v64m2-64v64m15-64v64m6-64v64m4-64v64m19-64v64m19-64v64m15-64v64m2-64v64m3-64v64m2-64v64m14-64v64m13-64v64m2-64v64m2-64v64m7-64v64m7-64v64m3-64v64m1-64v64m7-64v64m4-64v64m1-64v64m2-64v64m6-64v64m12-64v64m4-64v64m1-64v64m13-64v64m6-64v64m7-64v64m13-64v64m4-64v64m11-64v64m32-64v64m29-64v64m19-64v64m1-64v64m3-64v64m40-64v64m6-64v64m1-64v64m1-64v64"/>
<path stroke="url(#l70)" d="M24.5 341v34m7-34v34m8-34v34m7-34v34m3-34v34m4-34v34m1-34v34m35-34v34m77-34v34m1-34v34m23-34v34m23-34v34m4-34v34m24-34v34m35-34v34m1-34v34m13-34v34m1-34v34m11-34v34m17-34v34m17-34v34m6-34v34m5-34v34m2-34v34m21-34v34m8-34v34m11-34v34m10-34v34m21-34v34m34-34v34m7-34v34m12-34v34m15-34v34m28-34v34m22-34v34m23-34v34m10-34v34m11-34v34m22-34v34m18-34v34m20-34v34m7-34v34m3-34v34m14-34v34m20-34v34m3-34v34m19-34v34m1-34v34m7-34v34m9-34v34m5-34v34m16-34v34m3-34v34m9-34v34m6-34v34m6-34v34m5-34v34m10-34v34m522-34v34m48-34v34m6-34v34m2-34v34m65-34v34m30-34v34m59-34v34m7-34v34m7-34v34m2-34v34m7-34v34m5-34v34"/>
<path stroke="url(#l71)" d="M801.5 311v64m7-64v64m14-64v64m1-64v64m1-64v64m12-64v64m7-64v64m3-64v64m12-64v64m4-64v64m2-64v64m1-64v64m9-64v64m2-64v64m1-64v64m2-64v64m2-64v64m2-64v64m1-64v64m1-64v64m4-64v64m7-64v64m3-64v64m8-64v64m1-64v64m10-64v64m10-64v64m2-64v64m5-64v64m2-64v64m7-64v64m4-64v64m6-64v64m1-64v64m7-64v64m2-64v64m10-64v64m17-64v64m2-64v64m2-64v64m3-64v64m4-64v64m5-64v64m1-64v64m14-64v64m1-64v64m4-64v64m8-64v64m6-64v64m4-64v64m11-64v64m1-64v64m3-64v64m6-64v64m1-64v64m2-64v64m6-64v64m10-64v64m1-64v64m1-64v64m1-64v64m13-64v64m6-64v64m29-64v64m4-64v64m10-64v64m15-64v64m7-64v64m8-64v64m3-64v64m1-64v64m4-64v64m15-64v64m3-64v64m21-64v64m1-64v64m11-64v64m12-64v64m3-64v64m7-64v64"/>
<path stroke="url(#l80)" d="M17.5 339v36m5-36v36m19-36v36m9-36v36m10-36v36m9-36v36m2-36v36m2-36v36m19-36v36m6-36v36m3-36v36m9-36v36m12-36v36m1-36v36m23-36v36m2-36v36m4-36v36m11-36v36m1-36v36m5-36v36m4-36v36m5-36v36m6-36v36m11-36v36m5-36v36m9-36v36m6-36v36m1-36v36m37-36v36m1-36v36m6-36v36m2-36v36m16-36v36m34-36v36m11-36v36m1-36v36m9-36v36m8-36v36m4-36v36m5-36v36m6-36v36m7-36v36m6-36v36m14-36v36m7-36v36m7-36v36m10-36v36m5-36v36m7-36v36m24-36v36m16-36v36m17-36v36m9-36v36m2-36v36m10-36v36m17-36v36m3-36v36m1-36v36m7-36v36m1-36v36m9-36v36m1-36v36m11-36v36m5-36v36m10-36v36m28-36v36m4-36v36m1-36v36m6-36v36m11-36v36m4-36v36m10-36v36m1-36v36m1-36v36m4-36v36m4-36v36m5-36v36m2-36v36m31-36v36m6-36v36m4-36v36m4-36v36m32-36v36m9-36v36m7-36v36m1-36v36m14-36v36m20-36v36m2-36v36m1-36v36m8-36v36m8-36v36m7-36v36m481-36v36m1-36v36m21-36v36m1-36v36m16-36v36m37-36v36m6-36v36m22-36v36m27-36v36m2-36v36m18-36v36m7-36v36m21-36v36m2-36v36m3-36v36m2-36v36m12-36v36m1-36v36m6-36v36m3-36v36m2-36v36m14-36v36m17-36v36m1-36v36m5-36v36m1-36v36m2-36v36m8-36v36m2-36v36m8-36v36"/>
<path stroke="url(#l81)" d="M798.5 311v64m6-64v64m2-64v64m3-64v64m7-64v64m17-64v64m14-64v64m2-64v64m5-64v64m3-64v64m3-64v64m6-64v64m2-64v64m1-64v64m2-64v64m2-64v64m9-64v64m15-64v64m5-64v64m11-64v64m7-64v64m5-64v64m2-64v64m9-64v64m2-64v64m1-64v64m14-64v64m3-64v64m10-64v64m3-64v64m9-64v64m2-64v64m5-64v64m3-64v64m1-64v64m10-64v64m12-64v64m1-64v64m6-64v64m6-64v64m8-64v64m6-64v64m1-64v64m10-64v64m9-64v64m5-64v64m8-64v64m1-64v64m2-64v64m4-64v64m13-64v64m2-64v64m4-64v64m1-64v64m1-64v64m3-64v64m15-64v64m10-64v64m8-64v64m13-64v64m4-64v64m39-64v64m4-64v64m6-64v64m1-64v64m8-64v64m10-64v64m1-64v64m13-64v64m4-64v64m29-64v64"/>
<path stroke="url(#l90)" d="M16.5 335v40m2-40v40m9-40v40m3-40v40m5-40v40m3-40v40m9-40v40m4-40v40m5-40v40m20-40v40m1-40v40m1-40v40m4-40v40m1-40v40m7-40v40m6-40v40m4-40v40m6-40v40m2-40v40m1-40v40m3-40v40m26-40v40m1-40v40m2-40v40m2-40v40m6-40v40m4-40v40m8-40v40m1-40v40m3-40v40m17-40v40m1-40v40m4-40v40m9-40v40m3-40v40m2-40v40m1-40v40m5-40v40m1-40v40m4-40v40m2-40v40m11-40v40m1-40v40m1-40v40m2-40v40m6-40v40m1-40v40m1-40v40m1-40v40m2-40v40m7-40v40m12-40v40m2-40v40m3-40v40m5-40v40m25-40v40m6-40v40m1-40v40m9-40v40m1-40v40m2-40v40m7-40v40m1-40v40m5-40v40m6-40v40m3-40v40m5-40v40m4-40v40m2-40v40m2-40v40m3-40v40m3-40v40m1-40v40m6-40v40m4-40v40m1-40v40m8-40v40m6-40v40m4-40v40m4-40v40m5-40v40m12-40v40m5-40v40m1-40v40m3-40v40m1-40v40m2-40v40m7-40v40m5-40v40m4-40v40m4-40v40m7-40v40m9-40v40m2-40v40m15-40v40m1-40v40m6-40v40m3-40v40m3-40v40m9-40v40m2-40v40m5-40v40m9-40v40m1-40v40m1-40v40m1-40v40m1-40v40m3-40v40m12-40v40m3-40v40m7-40v40m3-40v40m3-40v40m3-40v40m5-40v40m2-40v40m4-40v40m6-40v40m6-40v40m8-40v40m3-40v40m1-40v40m10-40v40m8-40v40m1-40v40m2-40v40m4-40v40m5-40v40m6-40v40m1-40v40m1-40v40m1-40v40m5-40v40m5-40v40m1-40v40m2-40v40m4-40v40m2-40v40m8-40v40m4-40v40m5-40v40m7-40v40m8-40v40m5-40v40m6-40v40m8-40v40m1-40v40m1-40v40m8-40v40m12-40v40m14-40v40m1-40v40m7-40v40m5-40v40m1-40v40m1-40v40m1-40v40m1-40v40m2-40v40m3-40v40m4-40v40m7-40v40m6-40v40m4-40v40m8-40v40m7-40v40m3-40v40m1-40v40m1-40v40m6-40v40m1-40v40m475-40v40m5-40v40m4-40v40m9-40v40m4-40v40m3-40v40m1-40v40m1-40v40m5-40v40m8-40v40m3-40v40m1-40v40m8-40v40m1-40v40m3-40v40m11-40v40m18-40v40m12-40v40m9-40v40m3-40v40m11-40v40m1-40v40m2-40v40m1-40v40m7-40v40m10-40v40m20-40v40m7-40v40m8-40v40m18-40v40m4-40v40m3-40v40m3-40v40m9-40v40m22-40v40m23-40v40m1-40v40m4-40v40"/>
<path stroke="url(#l91)" d="M826.5 345v30m8-30v30m5-30v30m6-30v30m18-30v30m24-30v30m7-30v30m12-30v30m9-30v30m7-30v30m79-30v30m8-30v30m6-30v30m14-30v30m11-30v30m2-30v30m11-30v30m2-30v30m27-30v30m13-30v30m11-30v30m8-30v30m4-30v30m5-30v30m11-30v30m8-30v30m5-30v30m14-30v30m2-30v30m18-30v30m9-30v30m14-30v30m3-30v30m23-30v30m25-30v30m1-30v30"/>
<path stroke="url(#l100)" d="M23.5 333v42m2-42v42m7-42v42m5-42v42m5-42v42m1-42v42m15-42v42m1-42v42m2-42v42m7-42v42m7-42v42m4-42v42m1-42v42m5-42v42m6-42v42m4-42v42m4-42v42m4-42v42m22-42v42m2-42v42m4-42v42m2-42v42m1-42v42m3-42v42m10-42v42m3-42v42m1-42v42m4-42v42m3-42v42m1-42v42m11-42v42m6-42v42m5-42v42m10-42v42m3-42v42m10-42v42m6-42v42m8-42v42m16-42v42m8-42v42m1-42v42m6-42v42m6-42v42m1-42v42m1-42v42m6-42v42m2-42v42m5-42v42m14-42v42m3-42v42m2-42v42m4-42v42m22-42v42m1-42v42m1-42v42m5-42v42m3-42v42m2-42v42m1-42v42m9-42v42m2-42v42m13-42v42m8-42v42m2-42v42m9-42v42m4-42v42m1-42v42m11-42v42m7-42v42m8-42v42m6-42v42m15-42v42m3-42v42m1-42v42m11-42v42m1-42v42m8-42v42m1-42v42m2-42v42m1-42v42m1-42v42m5-42v42m1-42v42m2-42v42m3-42v42m4-42v42m1-42v42m6-42v42m4-42v42m3-42v42m1-42v42m2-42v42m6-42v42m1-42v42m4-42v42m12-42v42m12-42v42m2-42v42m8-42v42m4-42v42m6-42v42m2-42v42m7-42v42m11-42v42m5-42v42m1-42v42m2-42v42m3-42v42m3-42v42m6-42v42m5-42v42m5-42v42m8-42v42m6-42v42m4-42v42m3-42v42m4-42v42m21-42v42m3-42v42m8-42v42m7-42v42m8-42v42m7-42v42m2-42v42m2-42v42m1-42v42m2-42v42m12-42v42m16-42v42m1-42v42m6-42v42m8-42v42m6-42v42m7-42v42m13-42v42m3-42v42m3-42v42m6-42v42m1-42v42m3-42v42m1-42v42m1-42v42m14-42v42m5-42v42m11-42v42m482-42v42m7-42v42m5-42v42m4-42v42m1-42v42m3-42v42m5-42v42m3-42v42m3-42v42m16-42v42m4-42v42m5-42v42m1-42v42m1-42v42m2-42v42m5-42v42m8-42v42m11-42v42m7-42v42m2-42v42m12-42v42m2-42v42m18-42v42m2-42v42m4-42v42m9-42v42m2-42v42m1-42v42m17-42v42m4-42v42m5-42v42m5-42v42m2-42v42m4-42v42m1-42v42m5-42v42m1-42v42m2-42v42m3-42v42m1-42v42m4-42v42m7-42v42m1-42v42m2-42v42m4-42v42m15-42v42m13-42v42m2-42v42m3-42v42m4-42v42m5-42v42m8-42v42"/>
<path stroke="url(#l101)" d="M841.5 343v32m12-32v32m17-32v32m2-32v32m16-32v32m10-32v32m23-32v32m21-32v32m33-32v32m2-32v32m4-32v32m16-32v32m9-32v32m27-32v32m4-32v32m22-32v32m6-32v32m19-32v32m5-32v32m11-32v32m3-32v32m1-32v32m5-32v32m6-32v32m5-32v32m9-32v32m2-32v32m23-32v32m3-32v32m16-32v32m2-32v32m21-32v32m1-32v32m12-32v32m10-32v32m46-32v32"/>
<path stroke="url(#l110)" d="M14.5 329v46m1-46v46m5-46v46m1-46v46m7-46v46m8-46v46m4-46v46m8-46v46m7-46v46m7-46v46m1-46v46m4-46v46m5-46v46m22-46v46m10-46v46m1-46v46m2-46v46m7-46v46m2-46v46m8-46v46m8-46v46m3-46v46m21-46v46m1-46v46m3-46v46m11-46v46m3-46v46m5-46v46m1-46v46m5-46v46m3-46v46m4-46v46m5-46v46m6-46v46m20-46v46m8-46v46m1-46v46m1-46v46m6-46v46m9-46v46m4-46v46m16-46v46m4-46v46m1-46v46m1-46v46m1-46v46m10-46v46m1-46v46m2-46v46m10-46v46m5-46v46m2-46v46m2-46v46m1-46v46m1-46v46m9-46v46m12-46v46m4-46v46m9-46v46m10-46v46m4-46v46m15-46v46m10-46v46m3-46v46m1-46v46m9-46v46m1-46v46m2-46v46m2-46v46m4-46v46m17-46v46m1-46v46m3-46v46m3-46v46m7-46v46m6-46v46m4-46v46m1-46v46m10-46v46m13-46v46m17-46v46m3-46v46m4-46v46m9-46v46m3-46v46m8-46v46m7-46v46m2-46v46m1-46v46m9-46v46m10-46v46m7-46v46m1-46v46m4-46v46m2-46v46m2-46v46m2-46v46m12-46v46m2-46v46m1-46v46m1-46v46m7-46v46m4-46v46m6-46v46m12-46v46m8-46v46m8-46v46m3-46v46m5-46v46m15-46v46m4-46v46m2-46v46m5-46v46m2-46v46m1-46v46m4-46v46m2-46v46m3-46v46m12-46v46m4-46v46m2-46v46m10-46v46m2-46v46m1-46v46m9-46v46m4-46v46m3-46v46m1-46v46m2-46v46m2-46v46m3-46v46m10-46v46m3-46v46m20-46v46m13-46v46m10-46v46m2-46v46m13-46v46m1-46v46m478-46v46m3-46v46m10-46v46m2-46v46m1-46v46m4-46v46m3-46v46m9-46v46m4-46v46m10-46v46m1-46v46m1-46v46m2-46v46m6-46v46m5-46v46m2-46v46m1-46v46m1-46v46m9-46v46m3-46v46m2-46v46m1-46v46m1-46v46m4-46v46m18-46v46m1-46v46m8-46v46m1-46v46m5-46v46m3-46v46m3-46v46m1-46v46m3-46v46m6-46v46m4-46v46m3-46v46m9-46v46m2-46v46m3-46v46m3-46v46m5-46v46m11-46v46m3-46v46m3-46v46m16-46v46m6-46v46m8-46v46m5-46v46m2-46v46m3-46v46m3-46v46m6-46v46m2-46v46m1-46v46m8-46v46m2-46v46m9-46v46"/>
<path stroke="url(#l111)" d="M805.5 341v34m14-34v34m1-34v34m1-34v34m9-34v34m1-34v34m1-34v34m5-34v34m1-34v34m2-34v34m10-34v34m1-34v34m1-34v34m7-34v34m33-34v34m1-34v34m10-34v34m1-34v34m5-34v34m1-34v34m1-34v34m1-34v34m2-34v34m2-34v34m1-34v34m2-34v34m7-34v34m5-34v34m1-34v34m1-34v34m1-34v34m6-34v34m1-34v34m8-34v34m1-34v34m1-34v34m1-34v34m9-34v34m9-34v34m1-34v34m1-34v34m1-34v34m3-34v34m6-34v34m1-34v34m1-34v34m2-34v34m1-34v34m3-34v34m10-34v34m4-34v34m1-34v34m11-34v34m1-34v34m2-34v34m1-34v34m10-34v34m1-34v34m23-34v34m14-34v34m5-34v34m6-34v34m1-34v34m1-34v34m2-34v34m9-34v34m16-34v34m2-34v34m1-34v34m1-34v34m1-34v34m3-34v34m3-34v34m2-34v34m1-34v34m2-34v34m1-34v34m1-34v34m2-34v34m2-34v34m2-34v34m1-34v34m8-34v34m2-34v34m1-34v34m1-34v34m1-34v34m5-34v34m2-34v34m2-34v34m1-34v34m2-34v34m1-34v34m1-34v34m7-34v34m1-34v34m1-34v34m1-34v34m1-34v34m5-34v34m1-34v34m1-34v34m1-34v34m3-34v34m10-34v34m1-34v34m1-34v34m4-34v34m1-34v34m1-34v34m5-34v34m3-34v34m3-34v34m1-34v34m1-34v34m1-34v34m1-34v34m1-34v34m1-34v34m1-34v34m4-34v34m1-34v34m1-34v34m1-34v34m1-34v34m5-34v34m1-34v34m1-34v34m7-34v34m1-34v34m1-34v34m1-34v34m1-34v34m1-34v34m1-34v34m1-34v34m1-34v34m1-34v34m1-34v34m7-34v34m1-34v34m1-34v34m1-34v34m2-34v34m1-34v34m1-34v34m2-34v34m2-34v34m1-34v34"/>
<path stroke="url(#l120)" d="M19.5 327v48m7-48v48m19-48v48m12-48v48m30-48v48m1-48v48m5-48v48m20-48v48m4-48v48m1-48v48m3-48v48m5-48v48m2-48v48m2-48v48m10-48v48m35-48v48m11-48v48m19-48v48m1-48v48m5-48v48m11-48v48m2-48v48m6-48v48m14-48v48m7-48v48m7-48v48m9-48v48m12-48v48m1-48v48m1-48v48m1-48v48m1-48v48m9-48v48m3-48v48m4-48v48m5-48v48m2-48v48m23-48v48m29-48v48m1-48v48m8-48v48m1-48v48m9-48v48m2-48v48m22-48v48m2-48v48m10-48v48m3-48v48m15-48v48m1-48v48m2-48v48m6-48v48m2-48v48m7-48v48m15-48v48m2-48v48m30-48v48m2-48v48m2-48v48m3-48v48m25-48v48m3-48v48m24-48v48m11-48v48m2-48v48m17-48v48m1-48v48m2-48v48m4-48v48m4-48v48m2-48v48m11-48v48m6-48v48m54-48v48m9-48v48m3-48v48m12-48v48m9-48v48m4-48v48m7-48v48m10-48v48m43-48v48m1-48v48m19-48v48m484-48v48m3-48v48m10-48v48m1-48v48m26-48v48m16-48v48m18-48v48m1-48v48m3-48v48m21-48v48m1-48v48m13-48v48m4-48v48m1-48v48m15-48v48m15-48v48m7-48v48m6-48v48m6-48v48m7-48v48m7-48v48m2-48v48m3-48v48m14-48v48m3-48v48m17-48v48m3-48v48m3-48v48m2-48v48m7-48v48m5-48v48m11-48v48"/>
<path stroke="url(#l130)" d="M33.5 323v52m11-52v52m21-52v52m19-52v52m18-52v52m13-52v52m14-52v52m7-52v52m8-52v52m49-52v52m27-52v52m1-52v52m7-52v52m18-52v52m4-52v52m21-52v52m102-52v52m57-52v52m6-52v52m29-52v52m36-52v52m3-52v52m104-52v52m15-52v52m36-52v52m6-52v52m29-52v52m2-52v52m3-52v52m6-52v52m28-52v52m46-52v52m4-52v52m499-52v52m30-52v52m1-52v52m16-52v52m11-52v52m1-52v52m18-52v52m3-52v52m2-52v52m7-52v52m1-52v52m2-52v52m12-52v52m3-52v52m9-52v52m6-52v52m11-52v52m6-52v52m2-52v52m3-52v52m7-52v52m47-52v52m11-52v52m3-52v52m5-52v52"/>
<path stroke="url(#l140)" d="M34.5 321v54m30-54v54m22-54v54m33-54v54m1-54v54m99-54v54m26-54v54m51-54v54m1-54v54m34-54v54m203-54v54m106-54v54m14-54v54m6-54v54m17-54v54m629-54v54m3-54v54m34-54v54m7-54v54m70-54v54m20-54v54m2-54v54m55-54v54m10-54v54m1-54v54m1-54v54m2-54v54m5-54v54"/>
<path stroke="url(#l150)" d="M66.5 317v58m352-58v58m283-58v58m706-58v58m34-58v58"/>
<path stroke="url(#l160)" d="M29.5 315v60m1313-60v60m31-60v60m35-60v60m11-60v60"/>
<rect x="14" y="225" width="778" height="130" fill="url(#p1)"/>
<rect x="14" y="225" width="778" height="130" fill="url(#p2)"/>
<rect x="1268" y="225" width="255" height="130" fill="url(#p1)"/>
<rect x="1268" y="225" width="255" height="130" fill="url(#p2)"/>
<rect x="243" y="201" width="1" height="174" fill="url(#s2)"/>
<rect x="246" y="111" width="1" height="264" fill="url(#s12)"/>
<rect x="248" y="114" width="1" height="261" fill="url(#s13)"/>
<rect x="392" y="231" width="1" height="144" fill="url(#s14)"/>
<rect x="783" y="231" width="1" height="144" fill="url(#s14)"/>
<rect x="828" y="162" width="1" height="213" fill="url(#s15)"/>
<rect x="843" y="141" width="1" height="234" fill="url(#s16)"/>
<rect x="849" y="147" width="1" height="228" fill="url(#s17)"/>
<rect x="907" y="213" width="1" height="162" fill="url(#s18)"/>
<rect x="943" y="171" width="1" height="204" fill="url(#s19)"/>
<rect x="1002" y="156" width="1" height="219" fill="url(#s20)"/>
<rect x="1056" y="141" width="1" height="234" fill="url(#s21)"/>
<rect x="1143" y="135" width="1" height="240" fill="url(#s22)"/>
<rect x="1214" y="111" width="1" height="264" fill="url(#s12)"/>
<rect x="1329" y="114" width="1" height="261" fill="url(#s23)"/>
<rect x="1332" y="156" width="1" height="219" fill="url(#s24)"/>
<rect x="1360" y="117" width="1" height="258" fill="url(#s25)"/>
<rect x="1411" y="120" width="1" height="255" fill="url(#s26)"/>
<rect x="1438" y="156" width="1" height="219" fill="url(#s27)"/>
<rect x="1458" y="120" width="1" height="255" fill="url(#s28)"/>
<rect x="1461" y="105" width="1" height="270" fill="url(#s29)"/>
<rect x="1487" y="126" width="1" height="249" fill="url(#s30)"/>
<rect x="1496" y="165" width="1" height="210" fill="url(#s31)"/>
<rect x="1525" y="201" width="1" height="174" fill="url(#s32)"/>
<rect x="474" y="156" width="1" height="219" fill="url(#s33)"/>
<rect x="1" y="0" width="3" height="180" fill="url(#af1)" transform="scale(1 0.833)"/>
<rect x="4" y="0" width="2" height="180" fill="url(#af2)" transform="scale(1 0.878)"/>
<rect x="6" y="0" width="2" height="180" fill="url(#af4)" transform="scale(1 0.922)"/>
<rect x="8" y="0" width="3" height="180" fill="url(#af3)" transform="scale(1 0.944)"/>
<rect x="11" y="0" width="3" height="180" fill="url(#af3)" transform="scale(1 0.9)"/>
<rect x="1540" y="0" width="2" height="180" fill="url(#af1)" transform="scale(1 0.711)"/>
<rect x="1542" y="0" width="2" height="180" fill="url(#af2)" transform="scale(1 0.767)"/>
<rect x="1544" y="0" width="2" height="180" fill="url(#af3)" transform="scale(1 0.744)"/>
<rect x="1546" y="0" width="3" height="180" fill="url(#af2)" transform="scale(1 0.8)"/>
<rect x="1549" y="0" width="2" height="180" fill="url(#af4)" transform="scale(1 0.844)"/>
<rect x="1551" y="0" width="3" height="180" fill="url(#af3)" transform="scale(1 0.867)"/>
<rect x="1554" y="0" width="2" height="180" fill="url(#af3)" transform="scale(1 0.889)"/>
<rect x="1556" y="0" width="3" height="180" fill="url(#af4)" transform="scale(1 0.922)"/>
<rect x="1559" y="0" width="2" height="180" fill="url(#af3)" transform="scale(1 0.944)"/>
<rect x="1561" y="0" width="2" height="180" fill="url(#af4)" transform="scale(1 0.967)"/>
<rect x="1563" y="0" width="2" height="180" fill="url(#af3)" transform="scale(1 0.989)"/>
<rect x="1565" y="0" width="1" height="375" fill="#111"/>
</g>
<path d="M254.5 180V935" stroke="#fff" stroke-width="1" stroke-dasharray="1 1"/>
<path d="M254.5 181V935" stroke="#000" stroke-width="1" stroke-dasharray="1 1"/>
<rect x="1822" y="554" width="7" height="1" fill="#e0e0e0"/>
<rect x="1822" y="547" width="3" height="1" fill="#e0e0e0"/>
<rect x="1822" y="539" width="3" height="1" fill="#e0e0e0"/>
<rect x="1822" y="532" width="3" height="1" fill="#e0e0e0"/>
<rect x="1822" y="525" width="3" height="1" fill="#e0e0e0"/>
<rect x="1822" y="518" width="7" height="1" fill="#e0e0e0"/>
<rect x="1822" y="510" width="3" height="1" fill="#e0e0e0"/>
<rect x="1822" y="503" width="3" height="1" fill="#e0e0e0"/>
<rect x="1822" y="496" width="3" height="1" fill="#e0e0e0"/>
<rect x="1822" y="488" width="3" height="1" fill="#e0e0e0"/>
<rect x="1822" y="481" width="7" height="1" fill="#e0e0e0"/>
<rect x="1822" y="474" width="3" height="1" fill="#e0e0e0"/>
<rect x="1822" y="466" width="3" height="1" fill="#e0e0e0"/>
<rect x="1822" y="459" width="3" height="1" fill="#e0e0e0"/>
<rect x="1822" y="452" width="3" height="1" fill="#e0e0e0"/>
<rect x="1822" y="444" width="7" height="1" fill="#e0e0e0"/>
<rect x="1822" y="437" width="3" height="1" fill="#e0e0e0"/>
<rect x="1822" y="430" width="3" height="1" fill="#e0e0e0"/>
<rect x="1822" y="422" width="3" height="1" fill="#e0e0e0"/>
<rect x="1822" y="415" width="3" height="1" fill="#e0e0e0"/>
<rect x="1822" y="408" width="7" height="1" fill="#e0e0e0"/>
<rect x="1822" y="400" width="3" height="1" fill="#e0e0e0"/>
<rect x="1822" y="393" width="3" height="1" fill="#e0e0e0"/>
<rect x="1822" y="386" width="3" height="1" fill="#e0e0e0"/>
<rect x="1822" y="378" width="3" height="1" fill="#e0e0e0"/>
<rect x="1822" y="371" width="7" height="1" fill="#e0e0e0"/>
<rect x="1822" y="364" width="3" height="1" fill="#e0e0e0"/>
<rect x="1822" y="356" width="3" height="1" fill="#e0e0e0"/>
<rect x="1822" y="349" width="3" height="1" fill="#e0e0e0"/>
<rect x="1822" y="342" width="3" height="1" fill="#e0e0e0"/>
<rect x="1822" y="334" width="7" height="1" fill="#e0e0e0"/>
<rect x="1822" y="327" width="3" height="1" fill="#e0e0e0"/>
<rect x="1822" y="320" width="3" height="1" fill="#e0e0e0"/>
<rect x="1822" y="313" width="3" height="1" fill="#e0e0e0"/>
<rect x="1822" y="305" width="3" height="1" fill="#e0e0e0"/>
<rect x="1822" y="298" width="7" height="1" fill="#e0e0e0"/>
<rect x="1822" y="291" width="3" height="1" fill="#e0e0e0"/>
<rect x="1822" y="283" width="3" height="1" fill="#e0e0e0"/>
<rect x="1822" y="276" width="3" height="1" fill="#e0e0e0"/>
<rect x="1822" y="269" width="3" height="1" fill="#e0e0e0"/>
<rect x="1822" y="261" width="7" height="1" fill="#e0e0e0"/>
<rect x="1822" y="254" width="3" height="1" fill="#e0e0e0"/>
<rect x="1822" y="247" width="3" height="1" fill="#e0e0e0"/>
<rect x="1822" y="239" width="3" height="1" fill="#e0e0e0"/>
<rect x="1822" y="232" width="3" height="1" fill="#e0e0e0"/>
<rect x="1822" y="225" width="7" height="1" fill="#e0e0e0"/>
<rect x="1822" y="217" width="3" height="1" fill="#e0e0e0"/>
<rect x="1822" y="210" width="3" height="1" fill="#e0e0e0"/>
<rect x="1822" y="203" width="3" height="1" fill="#e0e0e0"/>
<rect x="1822" y="195" width="3" height="1" fill="#e0e0e0"/>
<rect x="1822" y="188" width="7" height="1" fill="#e0e0e0"/>
<rect x="1822" y="181" width="3" height="1" fill="#e0e0e0"/>
<rect x="1822" y="934" width="7" height="1" fill="#e0e0e0"/>
<rect x="1822" y="927" width="3" height="1" fill="#e0e0e0"/>
<rect x="1822" y="919" width="3" height="1" fill="#e0e0e0"/>
<rect x="1822" y="912" width="3" height="1" fill="#e0e0e0"/>
<rect x="1822" y="905" width="3" height="1" fill="#e0e0e0"/>
<rect x="1822" y="898" width="7" height="1" fill="#e0e0e0"/>
<rect x="1822" y="890" width="3" height="1" fill="#e0e0e0"/>
<rect x="1822" y="883" width="3" height="1" fill="#e0e0e0"/>
<rect x="1822" y="876" width="3" height="1" fill="#e0e0e0"/>
<rect x="1822" y="868" width="3" height="1" fill="#e0e0e0"/>
<rect x="1822" y="861" width="7" height="1" fill="#e0e0e0"/>
<rect x="1822" y="854" width="3" height="1" fill="#e0e0e0"/>
<rect x="1822" y="846" width="3" height="1" fill="#e0e0e0"/>
<rect x="1822" y="839" width="3" height="1" fill="#e0e0e0"/>
<rect x="1822" y="832" width="3" height="1" fill="#e0e0e0"/>
<rect x="1822" y="824" width="7" height="1" fill="#e0e0e0"/>
<rect x="1822" y="817" width="3" height="1" fill="#e0e0e0"/>
<rect x="1822" y="810" width="3" height="1" fill="#e0e0e0"/>
<rect x="1822" y="802" width="3" height="1" fill="#e0e0e0"/>
<rect x="1822" y="795" width="3" height="1" fill="#e0e0e0"/>
<rect x="1822" y="788" width="7" height="1" fill="#e0e0e0"/>
<rect x="1822" y="780" width="3" height="1" fill="#e0e0e0"/>
<rect x="1822" y="773" width="3" height="1" fill="#e0e0e0"/>
<rect x="1822" y="766" width="3" height="1" fill="#e0e0e0"/>
<rect x="1822" y="758" width="3" height="1" fill="#e0e0e0"/>
<rect x="1822" y="751" width="7" height="1" fill="#e0e0e0"/>
<rect x="1822" y="744" width="3" height="1" fill="#e0e0e0"/>
<rect x="1822" y="736" width="3" height="1" fill="#e0e0e0"/>
<rect x="1822" y="729" width="3" height="1" fill="#e0e0e0"/>
<rect x="1822" y="722" width="3" height="1" fill="#e0e0e0"/>
<rect x="1822" y="714" width="7" height="1" fill="#e0e0e0"/>
<rect x="1822" y="707" width="3" height="1" fill="#e0e0e0"/>
<rect x="1822" y="700" width="3" height="1" fill="#e0e0e0"/>
<rect x="1822" y="693" width="3" height="1" fill="#e0e0e0"/>
<rect x="1822" y="685" width="3" height="1" fill="#e0e0e0"/>
<rect x="1822" y="678" width="7" height="1" fill="#e0e0e0"/>
<rect x="1822" y="671" width="3" height="1" fill="#e0e0e0"/>
<rect x="1822" y="663" width="3" height="1" fill="#e0e0e0"/>
<rect x="1822" y="656" width="3" height="1" fill="#e0e0e0"/>
<rect x="1822" y="649" width="3" height="1" fill="#e0e0e0"/>
<rect x="1822" y="641" width="7" height="1" fill="#e0e0e0"/>
<rect x="1822" y="634" width="3" height="1" fill="#e0e0e0"/>
<rect x="1822" y="627" width="3" height="1" fill="#e0e0e0"/>
<rect x="1822" y="619" width="3" height="1" fill="#e0e0e0"/>
<rect x="1822" y="612" width="3" height="1" fill="#e0e0e0"/>
<rect x="1822" y="605" width="7" height="1" fill="#e0e0e0"/>
<rect x="1822" y="597" width="3" height="1" fill="#e0e0e0"/>
<rect x="1822" y="590" width="3" height="1" fill="#e0e0e0"/>
<rect x="1822" y="583" width="3" height="1" fill="#e0e0e0"/>
<rect x="1822" y="575" width="3" height="1" fill="#e0e0e0"/>
<rect x="1822" y="568" width="7" height="1" fill="#e0e0e0"/>
<rect x="1822" y="561" width="3" height="1" fill="#e0e0e0"/>
</svg>
<svg class="abs" style="left:0;top:0" width="1919" height="1079" viewBox="0 0 1919 1079" font-family="Liberation Sans,sans-serif" font-size="8.8" fill="#e2e2e2">
<text x="1833" y="165.5" font-size="9.2">Hz</text>
<text x="1834" y="521.6">10000</text>
<text x="1834" y="485">20000</text>
<text x="1834" y="448.4">30000</text>
<text x="1834" y="411.8">40000</text>
<text x="1834" y="375.2">50000</text>
<text x="1834" y="338.6">60000</text>
<text x="1834" y="302">70000</text>
<text x="1834" y="265.4">80000</text>
<text x="1834" y="228.8">90000</text>
<text x="1834" y="192.2">100000</text>
<text x="1834" y="901.6">10000</text>
<text x="1834" y="865">20000</text>
<text x="1834" y="828.4">30000</text>
<text x="1834" y="791.8">40000</text>
<text x="1834" y="755.2">50000</text>
<text x="1834" y="718.6">60000</text>
<text x="1834" y="682">70000</text>
<text x="1834" y="645.4">80000</text>
<text x="1834" y="608.8">90000</text>
<text x="1834" y="572.2">100000</text>
<rect x="254" y="947" width="1567" height="1" fill="#e6e6e6" shape-rendering="crispEdges"/>
<rect x="254" y="948" width="1" height="8" fill="#e6e6e6" shape-rendering="crispEdges"/>
<rect x="278" y="948" width="1" height="4" fill="#e6e6e6" shape-rendering="crispEdges"/>
<rect x="302" y="948" width="1" height="8" fill="#e6e6e6" shape-rendering="crispEdges"/>
<rect x="326" y="948" width="1" height="4" fill="#e6e6e6" shape-rendering="crispEdges"/>
<rect x="349" y="948" width="1" height="8" fill="#e6e6e6" shape-rendering="crispEdges"/>
<text x="350" y="968.3" text-anchor="middle" font-size="9.2">0:20</text>
<rect x="373" y="948" width="1" height="4" fill="#e6e6e6" shape-rendering="crispEdges"/>
<rect x="397" y="948" width="1" height="8" fill="#e6e6e6" shape-rendering="crispEdges"/>
<text x="397.7" y="968.3" text-anchor="middle" font-size="9.2">0:30</text>
<rect x="421" y="948" width="1" height="4" fill="#e6e6e6" shape-rendering="crispEdges"/>
<rect x="445" y="948" width="1" height="8" fill="#e6e6e6" shape-rendering="crispEdges"/>
<text x="445.5" y="968.3" text-anchor="middle" font-size="9.2">0:40</text>
<rect x="469" y="948" width="1" height="4" fill="#e6e6e6" shape-rendering="crispEdges"/>
<rect x="493" y="948" width="1" height="8" fill="#e6e6e6" shape-rendering="crispEdges"/>
<text x="493.2" y="968.3" text-anchor="middle" font-size="9.2">0:50</text>
<rect x="517" y="948" width="1" height="4" fill="#e6e6e6" shape-rendering="crispEdges"/>
<rect x="540" y="948" width="1" height="8" fill="#e6e6e6" shape-rendering="crispEdges"/>
<text x="541" y="968.3" text-anchor="middle" font-size="9.2">1:00</text>
<rect x="564" y="948" width="1" height="4" fill="#e6e6e6" shape-rendering="crispEdges"/>
<rect x="588" y="948" width="1" height="8" fill="#e6e6e6" shape-rendering="crispEdges"/>
<text x="588.7" y="968.3" text-anchor="middle" font-size="9.2">1:10</text>
<rect x="612" y="948" width="1" height="4" fill="#e6e6e6" shape-rendering="crispEdges"/>
<rect x="636" y="948" width="1" height="8" fill="#e6e6e6" shape-rendering="crispEdges"/>
<text x="636.5" y="968.3" text-anchor="middle" font-size="9.2">1:20</text>
<rect x="660" y="948" width="1" height="4" fill="#e6e6e6" shape-rendering="crispEdges"/>
<rect x="684" y="948" width="1" height="8" fill="#e6e6e6" shape-rendering="crispEdges"/>
<text x="684.2" y="968.3" text-anchor="middle" font-size="9.2">1:30</text>
<rect x="708" y="948" width="1" height="4" fill="#e6e6e6" shape-rendering="crispEdges"/>
<rect x="731" y="948" width="1" height="8" fill="#e6e6e6" shape-rendering="crispEdges"/>
<text x="731.9" y="968.3" text-anchor="middle" font-size="9.2">1:40</text>
<rect x="755" y="948" width="1" height="4" fill="#e6e6e6" shape-rendering="crispEdges"/>
<rect x="779" y="948" width="1" height="8" fill="#e6e6e6" shape-rendering="crispEdges"/>
<text x="779.7" y="968.3" text-anchor="middle" font-size="9.2">1:50</text>
<rect x="803" y="948" width="1" height="4" fill="#e6e6e6" shape-rendering="crispEdges"/>
<rect x="827" y="948" width="1" height="8" fill="#e6e6e6" shape-rendering="crispEdges"/>
<text x="827.4" y="968.3" text-anchor="middle" font-size="9.2">2:00</text>
<rect x="851" y="948" width="1" height="4" fill="#e6e6e6" shape-rendering="crispEdges"/>
<rect x="875" y="948" width="1" height="8" fill="#e6e6e6" shape-rendering="crispEdges"/>
<text x="875.2" y="968.3" text-anchor="middle" font-size="9.2">2:10</text>
<rect x="899" y="948" width="1" height="4" fill="#e6e6e6" shape-rendering="crispEdges"/>
<rect x="922" y="948" width="1" height="8" fill="#e6e6e6" shape-rendering="crispEdges"/>
<text x="922.9" y="968.3" text-anchor="middle" font-size="9.2">2:20</text>
<rect x="946" y="948" width="1" height="4" fill="#e6e6e6" shape-rendering="crispEdges"/>
<rect x="970" y="948" width="1" height="8" fill="#e6e6e6" shape-rendering="crispEdges"/>
<text x="970.7" y="968.3" text-anchor="middle" font-size="9.2">2:30</text>
<rect x="994" y="948" width="1" height="4" fill="#e6e6e6" shape-rendering="crispEdges"/>
<rect x="1018" y="948" width="1" height="8" fill="#e6e6e6" shape-rendering="crispEdges"/>
<text x="1018.4" y="968.3" text-anchor="middle" font-size="9.2">2:40</text>
<rect x="1042" y="948" width="1" height="4" fill="#e6e6e6" shape-rendering="crispEdges"/>
<rect x="1066" y="948" width="1" height="8" fill="#e6e6e6" shape-rendering="crispEdges"/>
<text x="1066.2" y="968.3" text-anchor="middle" font-size="9.2">2:50</text>
<rect x="1090" y="948" width="1" height="4" fill="#e6e6e6" shape-rendering="crispEdges"/>
<rect x="1113" y="948" width="1" height="8" fill="#e6e6e6" shape-rendering="crispEdges"/>
<text x="1113.9" y="968.3" text-anchor="middle" font-size="9.2">3:00</text>
<rect x="1137" y="948" width="1" height="4" fill="#e6e6e6" shape-rendering="crispEdges"/>
<rect x="1161" y="948" width="1" height="8" fill="#e6e6e6" shape-rendering="crispEdges"/>
<text x="1161.7" y="968.3" text-anchor="middle" font-size="9.2">3:10</text>
<rect x="1185" y="948" width="1" height="4" fill="#e6e6e6" shape-rendering="crispEdges"/>
<rect x="1209" y="948" width="1" height="8" fill="#e6e6e6" shape-rendering="crispEdges"/>
<text x="1209.4" y="968.3" text-anchor="middle" font-size="9.2">3:20</text>
<rect x="1233" y="948" width="1" height="4" fill="#e6e6e6" shape-rendering="crispEdges"/>
<rect x="1257" y="948" width="1" height="8" fill="#e6e6e6" shape-rendering="crispEdges"/>
<text x="1257.1" y="968.3" text-anchor="middle" font-size="9.2">3:30</text>
<rect x="1281" y="948" width="1" height="4" fill="#e6e6e6" shape-rendering="crispEdges"/>
<rect x="1304" y="948" width="1" height="8" fill="#e6e6e6" shape-rendering="crispEdges"/>
<text x="1304.9" y="968.3" text-anchor="middle" font-size="9.2">3:40</text>
<rect x="1328" y="948" width="1" height="4" fill="#e6e6e6" shape-rendering="crispEdges"/>
<rect x="1352" y="948" width="1" height="8" fill="#e6e6e6" shape-rendering="crispEdges"/>
<text x="1352.6" y="968.3" text-anchor="middle" font-size="9.2">3:50</text>
<rect x="1376" y="948" width="1" height="4" fill="#e6e6e6" shape-rendering="crispEdges"/>
<rect x="1400" y="948" width="1" height="8" fill="#e6e6e6" shape-rendering="crispEdges"/>
<text x="1400.4" y="968.3" text-anchor="middle" font-size="9.2">4:00</text>
<rect x="1424" y="948" width="1" height="4" fill="#e6e6e6" shape-rendering="crispEdges"/>
<rect x="1448" y="948" width="1" height="8" fill="#e6e6e6" shape-rendering="crispEdges"/>
<text x="1448.1" y="968.3" text-anchor="middle" font-size="9.2">4:10</text>
<rect x="1471" y="948" width="1" height="4" fill="#e6e6e6" shape-rendering="crispEdges"/>
<rect x="1495" y="948" width="1" height="8" fill="#e6e6e6" shape-rendering="crispEdges"/>
<text x="1495.9" y="968.3" text-anchor="middle" font-size="9.2">4:20</text>
<rect x="1519" y="948" width="1" height="4" fill="#e6e6e6" shape-rendering="crispEdges"/>
<rect x="1543" y="948" width="1" height="8" fill="#e6e6e6" shape-rendering="crispEdges"/>
<text x="1543.6" y="968.3" text-anchor="middle" font-size="9.2">4:30</text>
<rect x="1567" y="948" width="1" height="4" fill="#e6e6e6" shape-rendering="crispEdges"/>
<rect x="1591" y="948" width="1" height="8" fill="#e6e6e6" shape-rendering="crispEdges"/>
<text x="1591.4" y="968.3" text-anchor="middle" font-size="9.2">4:40</text>
<rect x="1615" y="948" width="1" height="4" fill="#e6e6e6" shape-rendering="crispEdges"/>
<rect x="1639" y="948" width="1" height="8" fill="#e6e6e6" shape-rendering="crispEdges"/>
<text x="1639.1" y="968.3" text-anchor="middle" font-size="9.2">4:50</text>
<rect x="1662" y="948" width="1" height="4" fill="#e6e6e6" shape-rendering="crispEdges"/>
<rect x="1686" y="948" width="1" height="8" fill="#e6e6e6" shape-rendering="crispEdges"/>
<text x="1686.8" y="968.3" text-anchor="middle" font-size="9.2">5:00</text>
<rect x="1710" y="948" width="1" height="4" fill="#e6e6e6" shape-rendering="crispEdges"/>
<rect x="1734" y="948" width="1" height="8" fill="#e6e6e6" shape-rendering="crispEdges"/>
<text x="1734.6" y="968.3" text-anchor="middle" font-size="9.2">5:10</text>
<rect x="1758" y="948" width="1" height="4" fill="#e6e6e6" shape-rendering="crispEdges"/>
<rect x="1782" y="948" width="1" height="8" fill="#e6e6e6" shape-rendering="crispEdges"/>
<text x="1782.3" y="968.3" text-anchor="middle" font-size="9.2">5:20</text>
<rect x="1806" y="948" width="1" height="4" fill="#e6e6e6" shape-rendering="crispEdges"/>
<text x="254.5" y="967.5" font-size="9.2">hms</text>
<rect x="1878" y="175" width="11" height="774" fill="#f4f4f4" shape-rendering="crispEdges"/><rect x="1878" y="176" width="10" height="772" fill="#000" shape-rendering="crispEdges"/>
<rect x="1899" y="175" width="11" height="774" fill="#f4f4f4" shape-rendering="crispEdges"/><rect x="1899" y="176" width="10" height="772" fill="#000" shape-rendering="crispEdges"/>
</svg>
<!-- lower area -->
<div class="abs" style="left:252px;top:974px;width:1667px;height:81px;background:#efefef"></div>
<div class="abs" style="left:0;top:1053px;width:1919px;height:2px;background:linear-gradient(#b9b9b9 50%,#fdfdfd 50%)"></div>
<div class="abs" style="left:522px;top:977px;width:1px;height:75px;background:#8f8f8f;box-shadow:1px 0 0 #fbfbfb"></div>
<div class="abs" style="left:1626px;top:977px;width:1px;height:75px;background:#8f8f8f;box-shadow:1px 0 0 #fbfbfb"></div>
<div class="tb" style="left:259px;top:987px;width:138px"><i style="left:25px"></i><i style="left:53px"></i><i style="left:81px"></i><i style="left:109px"></i></div>
<div class="tb" style="left:259px;top:1015px;width:138px"><i style="left:25px"></i><i style="left:53px"></i><i style="left:81px"></i><i style="left:109px"></i></div>
<div class="tb" style="left:405px;top:987px;width:110px"><i style="left:25px"></i><i style="left:53px"></i><i style="left:80.5px"></i></div>
<div class="tb" style="left:405px;top:1015px;width:110px"><i style="left:25px"></i><i style="left:53px"></i><i style="left:80.5px"></i></div>
<svg class="abs" style="left:258.5px;top:986px" width="260" height="56" viewBox="0 0 260 56" fill="#5c5c5c">
<path d="M8 8l11 5.5-11 5.5z"/>
<path d="M33.5 10.5h5v-2.5l4 3.5-4 3.5v-2.2h-3.2v4.4h9.4v-6.7h2.3v9h-14z" />
<path d="M59 8l11 5.5-11 5.5zM72 8h2.5v11H72z"/>
<path d="M97 8v11l-9.5-5.5zM104.5 8v11l-9.5-5.5z"/>
<path d="M116 8l9.5 5.5-9.5 5.5zM123.5 8l9.5 5.5-9.5 5.5z"/>
<rect x="9" y="37" width="9" height="9"/>
<rect x="36" y="37" width="2.6" height="9"/><rect x="41.5" y="37" width="2.6" height="9"/>
<circle cx="67.5" cy="41.5" r="4.5" fill="#8c0a0a"/><circle cx="67.5" cy="41.5" r="5.5" fill="none" stroke="#e9b0b0" stroke-width=".8" opacity=".6"/>
<path d="M88 35h2.8v13H88zM86.8 35h5.2v1.3h-5.2zM86.8 46.7h5.2v1.3h-5.2zM98 36.5v10l-7-5zM104.5 36.5v10l-7-5z"/>
<path d="M129.2 35h2.8v13h-2.8zM128 35h5.2v1.3H128zM128 46.7h5.2v1.3H128zM116 36.5l7 5-7 5zM122.5 36.5l7 5-7 5z"/>
<circle cx="157.5" cy="11" r="4.5" fill="#f3f3f3" fill-opacity=".6" stroke="#5c5c5c" stroke-width="1.9"/><path d="M161.5 15l4.6 4.6" stroke="#5c5c5c" stroke-width="3.3" stroke-linecap="round" fill="none"/>
<path d="M155 11h5M157.5 8.5v5" stroke="#5c5c5c" stroke-width="1.2"/>
<circle cx="184" cy="11" r="4.5" fill="#f3f3f3" fill-opacity=".6" stroke="#5c5c5c" stroke-width="1.9"/><path d="M188 15l4.6 4.6" stroke="#5c5c5c" stroke-width="3.3" stroke-linecap="round" fill="none"/>
<path d="M181.5 11h5" stroke="#5c5c5c" stroke-width="1.2"/>
<circle cx="213" cy="11" r="4.5" fill="#f3f3f3" fill-opacity=".6" stroke="#5c5c5c" stroke-width="1.9"/><path d="M217 15l4.6 4.6" stroke="#5c5c5c" stroke-width="3.3" stroke-linecap="round" fill="none"/>
<text x="205" y="22.5" font-family="Liberation Sans,sans-serif" font-weight="bold" font-size="6.5" fill="#444">100</text>
<circle cx="243" cy="11" r="4.5" fill="#f3f3f3" fill-opacity=".6" stroke="#5c5c5c" stroke-width="1.9"/><path d="M247 15l4.6 4.6" stroke="#5c5c5c" stroke-width="3.3" stroke-linecap="round" fill="none"/>
<path d="M232.5 5l2.6 3.2h-1.5v3h-2.2v-3h-1.5zM232.5 18l2.6-3.2h-1.5v-3h-2.2v3h-1.5z"/>
<circle cx="160.5" cy="39" r="4.5" fill="#f3f3f3" fill-opacity=".6" stroke="#5c5c5c" stroke-width="1.9"/><path d="M164.5 43l4.6 4.6" stroke="#5c5c5c" stroke-width="3.3" stroke-linecap="round" fill="none"/>
<path d="M153.5 34h-2.5v14h2.5" fill="none" stroke="#5c5c5c" stroke-width="1.3"/>
<circle cx="184" cy="39" r="4.5" fill="#f3f3f3" fill-opacity=".6" stroke="#5c5c5c" stroke-width="1.9"/><path d="M188 43l4.6 4.6" stroke="#5c5c5c" stroke-width="3.3" stroke-linecap="round" fill="none"/>
<path d="M182 37.5h1.3M184.7 37.5h1.3M182 40.5h1.3M184.7 40.5h1.3M182.3 37v1.2M185.7 37v1.2M182.3 39.8v1.2M185.7 39.8v1.2" stroke="#5c5c5c" stroke-width="1"/>
<circle cx="214.5" cy="39" r="4.5" fill="#f3f3f3" fill-opacity=".6" stroke="#5c5c5c" stroke-width="1.9"/><path d="M210.5 43l-4.6 4.6" stroke="#5c5c5c" stroke-width="3.3" stroke-linecap="round" fill="none"/>
<path d="M221 34h2.5v14H221" fill="none" stroke="#5c5c5c" stroke-width="1.3"/>
<circle cx="243" cy="39" r="4.5" fill="#f3f3f3" fill-opacity=".6" stroke="#5c5c5c" stroke-width="1.9"/><path d="M247 43l4.6 4.6" stroke="#5c5c5c" stroke-width="3.3" stroke-linecap="round" fill="none"/>
<path d="M232.5 39.5l2.6-3.2h-1.5v-2.8h-2.2v2.8h-1.5zM232.5 40.5l2.6 3.2h-1.5v2.8h-2.2v-2.8h-1.5z"/>
</svg>
<div class="abs" style="left:858px;top:976.5px;width:440px;height:84px;line-height:84px;font-size:74px;color:#000;white-space:nowrap;letter-spacing:0">00:00:00.000</div>
<div class="sl" style="left:1690px;top:983px">Start</div><div class="sl" style="left:1763px;top:983px">End</div><div class="sl" style="left:1839px;top:984px">Length</div>
<div class="sl" style="left:1579px;top:1001px;width:100px;text-align:right">Selection</div><div class="sl" style="left:1579px;top:1025px;width:100px;text-align:right">View</div>
<div class="box" style="left:1690px;top:999px">00:00:00.000</div><div class="box" style="left:1764px;top:999px">00:00:00.000</div><div class="box" style="left:1838px;top:999px">00:00:00.000</div>
<div class="box" style="left:1690px;top:1022px">00:00:00.000</div><div class="box" style="left:1764px;top:1022px">00:05:27.993</div><div class="box" style="left:1838px;top:1022px">00:05:27.993</div>
<div id="status" class="abs"></div>
<div class="sd" style="left:1411px"></div><div class="sd" style="left:1727px"></div><div class="sd" style="left:1824px"></div><div class="sd" style="left:1916px"></div>
<div class="st" style="left:1418px">192000 Hz, 24-bit, 2 Channels</div><div class="st" style="left:1734px">360,343 Mb</div><div class="st" style="left:1831px">00:05:27.993</div>
</body></html>
